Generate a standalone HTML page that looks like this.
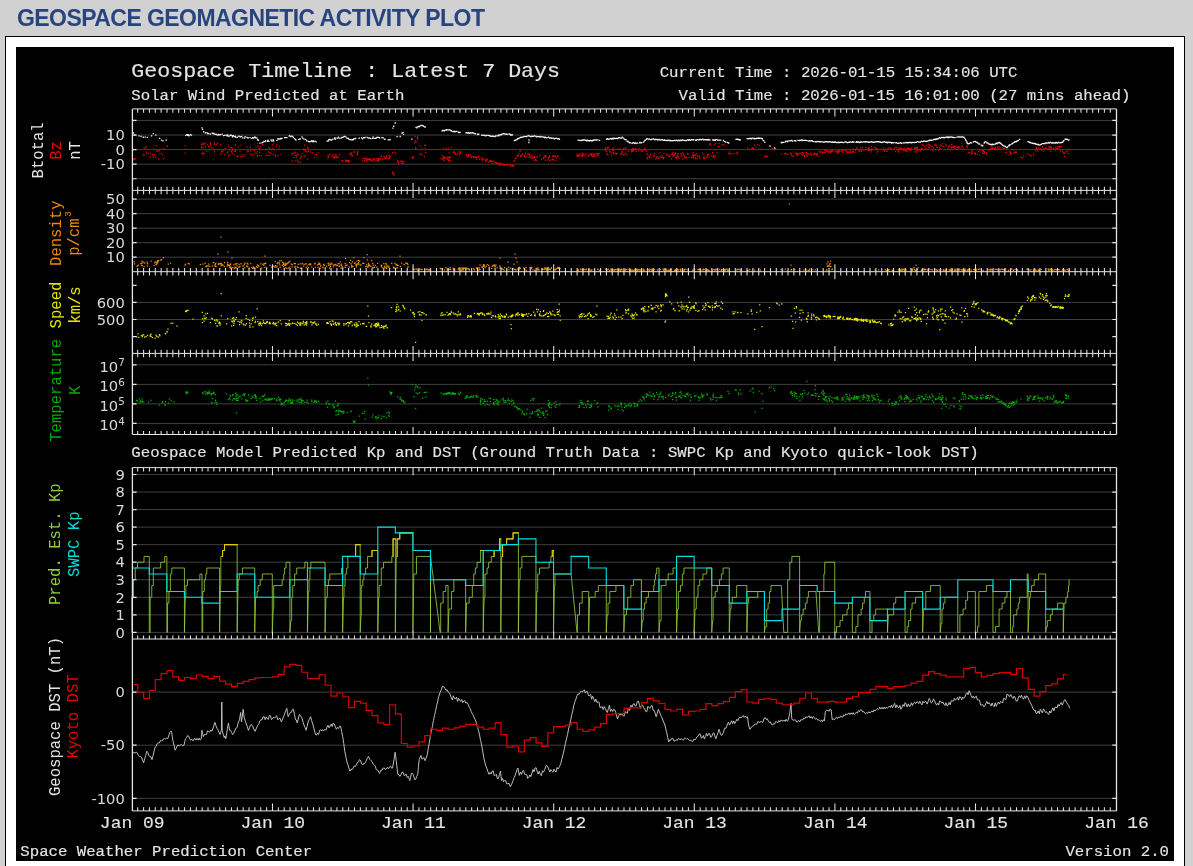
<!DOCTYPE html>
<html lang="en">
<head>
<meta charset="utf-8">
<title>Geospace Geomagnetic Activity Plot</title>
<style>
html,body{margin:0;padding:0;}
body{background:#d1d1d1;width:1193px;height:866px;overflow:hidden;position:relative;font-family:"Liberation Sans",sans-serif;}
h1{position:absolute;left:17px;top:5px;margin:0;font-family:"Liberation Sans",sans-serif;font-weight:bold;font-size:23px;line-height:26px;letter-spacing:-0.56px;color:#28447f;white-space:nowrap;text-transform:uppercase;will-change:transform;}
.box{position:absolute;left:5px;top:36px;width:1178px;height:840px;background:#fff;border:1px solid #000;}
svg{position:absolute;left:0;top:0;will-change:transform;}
</style>
</head>
<body>
<h1>GEOSPACE GEOMAGNETIC ACTIVITY PLOT</h1>
<div class="box"></div>
<svg width="1193" height="866" viewBox="0 0 1193 866">
<rect x="16" y="47" width="1158" height="814" fill="#000"/>
<path d="M132.4 120.45H1116.5M132.4 135.03H1116.5M132.4 149.6H1116.5M132.4 164.17H1116.5M132.4 178.75H1116.5M132.4 257.21H1116.5M132.4 242.69H1116.5M132.4 228.17H1116.5M132.4 213.65H1116.5M132.4 199.13H1116.5M132.4 302.4H1116.5M132.4 319.5H1116.5M132.4 364.8H1116.5M132.4 384.4H1116.5M132.4 403.9H1116.5M132.4 423.4H1116.5M132.4 632.4H1116.5M132.4 614.86H1116.5M132.4 597.31H1116.5M132.4 579.76H1116.5M132.4 562.22H1116.5M132.4 544.67H1116.5M132.4 527.13H1116.5M132.4 509.58H1116.5M132.4 492.04H1116.5M132.4 474.49H1116.5M132.4 692.1H1116.5M132.4 745.2H1116.5M132.4 798.3H1116.5" stroke="#4a4a4a" stroke-width="0.85" fill="none"/>
<path d="M133.49 158.88h1.15M134.57 158.63h1.15M134.19 159.57h1.15M132.62 160.02h1.15M132.55 159.79h1.15M132.66 158.69h1.15M152.68 156.95h1.15M145.13 148.08h1.15M157.77 158.73h1.15M156.51 150.63h1.15M166.53 145.48h1.15M163.57 149.06h1.15M145.65 146.53h1.15M149.77 156.8h1.15M146.56 153.35h1.15M158.06 150.27h1.15M155.77 145.72h1.15M143.52 147.83h1.15M159.1 151.09h1.15M149.91 153.41h1.15M153.4 149.21h1.15M161.96 155.08h1.15M148.15 153.24h1.15M155.21 157.66h1.15M160.33 149.03h1.15M166.63 146.54h1.15M152.52 155.93h1.15M145.84 151.99h1.15M143.01 154.62h1.15M161.22 153.22h1.15M164 149.41h1.15M159.48 153.54h1.15M156.58 151.51h1.15M163.11 158.69h1.15M153.92 154.56h1.15M143.55 155.11h1.15M158.27 159.4h1.15M162.66 148.98h1.15M151.71 154.63h1.15M184.46 149.43h1.15M184.68 145.23h1.15M184.51 153.17h1.15M200.9 144.24h1.15M201.45 153.41h1.15M200.79 147.2h1.15M201.78 153.59h1.15M202.35 153.3h1.15M201.21 146.7h1.15M201.38 153.6h1.15M202.64 142.82h1.15M201 144.01h1.15M201.12 147.73h1.15M201.86 144.46h1.15M202.81 147.52h1.15M210.48 149.21h1.15M222.74 150.64h1.15M213.55 149.8h1.15M216.93 143.32h1.15M221.62 151.67h1.15M221.09 151.88h1.15M210.96 147.29h1.15M204.9 149.99h1.15M204.03 143.47h1.15M207.11 144.57h1.15M209.87 143.3h1.15M202.73 144.44h1.15M204.86 146.88h1.15M203.26 152.75h1.15M215.62 144.41h1.15M208.02 146.69h1.15M210.37 144.11h1.15M220.55 154.12h1.15M212.51 148.26h1.15M204.53 143.88h1.15M209.92 145.74h1.15M220.13 144.56h1.15M203.21 153.64h1.15M213.82 144.39h1.15M214.13 143.01h1.15M213.82 153.95h1.15M220.85 150.71h1.15M208.21 146.92h1.15M206.23 151.58h1.15M213.91 151.66h1.15M209.65 145.26h1.15M219.77 154.03h1.15M250.5 154.96h1.15M249.42 154.12h1.15M230.84 151.32h1.15M234.89 145.17h1.15M224.6 148.32h1.15M231.86 153.53h1.15M253.76 150.44h1.15M253.15 157.25h1.15M253.71 149.39h1.15M230.65 147.66h1.15M229.9 147.38h1.15M243.32 156.14h1.15M250.11 150.84h1.15M244.23 154.88h1.15M226.39 153.12h1.15M252.29 154.66h1.15M247.28 150.82h1.15M229.33 154.74h1.15M234.17 154.89h1.15M254.24 149.79h1.15M236.33 156.73h1.15M246.48 146.94h1.15M227.71 146.7h1.15M252.14 154.96h1.15M228.31 155.21h1.15M254.51 153.08h1.15M234.73 151.71h1.15M227.84 144.98h1.15M254.21 152.99h1.15M240.26 156.56h1.15M237.35 155.78h1.15M249.67 147.46h1.15M231.63 148.49h1.15M231.28 152.19h1.15M231.87 150.08h1.15M227.84 156.27h1.15M234.83 150.57h1.15M242.04 156.19h1.15M236.93 156.36h1.15M239.48 151.5h1.15M240.16 145.04h1.15M237.54 147.11h1.15M223.85 154.87h1.15M229.14 150.77h1.15M246.5 151.81h1.15M233.96 151.33h1.15M241.17 154.68h1.15M227.06 151.86h1.15M231.53 148.29h1.15M247.97 151.2h1.15M269.28 153.04h1.15M278.12 148.73h1.15M270.56 149.58h1.15M268.03 152.12h1.15M266.52 149.95h1.15M267.17 155.5h1.15M272.75 154.62h1.15M278.87 146.23h1.15M269.22 155.53h1.15M276.29 144.57h1.15M258.19 148.71h1.15M256.95 145.97h1.15M256.97 151.8h1.15M274.88 154.9h1.15M259.02 152.44h1.15M271.76 144.64h1.15M277.37 155.86h1.15M260.66 155.65h1.15M265.16 149.33h1.15M280.07 154.02h1.15M259.19 148.57h1.15M268.12 147.31h1.15M260.06 147.03h1.15M273.32 142.96h1.15M269.09 148.69h1.15M255.58 147.21h1.15M270.85 149.67h1.15M256.75 156.1h1.15M274.99 155.92h1.15M257.77 146.31h1.15M256.12 153.29h1.15M261.94 144.46h1.15M265.77 155.1h1.15M275.76 146.22h1.15M258.89 155.2h1.15M269.5 152.23h1.15M257.38 143.48h1.15M272.47 148.48h1.15M256.95 155.46h1.15M271.11 153.6h1.15M291.87 161.09h1.15M291.66 161.16h1.15M296.5 155.66h1.15M297.74 161.83h1.15M294.17 153.46h1.15M297.41 154.6h1.15M292.19 153.8h1.15M291.45 154.22h1.15M294.72 155.3h1.15M300.32 155.14h1.15M297.08 153.97h1.15M295.16 152.29h1.15M293.96 152.26h1.15M299.99 157.89h1.15M293.19 157.08h1.15M302.51 153.22h1.15M301.06 156.64h1.15M297.01 160.86h1.15M295.74 157.42h1.15M299.42 162.42h1.15M295.11 160.84h1.15M299.66 158.78h1.15M295.88 155.75h1.15M291.5 153.46h1.15M304.36 155.69h1.15M307.08 147.2h1.15M304.57 157.17h1.15M316.12 154.66h1.15M307.47 148.36h1.15M307.63 151.55h1.15M305.64 151.35h1.15M307.19 158.94h1.15M317.62 152.84h1.15M306.92 159h1.15M307.88 150.04h1.15M303.34 150.41h1.15M310.3 152.19h1.15M306.28 152.22h1.15M303.4 148.68h1.15M304.64 150.67h1.15M303.94 145.13h1.15M307.8 148.22h1.15M311.93 152.58h1.15M314.36 154.47h1.15M313.85 157.72h1.15M331.33 155.57h1.15M338.83 154.83h1.15M335.55 156.9h1.15M326.98 157.71h1.15M337.66 156.83h1.15M335.67 157.61h1.15M328.18 156.4h1.15M332.78 157.71h1.15M336.56 157.67h1.15M333.78 157.95h1.15M335.03 157.11h1.15M329.32 154.33h1.15M328.1 155.71h1.15M327.75 157.71h1.15M333.46 156.84h1.15M334.32 157.06h1.15M332.59 154.21h1.15M336.48 157.34h1.15M332.76 156.45h1.15M334.73 154.48h1.15M335.71 155.26h1.15M327.36 155.32h1.15M347.18 160.53h1.15M347.27 161.76h1.15M345.22 160.81h1.15M345.1 161.29h1.15M347.49 161.19h1.15M346.46 160.32h1.15M342.35 160.61h1.15M347.29 160.69h1.15M345.84 160.22h1.15M341.63 160.63h1.15M346.7 161.31h1.15M346.73 160.67h1.15M345.41 160.94h1.15M345 160.39h1.15M348.54 160.52h1.15M349.24 161.7h1.15M341.27 160.93h1.15M347.93 161.75h1.15M344.86 160.63h1.15M351.19 156.02h1.15M351.19 154.12h1.15M350.62 153.83h1.15M357.43 151.79h1.15M356.31 153.75h1.15M356.87 154.76h1.15M351.37 155.77h1.15M353.51 151.23h1.15M349.46 153.66h1.15M353.21 152.67h1.15M350.61 152.89h1.15M352.08 155.47h1.15M349.44 155h1.15M356.47 151.72h1.15M357.21 154.81h1.15M357 152.61h1.15M366.96 159.38h1.15M378.8 159.97h1.15M366.74 159.48h1.15M365.13 158.34h1.15M361.85 160.7h1.15M365.32 161.01h1.15M364.64 159h1.15M369.58 158.77h1.15M366.98 161.07h1.15M376.64 160.64h1.15M371.85 160.94h1.15M377.7 159.85h1.15M373.52 158.35h1.15M373.77 159.55h1.15M374.15 160.13h1.15M365.33 158.35h1.15M377.44 158.58h1.15M368.85 159.23h1.15M365.55 160.42h1.15M378.38 158.98h1.15M372.32 159.1h1.15M370.46 159.38h1.15M363.09 158.68h1.15M363.85 160.92h1.15M369.32 158.86h1.15M377.05 161.19h1.15M368.43 158.62h1.15M363.56 158.47h1.15M366.39 158.47h1.15M364.44 158.98h1.15M370.69 160.86h1.15M374.09 159.44h1.15M367.75 159.77h1.15M367.05 159.21h1.15M361.1 159.03h1.15M378.21 158.58h1.15M369.44 160.09h1.15M376.23 158.85h1.15M365.05 158.95h1.15M367.48 159.54h1.15M377.95 160.75h1.15M388.59 155.39h1.15M379.76 158.28h1.15M388.83 157.29h1.15M385.59 155.3h1.15M383.54 159.19h1.15M388.09 158.89h1.15M389.63 156.34h1.15M380.57 155.95h1.15M384.91 158.16h1.15M389.31 158.33h1.15M386.22 158.51h1.15M384.23 157.62h1.15M379.84 158.59h1.15M381.87 159.16h1.15M386.2 156.58h1.15M380.77 156.36h1.15M386.11 158.23h1.15M380.6 155.6h1.15M384.93 157.75h1.15M383.5 156.24h1.15M393.45 152.02h1.15M392.19 152.92h1.15M394.95 153.29h1.15M394.64 152.95h1.15M391.91 152.49h1.15M394.96 153.41h1.15M392.22 172.07h1.15M393.02 174.16h1.15M392.69 172.82h1.15M393.73 174.96h1.15M391.88 172.11h1.15M392.34 173.35h1.15M401.14 161.13h1.15M401.96 162.87h1.15M399.86 161.16h1.15M403.21 161.5h1.15M402.13 161.24h1.15M397.82 162.93h1.15M398.35 163.55h1.15M399.79 161.1h1.15M397.83 161.83h1.15M401.02 163.54h1.15M397.28 161.76h1.15M397.76 163.62h1.15M397.25 160.67h1.15M396.66 161.76h1.15M402.69 163.33h1.15M412.36 158.4h1.15M412.78 157.06h1.15M411.21 158.27h1.15M412.39 156.46h1.15M412.22 157.16h1.15M415.18 140.91h1.15M414.55 136.44h1.15M414.89 141.18h1.15M416.99 138.08h1.15M417.01 139.22h1.15M415.13 147.57h1.15M416.57 142.28h1.15M414.18 142.84h1.15M415.18 148.91h1.15M414.62 141.35h1.15M416.81 136.81h1.15M421.77 155.03h1.15M423.98 145.31h1.15M419.44 145.59h1.15M424.93 148.04h1.15M423.86 156.12h1.15M421.33 148.23h1.15M425.16 152.57h1.15M420.85 153.83h1.15M421.19 148.27h1.15M419.25 154.32h1.15M424.91 152.79h1.15M425.07 145.11h1.15M442.66 158.64h1.15M450.18 160.79h1.15M444.24 157.63h1.15M444.7 158.72h1.15M449.88 157.32h1.15M448.57 159.82h1.15M448.78 159.98h1.15M446.54 157.98h1.15M443.55 158.13h1.15M448.36 156.86h1.15M442.28 159.89h1.15M442.8 156.79h1.15M440.58 158.99h1.15M443.61 160.91h1.15M449.41 160.95h1.15M442.98 156.88h1.15M441.23 158.74h1.15M447.61 158.51h1.15M442.66 158.38h1.15M446.68 159.53h1.15M448 160.31h1.15M447.14 157.05h1.15M448.97 157.82h1.15M446.12 158.18h1.15M447.9 148.19h1.15M442.8 148.7h1.15M441.82 155.73h1.15M446.24 149.59h1.15M444.34 156.92h1.15M445.5 148.55h1.15M448.63 153.19h1.15M450.53 147.13h1.15M456.24 154.52h1.15M458.95 154.93h1.15M453.02 152.26h1.15M453.61 151.82h1.15M459.92 153.51h1.15M459.61 152.6h1.15M459.13 152.93h1.15M454.65 154.34h1.15M459.72 151.45h1.15M457.14 153.67h1.15M454.34 152.59h1.15M453.77 151.88h1.15M454.61 153.58h1.15M457.55 151.87h1.15M452.81 152.41h1.15M469.63 154.79h1.15M467.36 154.85h1.15M470.36 155.95h1.15M465.82 154.52h1.15M467.88 155.96h1.15M469.39 154.49h1.15M466.44 156.43h1.15M467.97 155.11h1.15M467.33 157.25h1.15M467.36 156.01h1.15M467.64 155.53h1.15M470.78 157.39h1.15M467.68 154.83h1.15M527.47 154.06h1.15M519.89 156.99h1.15M524.27 156.65h1.15M524.09 156.91h1.15M524.66 153.88h1.15M519.98 155.52h1.15M526.55 157.02h1.15M520.76 155.81h1.15M523.72 155.32h1.15M521.36 154.39h1.15M525.3 157.09h1.15M520.97 155.26h1.15M528.28 157.26h1.15M521.9 153.73h1.15M529.73 157.3h1.15M524.89 153.42h1.15M529.55 154.83h1.15M529.32 155.81h1.15M528.48 153.87h1.15M528.08 154.13h1.15M524.07 156.75h1.15M554.62 156.25h1.15M536.72 157.38h1.15M545.5 157.29h1.15M533.93 156.58h1.15M551.56 159.97h1.15M531.53 158.22h1.15M552.52 155.5h1.15M554.88 155.91h1.15M547.89 158.16h1.15M548.7 156.89h1.15M542.63 158.33h1.15M542.8 158.73h1.15M543.42 157.58h1.15M531.01 158.52h1.15M544.67 156.52h1.15M552.7 159.36h1.15M543.75 156.23h1.15M544.19 155.86h1.15M534.09 157.54h1.15M533.01 157.6h1.15M545.27 155.51h1.15M548.97 155.73h1.15M551.82 159.34h1.15M545.31 155.58h1.15M545.09 157.26h1.15M558.19 156.01h1.15M555.44 160.48h1.15M551.78 159.54h1.15M536 160.4h1.15M544.74 160.27h1.15M557.17 156.16h1.15M553.42 160.14h1.15M532.24 157.12h1.15M552.48 156.13h1.15M556.59 156.73h1.15M554.22 156.05h1.15M545.04 160.08h1.15M536.43 156.67h1.15M545.15 156.96h1.15M531.4 156.25h1.15M535.05 160.17h1.15M550.24 159.96h1.15M535.27 159.38h1.15M533.7 158.06h1.15M548.97 157.17h1.15M555.9 158.19h1.15M547.32 159.89h1.15M533.39 160.46h1.15M548.78 157.35h1.15M553.7 156.68h1.15M559.35 158.3h1.15M540.88 159.28h1.15M543.28 156.22h1.15M552.11 155.55h1.15M554.35 156.62h1.15M549.05 160.42h1.15M547.49 158.75h1.15M539.49 155.31h1.15M531.32 156.08h1.15M590.59 154.67h1.15M588.22 156.24h1.15M579.46 153.97h1.15M591.45 153.28h1.15M576.49 154.41h1.15M578.87 154.41h1.15M581.58 155.18h1.15M589.97 153.89h1.15M590.78 154.81h1.15M579.52 156.38h1.15M582.03 153.71h1.15M578.63 155.37h1.15M596.46 155.86h1.15M585.67 154.1h1.15M576.69 155.39h1.15M589.36 154.39h1.15M591.27 154.71h1.15M597.98 155.69h1.15M582.14 156.27h1.15M577.44 155.01h1.15M585.76 154.01h1.15M577.77 155.85h1.15M576.71 155.07h1.15M598.07 153.68h1.15M581.01 155.27h1.15M588.08 155.38h1.15M595.13 153.79h1.15M583.54 154.22h1.15M577.54 156.22h1.15M594.43 155.63h1.15M576.57 156.07h1.15M593.56 154.78h1.15M593.49 154.74h1.15M581.62 153.56h1.15M581.77 153.33h1.15M584.14 155.75h1.15M592.41 156.07h1.15M592.79 154.1h1.15M589.16 154.68h1.15M594.56 154.98h1.15M582.53 155.38h1.15M598.62 153.94h1.15M596.67 153.25h1.15M582.41 154h1.15M593.53 156.41h1.15M593.59 154.31h1.15M596.67 154.32h1.15M581.93 156.29h1.15M590.93 155.56h1.15M591.73 156.53h1.15M616.04 153.95h1.15M621.54 154.1h1.15M615.26 152.99h1.15M618.47 149.49h1.15M609.83 152.13h1.15M606.6 154.55h1.15M608.21 147.13h1.15M607.3 154.7h1.15M613.04 148.09h1.15M605.42 147.25h1.15M621.42 152.22h1.15M621.52 153.09h1.15M606.31 151.86h1.15M613.48 153.77h1.15M624.48 154.39h1.15M606.31 154.19h1.15M626.76 154.83h1.15M607.31 148.63h1.15M607.42 147.19h1.15M625.15 153.72h1.15M620.01 153.83h1.15M619.95 149.31h1.15M607.13 147.72h1.15M622.98 148.62h1.15M612.42 150.46h1.15M605.23 149.06h1.15M611.54 152.91h1.15M613.59 149.59h1.15M627.96 151.13h1.15M625.24 152.09h1.15M605.47 150.37h1.15M615.24 153.39h1.15M613.08 152.82h1.15M617.69 148.72h1.15M625.5 147.66h1.15M624.48 148.33h1.15M604.76 148.6h1.15M623.09 155.11h1.15M604.83 151.02h1.15M616.57 153.59h1.15M609.17 151.05h1.15M613.09 153.89h1.15M611 154.83h1.15M611.56 148.7h1.15M621.58 151.09h1.15M631.27 150.61h1.15M630.78 151.23h1.15M641.14 151.23h1.15M639.97 149.46h1.15M636.17 149.62h1.15M644.38 148.35h1.15M644.35 148.1h1.15M632.89 149.08h1.15M644.57 150.05h1.15M635.8 151.62h1.15M633.35 149.89h1.15M638.35 151.09h1.15M642.08 150.65h1.15M635.28 149.34h1.15M632.03 151.46h1.15M640.55 151.04h1.15M632.27 149.8h1.15M642.42 150.37h1.15M631.54 149.89h1.15M644.3 148.98h1.15M632.64 149.24h1.15M641.24 151.46h1.15M632.02 148.64h1.15M633.58 149.34h1.15M638.2 148.66h1.15M634.94 148.78h1.15M645.81 150.99h1.15M631.14 151.95h1.15M631.13 149.58h1.15M645.95 151.26h1.15M641.74 149.78h1.15M632.72 150.62h1.15M654.06 153.8h1.15M674.69 152.63h1.15M675.47 157.78h1.15M697.05 155.8h1.15M692.58 155.55h1.15M656.62 156.51h1.15M675.89 157.44h1.15M712.78 155.32h1.15M688.3 157.49h1.15M677.1 153.95h1.15M699.16 158.38h1.15M702.96 157.16h1.15M708.71 157.02h1.15M693.25 155.49h1.15M669.17 156.67h1.15M653.4 155.25h1.15M703.57 157.25h1.15M692.38 154.1h1.15M677.27 155.5h1.15M691.79 155.18h1.15M695.72 158.73h1.15M659.64 156.85h1.15M703.27 155.04h1.15M682.13 159.03h1.15M649.02 156.09h1.15M658.01 157.72h1.15M715.17 155.93h1.15M653.63 156.31h1.15M685.88 157.28h1.15M683.77 156.75h1.15M706.99 155.95h1.15M676.3 158.85h1.15M661.62 157.05h1.15M674.99 157.59h1.15M655.2 159.09h1.15M672.28 152.79h1.15M666.34 155.12h1.15M647.2 155.25h1.15M677.05 157.15h1.15M672.04 154.2h1.15M662.68 157.44h1.15M715.12 155.98h1.15M662.27 157.85h1.15M674.96 153.84h1.15M655.7 157.68h1.15M705.57 156.71h1.15M680.61 156.22h1.15M662.79 158.95h1.15M672.11 156.74h1.15M706.24 157.95h1.15M680.54 154.4h1.15M686.41 153.25h1.15M707.34 154.81h1.15M708.58 154.22h1.15M673.8 154.12h1.15M677.46 153.66h1.15M646.42 157.31h1.15M666.84 154.07h1.15M668.35 155.66h1.15M677.63 156.73h1.15M694.55 154.86h1.15M714.3 158.21h1.15M650.41 158.03h1.15M712.62 157.73h1.15M656.52 158.05h1.15M692.64 152.5h1.15M647.07 158.87h1.15M694.31 154.1h1.15M653.67 153.37h1.15M663.35 157.68h1.15M671.62 153.44h1.15M712.49 157.78h1.15M658.53 158.46h1.15M690.82 157.71h1.15M695.22 158.48h1.15M703.99 158.1h1.15M660.69 157.11h1.15M685.13 157.45h1.15M678.37 158.4h1.15M686.91 154.2h1.15M663.39 153.35h1.15M682.37 152.8h1.15M680.46 153.38h1.15M682.24 155.79h1.15M685.77 158.27h1.15M646.71 158.12h1.15M680.53 156.23h1.15M694.99 158.12h1.15M673.71 155.25h1.15M716.64 152.91h1.15M692.92 156.73h1.15M648.32 156.55h1.15M696.26 158.73h1.15M670.45 159.08h1.15M683.65 155.7h1.15M712.02 152.63h1.15M698.87 156.65h1.15M671.04 158.26h1.15M673.06 155.63h1.15M684.75 157.64h1.15M661.67 155.36h1.15M677.19 156.17h1.15M706.82 154.39h1.15M706.9 155.15h1.15M683.15 154.25h1.15M683.35 159.03h1.15M694.2 157.79h1.15M670.48 154.56h1.15M668.16 156.39h1.15M692.76 157.73h1.15M649.16 157.31h1.15M711.14 156.11h1.15M649.87 154.44h1.15M646.68 153.69h1.15M713.77 156.54h1.15M694.46 157.77h1.15M712.91 156.56h1.15M691.43 156.66h1.15M697.27 156.45h1.15M696.14 153.85h1.15M695.12 155.51h1.15M702.13 153.09h1.15M659.51 152.65h1.15M703 158.62h1.15M694.29 154.91h1.15M706.52 157.75h1.15M687.43 154.15h1.15M668.36 155.27h1.15M713.71 144.51h1.15M718.46 146.62h1.15M709.83 145.08h1.15M709.6 143.2h1.15M720.94 145.12h1.15M722.53 144.58h1.15M709.23 144.33h1.15M717.73 146.64h1.15M723.44 144.7h1.15M715.09 143.13h1.15M718.5 143.59h1.15M729.82 152.03h1.15M727.98 153.37h1.15M729.45 153.93h1.15M729.03 153.74h1.15M729.54 152.04h1.15M736.92 152.48h1.15M737.09 152.37h1.15M728.55 153.55h1.15M736.84 153.71h1.15M737.05 152.17h1.15M735.78 153.42h1.15M733.68 153.86h1.15M731.1 153.93h1.15M757.3 144.86h1.15M747.04 148.18h1.15M758.76 145.21h1.15M751.37 148.59h1.15M749.25 149.28h1.15M753.93 145.11h1.15M752.19 147.79h1.15M753.23 148.32h1.15M748.94 148.95h1.15M752.13 148.15h1.15M756.02 146.97h1.15M752.46 148.89h1.15M760.62 148.88h1.15M765.69 155.94h1.15M763.67 156.96h1.15M766.24 156.74h1.15M764.75 156.41h1.15M767.33 156.75h1.15M774.45 148.62h1.15M773.72 149.78h1.15M773.51 149.37h1.15M774.45 149.79h1.15M775.32 148.57h1.15M771.93 148.53h1.15M783.81 153.82h1.15M786.95 154.24h1.15M780.76 154.17h1.15M786.92 154.21h1.15M785 153.38h1.15M787.23 154.13h1.15M785.9 154.28h1.15M481.79 158.55h1.15M494.99 162.91h1.15M498.92 163.83h1.15M491.48 161.39h1.15M479.09 159.44h1.15M485.09 159.97h1.15M494.25 162.44h1.15M497.91 164.58h1.15M485.59 159.9h1.15M477.26 157.7h1.15M482.26 159.29h1.15M486.78 159.16h1.15M500.84 163.72h1.15M490.16 161.51h1.15M489.12 161.07h1.15M472.23 156.52h1.15M497 163.67h1.15M479.29 158.87h1.15M499.36 165.33h1.15M499.85 163.09h1.15M477.51 156.63h1.15M473.12 157.52h1.15M485.05 161.73h1.15M473.51 156.83h1.15M475.14 157.71h1.15M488.16 162.14h1.15M491.25 161.63h1.15M476.31 159.4h1.15M478.12 156.86h1.15M481.94 160.74h1.15M496.16 163.03h1.15M492.42 163.42h1.15M473.26 156.58h1.15M499.15 164.15h1.15M488.95 161.02h1.15M481.12 157.88h1.15M485.73 159.25h1.15M475.82 156.93h1.15M492.64 160.91h1.15M498.81 164.38h1.15M497.02 163.63h1.15M484.73 160.1h1.15M496.3 163.52h1.15M481.58 159.71h1.15M490.03 160.41h1.15M473.29 157.27h1.15M475.87 157.77h1.15M483.69 158.7h1.15M496.22 162.44h1.15M486.01 160.83h1.15M474.97 157.32h1.15M497.85 163.6h1.15M506.89 164.6h1.15M503.45 165.41h1.15M513.4 165.83h1.15M504.54 164.95h1.15M510.01 165.87h1.15M501.13 164.92h1.15M502.68 164.63h1.15M507.51 164.76h1.15M512.32 165.41h1.15M502.65 164.78h1.15M509.82 164.48h1.15M502.02 164.94h1.15M504.35 164.75h1.15M509.77 166.02h1.15M503.45 164.64h1.15M506.03 164.84h1.15M511.06 165.84h1.15M511.73 164.97h1.15M512.3 166.18h1.15M504.25 165.02h1.15M505.51 164.46h1.15M508.36 164.7h1.15M516.28 156.29h1.15M518 155.27h1.15M515.48 158.39h1.15M518.23 153.6h1.15M519.53 151.6h1.15M516.82 155.27h1.15M519.62 150.42h1.15M514.08 160.64h1.15M513.62 160.93h1.15M514.67 158.89h1.15M517.11 155.94h1.15M791.74 155.95h1.15M790.05 153.05h1.15M803.4 152.41h1.15M800.61 153.39h1.15M813.95 153.36h1.15M810.6 154.17h1.15M816.2 153.63h1.15M813.33 153.96h1.15M816.3 154.55h1.15M795.77 153.51h1.15M817.47 156.34h1.15M812.61 153.9h1.15M803.88 156.87h1.15M796.03 154.36h1.15M799.4 153h1.15M801.41 152.78h1.15M792.81 156.43h1.15M816.18 155.52h1.15M814.64 153.96h1.15M807.52 154.03h1.15M796.74 155.6h1.15M806.93 153.51h1.15M801.43 154.91h1.15M797.67 153.51h1.15M806.14 155.6h1.15M796.59 154.2h1.15M793.07 151.97h1.15M797.33 153.29h1.15M795.86 153.11h1.15M813.33 154.74h1.15M807.78 153.94h1.15M802.23 154.68h1.15M802.47 152.86h1.15M795.22 153.89h1.15M805.89 152.3h1.15M813.98 153.59h1.15M803.12 155.01h1.15M797.38 153.99h1.15M790.68 155.13h1.15M790.54 153.69h1.15M810.27 152.21h1.15M816.83 153.88h1.15M798.6 154.28h1.15M806.78 156.21h1.15M803.9 155.64h1.15M810.98 154.98h1.15M809.49 154.33h1.15M814.24 153.51h1.15M805.89 155.58h1.15M805.48 154.8h1.15M814.3 154.16h1.15M801.98 154.74h1.15M827.84 151.58h1.15M830.91 151.95h1.15M846.49 151.57h1.15M824.2 150.43h1.15M837.3 150.94h1.15M848.85 152.08h1.15M846.1 152.08h1.15M832.31 151.52h1.15M819.61 151.84h1.15M848.86 152.42h1.15M851.47 151.78h1.15M840.98 151.12h1.15M837.95 152.39h1.15M840.69 150.84h1.15M830.57 151.61h1.15M837.26 153.64h1.15M834.33 151.85h1.15M851.4 151.41h1.15M845.36 150.52h1.15M850.8 152.48h1.15M821.73 153.04h1.15M845.51 153.72h1.15M832.12 150.43h1.15M835.16 150.99h1.15M824.14 152.24h1.15M829.86 153.15h1.15M819.44 152.16h1.15M828.3 151h1.15M828.22 152.69h1.15M840.41 151h1.15M836.56 151.5h1.15M835.83 153.01h1.15M831.8 150.04h1.15M843.47 149.88h1.15M823.74 152.49h1.15M838.56 151.4h1.15M818.44 151.91h1.15M841.99 150.6h1.15M826.96 151.71h1.15M837.53 151.24h1.15M830.94 151.57h1.15M837.54 152.62h1.15M838.8 150.07h1.15M849.21 152.09h1.15M848.14 151.98h1.15M838.21 152.75h1.15M849.84 150.86h1.15M842.09 150.62h1.15M847.35 152.34h1.15M826.18 150.62h1.15M824.27 152.3h1.15M836.84 150.89h1.15M830.94 150.48h1.15M822.16 152.11h1.15M826.23 150.49h1.15M825.97 151.01h1.15M829.46 151.38h1.15M821.13 151.94h1.15M822.31 152.34h1.15M844.99 150.58h1.15M842.23 152.47h1.15M824.99 152.75h1.15M825.64 150.74h1.15M870.81 150.59h1.15M867.57 148.58h1.15M868.13 150.31h1.15M854.88 150.2h1.15M858.91 150.58h1.15M869.48 149.55h1.15M862.17 147.29h1.15M874.76 149.94h1.15M854.5 149.72h1.15M865.18 147.66h1.15M860.02 147.62h1.15M871.09 148.84h1.15M876.34 152.42h1.15M875.04 147.82h1.15M852.33 151.26h1.15M861.12 150.26h1.15M870.61 150.35h1.15M861.14 149.3h1.15M854.67 152.38h1.15M870.98 146.62h1.15M855.95 148.16h1.15M861.92 147.61h1.15M868.95 150.07h1.15M867.09 149.89h1.15M863.4 150.12h1.15M851.55 152.25h1.15M859.34 149.62h1.15M868.11 147.39h1.15M854.56 150.01h1.15M876.49 149.4h1.15M870.49 150.52h1.15M874.15 147.69h1.15M877.36 151.3h1.15M870.41 152.09h1.15M868.67 148.19h1.15M870.59 149.78h1.15M876.86 149.59h1.15M852.72 151.87h1.15M858.66 151.9h1.15M868.93 149.24h1.15M853.15 149.15h1.15M857.02 147.97h1.15M870.83 149.66h1.15M858.12 149.85h1.15M877.07 148.72h1.15M875.68 148.91h1.15M860.63 151.34h1.15M872.29 149.4h1.15M904.51 150.28h1.15M914.25 147.82h1.15M894.53 147.41h1.15M891.19 149.3h1.15M898.2 147.92h1.15M899.06 148.2h1.15M882.43 149.61h1.15M910.87 149.01h1.15M920.5 148.62h1.15M899.91 148.48h1.15M902.18 149.38h1.15M906.43 151.28h1.15M906.77 148.1h1.15M885.23 149.01h1.15M914.6 148.05h1.15M906.16 151.91h1.15M886.48 151.44h1.15M910.53 148.14h1.15M914.01 148.67h1.15M902.52 150.2h1.15M889.46 148.43h1.15M905.75 151.17h1.15M917.35 150.91h1.15M900.36 147.98h1.15M903.77 148.91h1.15M886.28 150.83h1.15M883.18 148.04h1.15M887.42 148.78h1.15M914.66 151.52h1.15M897.25 149.44h1.15M900.99 148.88h1.15M897.81 151.07h1.15M917.3 147.99h1.15M897.99 149.34h1.15M887.61 147.83h1.15M898.72 152.23h1.15M915.69 152.4h1.15M905.4 149.21h1.15M907.77 149.32h1.15M903.36 150.9h1.15M906.55 148.53h1.15M916.51 147.26h1.15M907.86 148.2h1.15M907.1 149.46h1.15M896.87 149.88h1.15M896.03 147.49h1.15M916.72 148.58h1.15M915.55 147.65h1.15M901.66 148.83h1.15M902.64 149h1.15M884.16 149.9h1.15M882.79 148.05h1.15M897.84 150.84h1.15M909.37 149.22h1.15M920.93 149.07h1.15M914.21 148.29h1.15M919.65 150.61h1.15M885.16 149.1h1.15M889.35 147.77h1.15M904.33 148.14h1.15M909.07 150.54h1.15M905.45 150.9h1.15M917.87 149.72h1.15M910.66 149.91h1.15M907.94 149.45h1.15M895.05 151.65h1.15M909.67 148.55h1.15M883.6 150.65h1.15M884.16 151.4h1.15M890.09 148.52h1.15M914.54 148.69h1.15M880.3 149.33h1.15M887.19 149.13h1.15M908.22 148.18h1.15M916.1 150.28h1.15M913.29 149.49h1.15M893.77 148.56h1.15M916.01 149.11h1.15M925.15 148.96h1.15M929.57 145.38h1.15M939.07 148h1.15M934.15 144.44h1.15M925.87 148.9h1.15M922.24 144.96h1.15M931.15 146.75h1.15M928.75 145.18h1.15M928.33 144.75h1.15M942.04 143.55h1.15M935.42 145.02h1.15M931.83 146.2h1.15M932.42 150.83h1.15M922.04 148.27h1.15M939.65 148.59h1.15M934.65 145.43h1.15M938.03 150.26h1.15M935.63 147.18h1.15M936.86 147.5h1.15M928.68 146.72h1.15M922.59 145.49h1.15M942.08 146.27h1.15M926.44 145.18h1.15M924.17 146.4h1.15M930.84 146.96h1.15M927.68 143.73h1.15M927.66 147.05h1.15M932.9 148.05h1.15M940.67 145.51h1.15M925.08 149.25h1.15M928.82 147.74h1.15M939.56 145.05h1.15M940.21 144.97h1.15M921.81 144.55h1.15M936.12 145.32h1.15M947.35 148.83h1.15M958.59 146.61h1.15M966.5 145.58h1.15M962.64 147.8h1.15M945.76 145.76h1.15M964.3 149.23h1.15M947.65 147.21h1.15M958.61 147.25h1.15M950.8 144.71h1.15M943.47 146.74h1.15M954.73 146.3h1.15M953.96 146.65h1.15M956.48 147.08h1.15M957.74 147.12h1.15M944.67 144h1.15M961.58 146.5h1.15M952.95 147.43h1.15M956.26 147.97h1.15M950.63 146.9h1.15M960.18 149.13h1.15M950.09 150h1.15M953.7 146.08h1.15M965.94 143.34h1.15M954.27 148.68h1.15M951.42 147.8h1.15M961.32 143.25h1.15M945.69 145.09h1.15M956.26 147.4h1.15M951.5 144.11h1.15M960.84 147.25h1.15M943.05 146.99h1.15M966.98 147.46h1.15M950.97 147.98h1.15M950.45 146.95h1.15M960.73 145.7h1.15M952.41 146.59h1.15M956.49 148.26h1.15M966.04 146.28h1.15M948.65 145.64h1.15M948.13 146.74h1.15M958.46 148.11h1.15M971.97 151.76h1.15M985.55 153.17h1.15M983.21 153.06h1.15M974.39 154h1.15M970.82 153.67h1.15M976.94 154.29h1.15M971.83 153.54h1.15M983.8 152.86h1.15M985.57 153.71h1.15M967.94 153h1.15M967.62 152.92h1.15M982.88 150.17h1.15M981.76 150.73h1.15M986.71 154.76h1.15M988 150.17h1.15M984.06 151.76h1.15M978.03 151.53h1.15M969.63 152.74h1.15M974.07 152.7h1.15M977.66 151.2h1.15M971.18 152.12h1.15M982.93 151.37h1.15M974.85 154.13h1.15M974.76 153.33h1.15M985.97 152.72h1.15M971.15 150.4h1.15M968.33 152.41h1.15M979.11 150.54h1.15M981.88 153.38h1.15M978.95 155.02h1.15M1003.02 148.35h1.15M993.74 149.17h1.15M994.89 147.39h1.15M990.81 148.01h1.15M998.58 148.54h1.15M998.63 146.86h1.15M991.74 147.88h1.15M1001.52 147.87h1.15M1000.02 147.91h1.15M997.59 148.86h1.15M988.44 149.79h1.15M996.94 149.76h1.15M992.34 149.11h1.15M994.75 148.32h1.15M997.21 148.87h1.15M993.8 148.51h1.15M992.15 147.63h1.15M1003.6 148.58h1.15M997.14 147.1h1.15M990.8 149.36h1.15M997.17 149.02h1.15M992.41 147.98h1.15M996.11 149.4h1.15M1003.36 147.73h1.15M994.79 149.94h1.15M990.48 146.22h1.15M990.14 148.48h1.15M997.13 146.63h1.15M1010.11 154.29h1.15M1010.79 153.34h1.15M1014.69 152.31h1.15M1009.75 152.14h1.15M1009.8 152.06h1.15M1005.35 152.17h1.15M1005.85 152.46h1.15M1008.58 151.7h1.15M1015.64 152.07h1.15M1015.95 151.84h1.15M1015.11 152.68h1.15M1005.68 152.26h1.15M1014.1 152.02h1.15M1013.29 153.08h1.15M1009.98 153.86h1.15M1007.54 154.27h1.15M1009.82 152.69h1.15M1020.12 157.21h1.15M1022.03 157.82h1.15M1023 156.02h1.15M1021.77 157.59h1.15M1021.57 157.74h1.15M1029.78 155.31h1.15M1032.97 156.01h1.15M1029.46 154.82h1.15M1030.72 156.23h1.15M1027.11 154.09h1.15M1032.91 153.9h1.15M1054.99 147.1h1.15M1053.02 149.21h1.15M1035.92 148.9h1.15M1050.37 151.5h1.15M1058.23 146.59h1.15M1048.57 148.48h1.15M1041.92 146.94h1.15M1041.39 150.03h1.15M1048.37 146.55h1.15M1042.74 150.96h1.15M1057.81 146.51h1.15M1035.85 148.17h1.15M1047.1 148.77h1.15M1044.41 148.51h1.15M1059.52 147.05h1.15M1043 148.29h1.15M1049.85 147.02h1.15M1056.16 148.51h1.15M1056.33 148.67h1.15M1059.95 149.69h1.15M1036 148.77h1.15M1035.76 148.26h1.15M1050.7 148.88h1.15M1049.74 149.6h1.15M1052.82 148.39h1.15M1040.19 148.44h1.15M1059.48 145.95h1.15M1037.02 151.21h1.15M1045.75 148.19h1.15M1059.16 147.91h1.15M1035.97 147.53h1.15M1057.25 146.76h1.15M1050.32 148.06h1.15M1038.63 149.37h1.15M1057.39 148.32h1.15M1061.18 146.38h1.15M1044.8 148h1.15M1049.32 146.87h1.15M1054.31 148.9h1.15M1037.55 148.32h1.15M1059.63 151.94h1.15M1048.79 147.17h1.15M1054.91 150.07h1.15M1036.96 149.78h1.15M1050.74 147.14h1.15M1038.24 149.1h1.15M1057.5 149.06h1.15M1035.31 150.58h1.15M1064.24 155.96h1.15M1062.09 152.2h1.15M1063.53 152.84h1.15M1067.48 150.29h1.15M1065.81 151.58h1.15M1067.48 153.46h1.15M1061.97 151.41h1.15M1066.45 151.87h1.15M1064.3 153.37h1.15M1062.92 153.71h1.15M1064.15 156.49h1.15" stroke="#e60000" stroke-width="1.15" fill="none"/>
<path d="M132.87 133h1.3M134.25 135.04h1.3M138.43 135.87h1.3M140.44 136.3h1.3M142.62 137.26h1.3M144.51 137.05h1.3M146.66 137.37h1.3M150.89 135.87h1.3M152.64 133.56h1.3M155.2 135.21h1.3M159.05 138.44h1.3M160.88 140.14h1.3M162.34 140.79h1.3M165.45 140.06h1.3M185.26 135.35h1.3M186.14 134.6h1.3M186.99 135.31h1.3M187.55 134.77h1.3M188.31 135.89h1.3M189.36 134.93h1.3M190.02 134.93h1.3M190.78 135.08h1.3M201.32 127.85h1.3M201.83 129.3h1.3M202.99 131.75h1.3M204.8 132.76h1.3M206.41 132.88h1.3M207.07 133.49h1.3M208.09 133.72h1.3M209.64 134.08h1.3M211.45 133.17h1.3M212.31 133.27h1.3M212.83 133.73h1.3M213.69 133.92h1.3M214.87 134.42h1.3M215.61 134.04h1.3M216.49 134.85h1.3M217.27 135.22h1.3M218.19 134.45h1.3M218.65 134.94h1.3M219.86 134.57h1.3M221.47 134.18h1.3M222.77 135.69h1.3M223.74 135.44h1.3M225.27 135.18h1.3M226.4 135.76h1.3M226.94 134.92h1.3M227.75 136.05h1.3M228.65 136.08h1.3M229.65 135.26h1.3M230.4 135.21h1.3M231.29 135.55h1.3M231.83 136.93h1.3M232.69 135.77h1.3M233.77 136.55h1.3M234.6 136.27h1.3M235.24 137.29h1.3M236.75 137.23h1.3M238.33 136.27h1.3M239.63 136.88h1.3M240.4 136.61h1.3M241.01 136.42h1.3M241.94 137.81h1.3M243.8 138.05h1.3M244.5 136.73h1.3M246.32 137.4h1.3M247.01 137.93h1.3M247.7 137.82h1.3M249.43 137.72h1.3M251.27 138.29h1.3M251.97 137.69h1.3M252.91 138.18h1.3M253.74 137.7h1.3M254.23 136.84h1.3M255.12 137.77h1.3M256.34 138.08h1.3M257.03 139.76h1.3M257.59 140.23h1.3M259.4 143.11h1.3M261.28 142.97h1.3M262.3 142.4h1.3M263.22 141.43h1.3M264.27 141.7h1.3M265.02 140.76h1.3M266.76 141.34h1.3M267.33 140.15h1.3M268.22 141.29h1.3M270.42 140.01h1.3M271.39 141.02h1.3M272.48 139.54h1.3M272.97 140.77h1.3M276.24 140.34h1.3M277.02 138.85h1.3M278.19 138.98h1.3M278.99 139.1h1.3M279.8 138.35h1.3M280.33 138.97h1.3M281.33 138.38h1.3M284.07 137.64h1.3M284.61 137.68h1.3M285.49 137.71h1.3M286.27 137.62h1.3M288.56 136.12h1.3M289.08 135.67h1.3M290.15 136.58h1.3M291.11 136.12h1.3M292.06 136.31h1.3M292.68 137.68h1.3M293.92 138.58h1.3M294.66 139.37h1.3M295.39 140.19h1.3M297.97 139.32h1.3M299.07 139.09h1.3M299.73 138.83h1.3M301.33 136.86h1.3M302.27 138.13h1.3M303.41 139.04h1.3M305.06 139.29h1.3M306.11 140.74h1.3M307.78 141.45h1.3M308.5 141.75h1.3M309.5 141.55h1.3M310.27 141.44h1.3M311.11 140.62h1.3M311.83 141.64h1.3M312.59 140.96h1.3M313.14 141.55h1.3M314.31 141.07h1.3M315.57 141.84h1.3M326.57 141.08h1.3M327.47 141.02h1.3M328.18 139.73h1.3M329.12 139.42h1.3M329.81 139.81h1.3M330.71 140.07h1.3M331.31 139.79h1.3M332.34 139.18h1.3M333.91 138.02h1.3M334.54 139.41h1.3M335.35 138.16h1.3M337.19 138.26h1.3M337.76 137.06h1.3M339.14 138.05h1.3M340.52 138.04h1.3M341.4 137.46h1.3M342.66 137.2h1.3M343.51 136.65h1.3M343.97 136.38h1.3M345.11 136.89h1.3M346.06 138.22h1.3M347.33 138.3h1.3M348.14 139.02h1.3M349.38 139.64h1.3M349.77 139.66h1.3M350.89 139.97h1.3M351.7 139.77h1.3M352.59 139.97h1.3M353.17 138.64h1.3M354.24 138.91h1.3M355.01 138.34h1.3M358.5 138.26h1.3M360.87 137.79h1.3M361.9 138.95h1.3M362.8 137.57h1.3M363.4 137.84h1.3M364.42 137.49h1.3M366.5 137.35h1.3M367.61 138.13h1.3M368.33 137.86h1.3M369.08 138.09h1.3M370 138.57h1.3M371.74 138.37h1.3M372.45 136.97h1.3M373.24 138.33h1.3M374.61 138.44h1.3M375.54 138h1.3M376.25 137.28h1.3M377.1 137.29h1.3M377.79 137.46h1.3M379.02 137.77h1.3M381.33 137.63h1.3M382.59 137.88h1.3M383.82 139.36h1.3M384.36 139.25h1.3M387.58 139.83h1.3M388.41 139.89h1.3M389.51 139.54h1.3M392.3 128.06h1.3M393.02 126.27h1.3M394.55 122.99h1.3M396.42 136.71h1.3M399.58 136.49h1.3M401.32 133.23h1.3M402.42 132.41h1.3M402.94 134.39h1.3M411.21 139.18h1.3M415.42 127.41h1.3M416.21 127.8h1.3M416.88 126.81h1.3M417.89 126.49h1.3M418.8 126.66h1.3M419.5 125.85h1.3M420.61 125.46h1.3M421.36 125.5h1.3M422.13 125.56h1.3M423.07 126.4h1.3M424.17 127.05h1.3M424.57 126.95h1.3M441.46 130.93h1.3M442.2 130.45h1.3M442.9 130.55h1.3M443.61 130.73h1.3M444.53 130.08h1.3M445.69 130.19h1.3M446.12 129.69h1.3M447.2 129.95h1.3M447.72 129.82h1.3M448.91 129.9h1.3M449.49 130.13h1.3M450.49 130.73h1.3M451.08 131.15h1.3M452.3 131.65h1.3M453.07 131.52h1.3M453.92 131.42h1.3M454.41 131.83h1.3M455.56 131.46h1.3M456.05 131.46h1.3M457.68 132.23h1.3M458.69 132.49h1.3M459.43 132.31h1.3M465.35 132.8h1.3M466.31 132.73h1.3M467.29 133.03h1.3M467.91 132.65h1.3M468.73 133.36h1.3M469.57 132.68h1.3M470.59 133.15h1.3M471.6 132.75h1.3M472.11 132.89h1.3M473.11 133.22h1.3M473.87 133.71h1.3M474.91 133.96h1.3M476.86 134.08h1.3M477.28 134.65h1.3M478.21 134.1h1.3M480.97 135.12h1.3M482 135.47h1.3M483.27 135.09h1.3M484.36 135.5h1.3M485.24 135.86h1.3M486.14 135.31h1.3M487.58 135.44h1.3M488.46 135.59h1.3M489.05 135.75h1.3M490.01 136.12h1.3M490.6 136.23h1.3M491.69 136.09h1.3M492.53 136.47h1.3M493.02 136.22h1.3M494.17 136.54h1.3M494.97 136.02h1.3M496.43 135.8h1.3M497.62 135.24h1.3M498.17 135.75h1.3M499.25 134.77h1.3M500 134.66h1.3M500.79 134.79h1.3M501.35 134.13h1.3M502.23 133.91h1.3M502.97 133.57h1.3M504.01 133.93h1.3M504.7 134.14h1.3M506 134.26h1.3M506.55 134.43h1.3M508.32 133.98h1.3M509.28 134.2h1.3M509.98 134.99h1.3M511.03 134.98h1.3M511.82 134.87h1.3M513.76 140.69h1.3M514.25 140.29h1.3M515.15 140h1.3M516.31 139.57h1.3M516.87 138.7h1.3M517.94 138.66h1.3M518.52 138.07h1.3M519.6 137.53h1.3M520.47 137.27h1.3M521.13 137.14h1.3M522.14 137.06h1.3M522.77 136.97h1.3M523.77 136.44h1.3M524.9 136.64h1.3M525.78 136.7h1.3M526.46 136.07h1.3M527.61 135.86h1.3M528.23 135.76h1.3M529.45 136.38h1.3M530.3 136.55h1.3M531.23 136.03h1.3M531.86 136.44h1.3M532.61 136.39h1.3M533.51 135.94h1.3M534.61 136.11h1.3M535.66 136.85h1.3M536.26 136.29h1.3M536.93 136.63h1.3M537.97 136.59h1.3M538.91 136.82h1.3M539.78 136.52h1.3M540.27 136.81h1.3M541.31 136.79h1.3M542.25 136.84h1.3M542.91 137.13h1.3M543.95 137.48h1.3M544.62 137.25h1.3M545.74 137.78h1.3M547.18 137.65h1.3M547.93 137.22h1.3M549.12 138.16h1.3M549.53 137.82h1.3M550.62 137.82h1.3M551.18 138.3h1.3M552.38 138.18h1.3M552.87 138.2h1.3M553.72 138.83h1.3M554.54 138.33h1.3M555.74 138.36h1.3M556.24 138.37h1.3M557.11 138.9h1.3M558.29 138.73h1.3M558.8 139.34h1.3M577.55 140.13h1.3M578.62 140.3h1.3M579.13 140.47h1.3M580.24 140.59h1.3M581.03 140.42h1.3M581.9 140.01h1.3M582.65 140.17h1.3M583.57 139.99h1.3M584.25 140.21h1.3M585.22 140.27h1.3M586.06 140.76h1.3M586.9 140.17h1.3M587.76 140.76h1.3M588.46 140.71h1.3M588.97 140.93h1.3M590.1 140.49h1.3M590.86 140.74h1.3M591.96 140.76h1.3M592.53 140.25h1.3M593.41 139.98h1.3M594.32 139.86h1.3M595.43 139.98h1.3M595.92 139.81h1.3M597.14 139.86h1.3M598.9 140.43h1.3M605.87 139.37h1.3M606.7 138.73h1.3M607.58 139.29h1.3M608.55 138.78h1.3M609.1 139.07h1.3M610.23 138.48h1.3M611.1 139.09h1.3M611.71 138.48h1.3M612.69 138.87h1.3M613.27 138.25h1.3M614.16 138.54h1.3M614.93 138.3h1.3M615.92 138.31h1.3M616.58 138.5h1.3M617.84 138.01h1.3M618.57 137.6h1.3M619.47 137.84h1.3M620.23 138.05h1.3M620.86 138.03h1.3M621.62 137.15h1.3M622.63 138.08h1.3M623.76 139.05h1.3M624.46 139.6h1.3M625.4 139.66h1.3M626.35 141.03h1.3M627.15 141.5h1.3M627.98 141.87h1.3M628.9 142.81h1.3M629.59 142.73h1.3M631.39 143.26h1.3M631.99 142.8h1.3M632.97 142.69h1.3M633.85 143.32h1.3M634.49 143.01h1.3M635.59 143.13h1.3M636.43 143.06h1.3M637.05 143.16h1.3M639.07 142.74h1.3M639.47 142.39h1.3M640.67 142.9h1.3M641.18 142.69h1.3M642.96 142.05h1.3M643.75 140.84h1.3M644.55 140.33h1.3M645.62 139.29h1.3M646.23 138.75h1.3M647.04 138.78h1.3M648.01 139.11h1.3M648.79 139.14h1.3M649.77 139.64h1.3M650.65 139.66h1.3M651.49 139.04h1.3M652.4 139.05h1.3M653.04 139.02h1.3M654.16 139.89h1.3M654.86 139.38h1.3M655.72 139.43h1.3M656.7 139.53h1.3M657.26 139.99h1.3M658.3 139.29h1.3M659.27 140h1.3M659.86 139.95h1.3M660.98 139.82h1.3M661.57 139.77h1.3M662.46 140.15h1.3M663.38 140.47h1.3M663.92 139.98h1.3M665.11 140.45h1.3M665.81 140.39h1.3M666.52 140.68h1.3M667.46 140.25h1.3M668.11 140.04h1.3M669.3 140.73h1.3M669.7 140.33h1.3M670.76 140.56h1.3M671.53 140.95h1.3M672.32 140.6h1.3M673.4 140.66h1.3M673.99 140.37h1.3M674.75 140.59h1.3M675.74 140.24h1.3M676.34 140.34h1.3M677.14 140.79h1.3M678.03 140.18h1.3M678.73 140.65h1.3M679.45 140.51h1.3M680.19 140.04h1.3M681.01 140.57h1.3M681.85 140.02h1.3M682.61 140.03h1.3M683.74 140.4h1.3M684.63 140.58h1.3M685.26 140.54h1.3M685.84 140.52h1.3M686.81 139.83h1.3M687.76 140.4h1.3M688.39 139.69h1.3M689.43 140.25h1.3M690.1 140.43h1.3M690.63 139.58h1.3M691.47 139.53h1.3M692.56 140.04h1.3M693.07 139.6h1.3M694.95 140.27h1.3M695.6 140.26h1.3M696.44 139.7h1.3M697.15 139.53h1.3M698.3 140.18h1.3M698.98 139.42h1.3M699.53 139.39h1.3M700.41 139.88h1.3M701.07 139.68h1.3M702.18 139.2h1.3M702.87 139.87h1.3M703.76 139.58h1.3M704.73 139.73h1.3M705.28 139.56h1.3M706.4 140h1.3M707.21 139.75h1.3M707.65 139.41h1.3M708.59 139.9h1.3M709.23 140.01h1.3M711.89 139.95h1.3M712.79 140.02h1.3M713.53 140.24h1.3M714.63 140.24h1.3M715.28 139.7h1.3M715.98 139.67h1.3M717.07 140.17h1.3M717.83 140.21h1.3M718.75 140.11h1.3M719.24 140.18h1.3M720.04 140.07h1.3M722.81 140.28h1.3M723.62 141.31h1.3M724.06 141.54h1.3M725.07 142.2h1.3M726.87 142.4h1.3M727.61 142.8h1.3M728.17 143.1h1.3M735.31 139.31h1.3M736.49 139.24h1.3M737.4 139.39h1.3M738.23 139.61h1.3M738.8 140.02h1.3M739.7 139.78h1.3M746.53 138.65h1.3M747.66 138.94h1.3M748.51 138.61h1.3M749.18 138.2h1.3M750.05 138.55h1.3M750.7 138.86h1.3M751.48 138.18h1.3M752.26 138.18h1.3M753.31 138.77h1.3M753.93 138.5h1.3M754.97 138.55h1.3M755.72 138.54h1.3M756.36 138.1h1.3M757.39 138.26h1.3M758.4 138.27h1.3M759.26 138.27h1.3M760.71 138.35h1.3M761.72 138.74h1.3M762.47 140.29h1.3M763.17 140.91h1.3M764.19 142.36h1.3M780.59 142.5h1.3M781.2 142.74h1.3M782.29 142.3h1.3M782.83 142.33h1.3M784.39 142.2h1.3M785.15 141.43h1.3M786.14 141.2h1.3M786.79 141.5h1.3M788.03 140.92h1.3M789.32 140.85h1.3M790.41 140.81h1.3M790.99 140.45h1.3M792.04 141.21h1.3M793.73 140.65h1.3M794.42 140.77h1.3M795.43 140.84h1.3M797.3 140.42h1.3M797.81 140.39h1.3M798.66 140.52h1.3M799.8 140.35h1.3M800.8 139.81h1.3M801.49 140.5h1.3M802 140.12h1.3M802.78 140.42h1.3M803.9 140.31h1.3M804.68 140.4h1.3M805.49 140.39h1.3M806.42 140.61h1.3M807.9 141.13h1.3M808.66 140.56h1.3M809.57 141.15h1.3M810.01 140.88h1.3M811.07 140.64h1.3M811.57 141h1.3M812.77 141.68h1.3M814.33 141.71h1.3M815.03 141.86h1.3M815.86 141.92h1.3M816.62 141.31h1.3M817.4 141.64h1.3M818.11 141.59h1.3M819.01 141.81h1.3M819.67 141.55h1.3M820.62 141.78h1.3M821.38 141.95h1.3M822.08 141.85h1.3M822.93 142.09h1.3M823.94 142.12h1.3M824.66 141.67h1.3M825.67 141.93h1.3M826.21 141.75h1.3M827.03 142.15h1.3M828.04 141.97h1.3M828.8 141.75h1.3M829.48 141.9h1.3M830.21 141.92h1.3M831.24 142.29h1.3M831.78 141.86h1.3M832.87 142.27h1.3M833.62 142.27h1.3M834.44 141.97h1.3M834.94 142.06h1.3M835.73 142.62h1.3M836.78 142.39h1.3M837.8 142.54h1.3M838.25 142.13h1.3M839 142.57h1.3M840.12 142.28h1.3M840.75 142.08h1.3M841.61 142.47h1.3M842.62 142.59h1.3M844 142.1h1.3M845.08 141.97h1.3M845.49 142.05h1.3M846.67 142.56h1.3M847.19 142.56h1.3M848.27 142.17h1.3M848.74 142.47h1.3M849.64 141.88h1.3M850.7 142.16h1.3M851.26 142.29h1.3M852 141.77h1.3M852.88 142.09h1.3M853.5 142.08h1.3M855.44 142.29h1.3M856.01 141.74h1.3M857.05 142.27h1.3M857.68 141.89h1.3M858.76 142.52h1.3M859.26 142.23h1.3M860.24 141.98h1.3M860.78 141.98h1.3M861.89 142.22h1.3M862.63 141.78h1.3M863.29 141.95h1.3M864.2 141.99h1.3M865.24 141.76h1.3M866.09 141.86h1.3M866.84 141.86h1.3M867.51 141.98h1.3M868.06 142.35h1.3M869.24 141.87h1.3M870.03 142.05h1.3M870.94 141.66h1.3M871.45 141.81h1.3M872.38 142.3h1.3M873.29 142.09h1.3M873.88 142.31h1.3M874.55 141.82h1.3M875.67 141.97h1.3M876.6 141.65h1.3M877.15 141.76h1.3M877.74 141.65h1.3M878.59 141.89h1.3M879.56 142.02h1.3M880.3 142.23h1.3M881.22 142.53h1.3M881.86 142.14h1.3M882.82 142.07h1.3M883.81 141.97h1.3M884.62 142.15h1.3M885.17 142.41h1.3M886.08 142.16h1.3M886.66 142.79h1.3M887.61 142.09h1.3M888.55 142.51h1.3M889.2 142.36h1.3M890.26 142.43h1.3M890.86 143.01h1.3M891.64 142.56h1.3M892.35 142.83h1.3M893.4 142.69h1.3M895.08 142.79h1.3M895.91 142.75h1.3M897.23 143.35h1.3M898.26 143.15h1.3M899.64 142.77h1.3M900.66 143.25h1.3M901.28 143.17h1.3M902.84 142.94h1.3M903.72 142.92h1.3M904.43 142.81h1.3M905.47 142.43h1.3M906.13 142.87h1.3M907.04 142.76h1.3M907.96 142.65h1.3M908.5 142.5h1.3M909.59 142.54h1.3M910.36 142.31h1.3M911.02 142.81h1.3M912 142.46h1.3M913.23 142.63h1.3M914.48 142.36h1.3M914.95 142.43h1.3M915.71 142.37h1.3M916.68 141.57h1.3M917.66 141.89h1.3M918.44 142.06h1.3M919.1 142.17h1.3M919.74 142.16h1.3M920.61 141.32h1.3M921.42 141.28h1.3M922.13 141.67h1.3M922.99 141.1h1.3M923.92 141.06h1.3M925.07 141.43h1.3M925.89 141.37h1.3M926.51 141.09h1.3M927.27 141.08h1.3M928.38 140.72h1.3M928.92 140.05h1.3M930.12 140.27h1.3M930.8 140.43h1.3M931.4 140.19h1.3M932.4 140.1h1.3M933.24 139.43h1.3M934.32 139.27h1.3M935.02 139.56h1.3M935.59 139.27h1.3M936.48 138.6h1.3M937.2 139.04h1.3M938.08 138.39h1.3M938.96 137.7h1.3M939.89 138.08h1.3M940.77 137.48h1.3M941.25 137.36h1.3M942.32 137.62h1.3M942.98 137.49h1.3M943.67 137.83h1.3M944.64 137.44h1.3M945.61 137.15h1.3M946.39 137.27h1.3M947.25 137.02h1.3M947.8 137.5h1.3M948.72 137.25h1.3M949.58 137.09h1.3M950.33 136.88h1.3M951.32 137.09h1.3M952.15 137.35h1.3M952.85 137.4h1.3M953.43 137.53h1.3M954.33 137.59h1.3M956.22 137.17h1.3M957.54 136.84h1.3M958.46 137.19h1.3M959.15 136.92h1.3M960.31 137.05h1.3M960.78 136.86h1.3M961.8 136.85h1.3M962.57 137.14h1.3M963.33 137.4h1.3M964.2 138.34h1.3M964.94 139.69h1.3M965.27 140.72h1.3M966.19 141.98h1.3M966.74 143.08h1.3M967.5 143.96h1.3M968.27 143.6h1.3M969.29 143.13h1.3M970.02 142.64h1.3M970.91 142.95h1.3M972.57 141.94h1.3M973.86 141.7h1.3M974.69 141.5h1.3M975.51 142.18h1.3M976.42 142.52h1.3M977.34 143.11h1.3M978.33 143.99h1.3M978.82 143.82h1.3M980.46 145.17h1.3M981.61 146.1h1.3M982.12 145.35h1.3M983.52 143.12h1.3M983.88 142.17h1.3M984.84 141.96h1.3M985.43 142.2h1.3M986.46 143.09h1.3M987.17 142.87h1.3M987.99 143.93h1.3M988.85 144.17h1.3M989.78 144.47h1.3M990.64 144.5h1.3M991.47 144.85h1.3M992.07 144.25h1.3M993.31 144.49h1.3M994.87 143.98h1.3M995.63 143.15h1.3M996.38 143.48h1.3M997.44 142.76h1.3M998.23 142.97h1.3M999.07 142.5h1.3M999.79 143.29h1.3M1000.69 143.94h1.3M1001.28 144.67h1.3M1002.18 145.42h1.3M1003.01 145.79h1.3M1004.08 146.17h1.3M1004.87 146.69h1.3M1005.79 147.31h1.3M1006.5 147.49h1.3M1007.04 146.91h1.3M1007.99 145.85h1.3M1008.61 145.25h1.3M1009.5 144.75h1.3M1011.12 144.01h1.3M1012 143.32h1.3M1013.08 142.59h1.3M1013.88 142.13h1.3M1014.38 141.68h1.3M1015.38 141.97h1.3M1016.09 141.26h1.3M1017.2 140.6h1.3M1017.75 140.5h1.3M1018.97 139.43h1.3M1027.33 141.62h1.3M1028.13 141.79h1.3M1028.9 142.67h1.3M1029.53 142.45h1.3M1030.36 142.95h1.3M1031.36 143.1h1.3M1032.09 143.27h1.3M1033.25 143.72h1.3M1034.09 143.45h1.3M1034.71 143.73h1.3M1035.46 144.29h1.3M1036.22 144.25h1.3M1037.36 144.87h1.3M1037.82 144.39h1.3M1038.9 145.13h1.3M1039.56 144.88h1.3M1040.51 144.37h1.3M1041.6 143.66h1.3M1042.13 143.61h1.3M1042.87 143.56h1.3M1043.98 143.52h1.3M1044.52 143.59h1.3M1045.54 142.73h1.3M1046.53 143.1h1.3M1047.06 143.1h1.3M1048.16 142.46h1.3M1048.58 143.03h1.3M1049.8 142.34h1.3M1050.59 142.95h1.3M1051.34 143h1.3M1052.33 142.55h1.3M1053.08 143.08h1.3M1053.64 142.87h1.3M1054.64 143.01h1.3M1055.39 142.5h1.3M1056.06 142.74h1.3M1056.82 143.02h1.3M1058 142.47h1.3M1058.72 142.86h1.3M1059.26 142.95h1.3M1060.39 142.53h1.3M1060.88 142.5h1.3M1062.02 142.24h1.3M1062.84 141.02h1.3M1063.3 140.65h1.3M1064.47 139.13h1.3M1064.89 139.24h1.3M1065.71 139.4h1.3M1066.53 139.26h1.3M1067.64 140.15h1.3M1068.33 139.97h1.3M769.35 146h1.3M773.95 148h1.3M528.25 142.5h1.3M528.35 140h1.3" stroke="#f4f4f4" stroke-width="1.3" fill="none"/>
<path d="M156.48 261.38h1.25M155.39 264.53h1.25M154.16 263.1h1.25M157.15 260.66h1.25M153.54 265.66h1.25M141.61 265.72h1.25M137.56 265.24h1.25M143.98 263.09h1.25M137.13 265.54h1.25M150.59 261.06h1.25M156.82 261.89h1.25M141.63 263.11h1.25M146.7 266.11h1.25M155.99 264.49h1.25M141.39 261.18h1.25M133.91 263.77h1.25M146.87 263.32h1.25M156.93 263.11h1.25M141.02 263.13h1.25M136.5 266.42h1.25M147.07 263.92h1.25M142.91 262.08h1.25M140.12 263.61h1.25M143.42 266.67h1.25M146.36 261.8h1.25M133.53 261.5h1.25M140.89 265.43h1.25M154.58 261.99h1.25M156 262.5h1.25M157.14 261.83h1.25M158.08 260.62h1.25M159.91 260.11h1.25M161.01 259.63h1.25M162.7 257.73h1.25M167.64 264.16h1.25M169.99 263.17h1.25M184.68 264.46h1.25M184.61 265.21h1.25M188.75 263.84h1.25M187.49 263.7h1.25M204.58 263.41h1.25M222.21 264.77h1.25M219.41 264.24h1.25M221.97 265.48h1.25M217.69 264.46h1.25M215.11 263.45h1.25M226.64 265.86h1.25M214.28 265.69h1.25M202.18 264.17h1.25M205.83 266.72h1.25M199.74 264.72h1.25M223.7 266.41h1.25M219.5 264.01h1.25M205.88 266.02h1.25M207.74 266.12h1.25M209.17 266.3h1.25M215.42 266.58h1.25M226.97 264.39h1.25M227 262.55h1.25M223.94 262.65h1.25M214.64 264.44h1.25M220.93 264.08h1.25M205.21 266.42h1.25M214.78 266.28h1.25M213.08 262.68h1.25M220.97 263.59h1.25M212.59 262.5h1.25M206.63 265.83h1.25M220.77 265.68h1.25M211.79 266.16h1.25M218.1 263.53h1.25M214.36 265.49h1.25M219.78 263.49h1.25M208.08 264.21h1.25M220.38 237h1.25M217.38 254h1.25M227.38 252h1.25M231.38 258h1.25M264.38 256h1.25M399.38 256h1.25M233.32 264.92h1.25M272.61 266.18h1.25M238.1 267.02h1.25M234.61 267.13h1.25M236.53 263.53h1.25M242.98 265.83h1.25M244.12 267.86h1.25M285.55 264.56h1.25M273.87 266.83h1.25M262.17 264.4h1.25M286.25 268.26h1.25M228.19 264.82h1.25M247.28 264.09h1.25M254.05 267.94h1.25M228.86 267.6h1.25M246.53 263.07h1.25M283.16 264.5h1.25M240.53 263.64h1.25M250.14 263.66h1.25M238.52 264.38h1.25M263.23 265.45h1.25M246.29 265.89h1.25M275.37 266.98h1.25M248.67 268.05h1.25M276.43 266.09h1.25M256.86 264.81h1.25M235.69 267.87h1.25M265.09 263.54h1.25M284.76 267.88h1.25M229.46 266.85h1.25M242.14 265.95h1.25M279.1 264.93h1.25M258.27 266.66h1.25M239.3 266.45h1.25M253.74 268.4h1.25M239.01 266.91h1.25M229.93 264.51h1.25M234.67 263.82h1.25M260.13 263.96h1.25M276.65 263.53h1.25M266 267.74h1.25M235.22 264.2h1.25M274.8 265.59h1.25M285.17 264.86h1.25M252.05 268.27h1.25M248.69 268.31h1.25M282.62 264.1h1.25M261.21 268.18h1.25M234.65 267.67h1.25M275.38 267.12h1.25M264.62 263.55h1.25M286.8 263.56h1.25M275.96 266.98h1.25M247.05 266.77h1.25M252.83 267.13h1.25M230.06 268.13h1.25M251.21 267.42h1.25M256.61 267.47h1.25M246.05 266h1.25M228.94 265.69h1.25M232.28 267.73h1.25M269.37 265.34h1.25M287.78 268.21h1.25M286.69 263.45h1.25M271.03 267h1.25M264.94 263.09h1.25M284.66 265.41h1.25M264.27 267.48h1.25M244.44 263.16h1.25M284.62 264.49h1.25M229.92 263.75h1.25M289.05 267.07h1.25M240.39 263.81h1.25M283.03 266.66h1.25M263.52 263.72h1.25M253 268.21h1.25M227.58 265.31h1.25M230.91 268.49h1.25M233.85 268.25h1.25M279.53 267.02h1.25M230 266.82h1.25M257.94 265.7h1.25M236.38 265.82h1.25M277.1 263.72h1.25M281.69 265.31h1.25M243.88 264.32h1.25M255.88 266.56h1.25M282.92 263.62h1.25M282.05 262.29h1.25M289.21 261.25h1.25M274.62 261.65h1.25M279.07 260.93h1.25M280.65 260.62h1.25M288.19 262.2h1.25M287.56 262.94h1.25M285.32 263.15h1.25M278.9 263.05h1.25M277.47 262.44h1.25M283.31 263.21h1.25M309.51 264.76h1.25M388.29 267.39h1.25M406.73 263.47h1.25M314.59 263.41h1.25M376.22 267.05h1.25M367.15 267.24h1.25M351.29 266.01h1.25M399.9 266.5h1.25M368.09 266.16h1.25M348.64 267.11h1.25M358.08 263.54h1.25M340.48 265.2h1.25M341.25 266h1.25M332.78 265.03h1.25M340.6 264.92h1.25M406 263.31h1.25M291.41 266.91h1.25M336.8 265.36h1.25M360.39 264.89h1.25M318.08 262.89h1.25M394.23 268.15h1.25M323.69 265.45h1.25M328.24 263.13h1.25M396.49 267.57h1.25M318.3 264.25h1.25M373.16 267.34h1.25M345.73 265.01h1.25M317.4 267.35h1.25M393 267.69h1.25M303.1 266.18h1.25M407.6 266.88h1.25M344.48 263.63h1.25M296.64 266.97h1.25M297.61 267.41h1.25M369.25 265.5h1.25M396.36 268.12h1.25M363.37 263.37h1.25M360 265.2h1.25M319.32 268.09h1.25M377.01 263.49h1.25M316.85 264.75h1.25M358.13 264.65h1.25M342.13 267.44h1.25M311.19 266.9h1.25M329.05 268.18h1.25M403.59 264.67h1.25M362.1 263.43h1.25M338.63 266.35h1.25M365.95 264.75h1.25M293.44 263.51h1.25M356.63 263.78h1.25M326.11 266.32h1.25M397.46 265.74h1.25M319.93 266.14h1.25M322.45 267.26h1.25M308.1 264.29h1.25M342.01 267.98h1.25M309.22 263.9h1.25M305.18 264.02h1.25M329.24 265.05h1.25M380.53 265.1h1.25M346.39 265.06h1.25M382.28 267.95h1.25M340.43 268.05h1.25M319.45 268.37h1.25M352.42 266.69h1.25M335.13 264.35h1.25M305.59 267.85h1.25M332.52 266.78h1.25M344.66 265.8h1.25M314.2 263.81h1.25M329.73 266.68h1.25M354.58 262.81h1.25M374.67 265.27h1.25M297.65 264.28h1.25M314.77 267.49h1.25M355.38 264.66h1.25M319.2 264.46h1.25M322.99 264.77h1.25M384.26 267.29h1.25M373.15 267.84h1.25M367.85 263.45h1.25M294.72 263.74h1.25M320.34 265.81h1.25M388.02 266.14h1.25M340.94 264.18h1.25M407.18 267.09h1.25M330.32 263.06h1.25M407.2 264.26h1.25M391.1 263.47h1.25M367.74 264.83h1.25M396.05 264.49h1.25M301.47 263.93h1.25M386.06 268.38h1.25M366.53 266.69h1.25M323.23 264.35h1.25M299.78 268.41h1.25M294.58 266.29h1.25M331.37 263.86h1.25M341.7 268.11h1.25M319.1 263.74h1.25M364.91 266.55h1.25M350.65 263.82h1.25M394.28 263.43h1.25M310.27 264.18h1.25M351.03 265.52h1.25M355.81 266.94h1.25M396.66 265.47h1.25M294.41 267.54h1.25M291.59 264.61h1.25M306.55 266.23h1.25M383.2 263.53h1.25M324.7 267.65h1.25M372.07 263.42h1.25M371.75 267.33h1.25M338.4 263.69h1.25M368.46 264.62h1.25M305.43 263.74h1.25M337.67 263.52h1.25M335.59 265.94h1.25M355.63 265.1h1.25M385.39 263.3h1.25M328.95 268.12h1.25M393.09 268.05h1.25M381.21 265.85h1.25M383.88 266.06h1.25M303.48 264.26h1.25M301.07 267.79h1.25M328.02 265.12h1.25M353.96 263.38h1.25M374.07 267.33h1.25M384.91 267.82h1.25M327.45 263.63h1.25M380.76 266.75h1.25M333.96 264.76h1.25M307.81 267.54h1.25M344.65 267.43h1.25M330.14 264.63h1.25M350.96 267.05h1.25M395.3 264.81h1.25M372.59 265.1h1.25M392.75 267.13h1.25M356.01 264.87h1.25M322.23 267.84h1.25M385.48 264.54h1.25M299.54 263.91h1.25M405.08 263.02h1.25M386.57 265.81h1.25M355.85 265.88h1.25M338.61 265.98h1.25M300.17 268.04h1.25M301.72 263.59h1.25M370.08 266.45h1.25M386.18 266.75h1.25M401.06 263.09h1.25M290.65 264.15h1.25M366.64 254.53h1.25M357.97 260.7h1.25M344.84 258.27h1.25M370.9 260.47h1.25M353.3 257.79h1.25M349.1 262.61h1.25M366.77 259.8h1.25M350.02 260.32h1.25M356.41 260.98h1.25M352.11 261.82h1.25M363.34 257.51h1.25M359.07 261.05h1.25M357.89 262.6h1.25M339.63 261.97h1.25M424.23 269.69h1.25M426.67 269.21h1.25M417.45 270h1.25M426.2 269.52h1.25M429.27 269.91h1.25M412.19 269.17h1.25M412.75 269.8h1.25M417.17 269.37h1.25M419.43 269.11h1.25M427.74 270.17h1.25M421.43 269.62h1.25M416.93 269.84h1.25M417.62 270.37h1.25M428.59 270.02h1.25M426.24 269.11h1.25M413.6 269.48h1.25M413.65 269.59h1.25M429.12 270.17h1.25M428.63 269.31h1.25M415.37 269.03h1.25M416.3 269.08h1.25M420.88 269.42h1.25M466.33 269.01h1.25M463.27 268.31h1.25M468.77 269.36h1.25M467.95 268.77h1.25M457.93 268.27h1.25M440.98 268.76h1.25M464.02 268h1.25M473.78 269.87h1.25M473.52 269.7h1.25M458.91 267.97h1.25M450.22 269.49h1.25M478.76 267.8h1.25M439.63 268.45h1.25M453.35 269.11h1.25M443.87 269.78h1.25M452.9 269.95h1.25M452.55 268.32h1.25M446.41 270.11h1.25M462.95 269.73h1.25M441.9 268.97h1.25M468.7 270.16h1.25M476.84 267.78h1.25M454.3 270.2h1.25M460.77 270.08h1.25M449.51 267.57h1.25M477.22 268.21h1.25M461.8 268.47h1.25M462.48 270.02h1.25M477.25 269.87h1.25M449.64 269.72h1.25M440.11 268.62h1.25M477.14 268.19h1.25M454.06 269.07h1.25M448.84 269.41h1.25M465.48 267.76h1.25M476.18 267.69h1.25M467.24 268.44h1.25M445.12 267.71h1.25M479.28 269.66h1.25M457.73 269.65h1.25M478.17 270h1.25M460.68 268.24h1.25M460.12 270.15h1.25M468.58 269.31h1.25M473.09 268.6h1.25M461.73 269.79h1.25M447.34 269.82h1.25M440.36 268.95h1.25M462.37 267.9h1.25M476.25 268.69h1.25M446.78 268.61h1.25M463.03 268.66h1.25M479.43 264.86h1.25M493.64 265.01h1.25M484.48 267.65h1.25M496.61 267.94h1.25M482.86 264.52h1.25M494.46 266.84h1.25M486.67 264.57h1.25M488 265.42h1.25M491.13 268.32h1.25M483.56 264.79h1.25M493.27 264.92h1.25M483.83 266.21h1.25M499.1 265.76h1.25M485.69 266.35h1.25M482.62 266.07h1.25M493.38 265.76h1.25M495.3 265.22h1.25M481.41 266.95h1.25M488.43 268.08h1.25M481.48 267.41h1.25M492.77 265.94h1.25M481.94 266.89h1.25M494.54 266.34h1.25M488.83 267.17h1.25M491.56 266.15h1.25M483.1 266.31h1.25M499.38 258h1.25M514.38 254h1.25M515.38 258h1.25M516.38 262h1.25M513.38 264h1.25M507.38 262h1.25M532.36 269.98h1.25M559.06 268.93h1.25M519.09 267.89h1.25M537.2 269.49h1.25M514.24 269.34h1.25M559.33 268.41h1.25M555.7 268.55h1.25M538.51 269.89h1.25M511.58 268.27h1.25M558.42 267.4h1.25M517.75 268.68h1.25M544.07 269.15h1.25M555.16 269.28h1.25M499.47 267.42h1.25M501.57 268.54h1.25M501 268.83h1.25M537.33 267.83h1.25M550.74 268.48h1.25M556.97 268.31h1.25M536.57 268.88h1.25M515.16 269.62h1.25M499.62 267.97h1.25M518.62 269.93h1.25M529.41 267.31h1.25M517.32 269.09h1.25M547.9 267.54h1.25M546.13 268.41h1.25M530.82 268.51h1.25M525.68 270.27h1.25M554.52 270.05h1.25M543.52 269.37h1.25M507.87 267.31h1.25M549.23 269.29h1.25M537.21 268.17h1.25M515.4 270.05h1.25M531.3 267.26h1.25M519.8 268.28h1.25M503.43 270.23h1.25M553.55 269.73h1.25M499.63 268.49h1.25M506.07 269.45h1.25M547.94 269.65h1.25M546.88 267.57h1.25M500.18 267.49h1.25M549.92 269.77h1.25M530.34 267.93h1.25M550.79 267.57h1.25M518.87 267.21h1.25M558.35 268.49h1.25M545.64 269.68h1.25M534.24 270.26h1.25M545.85 270.07h1.25M557.18 267.45h1.25M544.41 267.9h1.25M518.85 268.26h1.25M558.69 267.39h1.25M525.47 267.6h1.25M559.22 268.74h1.25M541.49 268.81h1.25M545.41 268.24h1.25M524.18 269.51h1.25M541.53 269.95h1.25M517.93 269.83h1.25M543.61 268.98h1.25M523.86 268.96h1.25M503.98 267.5h1.25M518.05 267.58h1.25M502.3 269.42h1.25M543.26 269.11h1.25M511.73 269.44h1.25M548.93 269.12h1.25M513.02 268.95h1.25M523.06 268.03h1.25M508.29 269.88h1.25M537.31 270.09h1.25M509.7 268.02h1.25M529.93 267.38h1.25M517.51 268.87h1.25M587.97 270.46h1.25M590.08 270.02h1.25M590.25 270.26h1.25M585.44 269h1.25M598.95 270.27h1.25M580.16 269.18h1.25M582.27 270.05h1.25M580.26 269.03h1.25M588.25 269.01h1.25M583.07 269.61h1.25M581.89 269h1.25M583.09 269.39h1.25M584.51 269.66h1.25M585.29 269.52h1.25M577.8 270.34h1.25M593.62 269.79h1.25M577.44 269.37h1.25M597.19 269.73h1.25M581.89 270.31h1.25M596.99 269.2h1.25M588.4 269.9h1.25M579.96 269.51h1.25M590.98 270.08h1.25M591.2 269.99h1.25M585.69 269.11h1.25M577.73 270.34h1.25M711.61 270.45h1.25M613.8 270.23h1.25M625.68 269.55h1.25M629.21 270.38h1.25M705.94 270.33h1.25M651.68 270.5h1.25M636.62 269.92h1.25M687.87 269.37h1.25M651.71 269.16h1.25M703.16 269.29h1.25M621.24 269.44h1.25M683.77 270.02h1.25M669.44 270.37h1.25M697.68 269.34h1.25M670.68 269.27h1.25M634.36 269.24h1.25M613.92 269.56h1.25M714.3 270.05h1.25M615.25 269.35h1.25M677.73 269.85h1.25M607.68 269.15h1.25M674.56 269.96h1.25M614.34 270.24h1.25M634.18 269.94h1.25M670.05 269.54h1.25M721.72 269.63h1.25M656.85 269.86h1.25M708.49 270.58h1.25M699.8 269.86h1.25M693.26 270.02h1.25M723.33 270.55h1.25M698.61 269.35h1.25M674.87 269.7h1.25M633.05 270.25h1.25M631.8 270.14h1.25M665.05 269.68h1.25M692 270.16h1.25M727.09 270.6h1.25M703.57 269.42h1.25M687.35 269.79h1.25M720.99 269.72h1.25M648.7 269.04h1.25M662.67 269.85h1.25M642.6 269.17h1.25M664.39 269.11h1.25M625.66 269.71h1.25M647.54 269.8h1.25M670.11 269.62h1.25M620.93 269.03h1.25M673.74 270.55h1.25M639.26 269.56h1.25M643.98 270.19h1.25M665.53 270.27h1.25M605.02 269.21h1.25M629.94 269.59h1.25M653.9 269.62h1.25M724.12 269.7h1.25M675.75 270.54h1.25M683.97 269.95h1.25M707.08 269.54h1.25M608.84 270.53h1.25M670.64 269.93h1.25M612.64 270.19h1.25M650.72 270.03h1.25M639.55 270.47h1.25M650.11 269.44h1.25M715.22 269.36h1.25M637.97 269.78h1.25M726 269.18h1.25M630.46 270.27h1.25M613.69 269.66h1.25M701.47 270.14h1.25M702.72 269.19h1.25M714.72 269.57h1.25M705.33 269.75h1.25M714.9 269.76h1.25M636.34 269.24h1.25M665.94 269.08h1.25M624.71 270.4h1.25M675.53 270.38h1.25M623.08 269.77h1.25M662.48 269.17h1.25M637.04 270.47h1.25M694.1 269.81h1.25M679.95 270.38h1.25M722.65 269.95h1.25M610.62 270.39h1.25M624.8 269.38h1.25M621.37 269.82h1.25M676.61 269.74h1.25M662.66 269.23h1.25M693.41 269.86h1.25M642.69 270.33h1.25M720.81 270.48h1.25M726.5 269.11h1.25M652.56 269.72h1.25M636.2 270.19h1.25M716.59 269.22h1.25M667.14 270.55h1.25M714.58 269.72h1.25M617.36 269.73h1.25M668.56 270.26h1.25M627.44 269.45h1.25M726.48 269.02h1.25M680.14 269.15h1.25M697.44 269.68h1.25M719.13 269.36h1.25M713.18 269.36h1.25M610.29 269.14h1.25M613.81 269.62h1.25M724.9 269.57h1.25M693.25 269.05h1.25M668.34 269.86h1.25M616.53 269.93h1.25M659.69 269.52h1.25M707.35 270.11h1.25M619.3 269.17h1.25M610.87 269.42h1.25M683.31 270.55h1.25M724.5 270.38h1.25M619.8 270.27h1.25M698.88 269.76h1.25M727.84 269.96h1.25M619.05 269.35h1.25M620.45 269.98h1.25M681.77 270.37h1.25M605.65 269.02h1.25M724.99 269.42h1.25M637.14 270.39h1.25M618.18 270.27h1.25M715.57 269.9h1.25M679.83 269.01h1.25M679.6 269.98h1.25M699.98 269.83h1.25M618.5 269.36h1.25M685.36 269.13h1.25M617.62 269.4h1.25M703.12 269.87h1.25M648.63 270.54h1.25M676.42 269.38h1.25M674.49 270.37h1.25M650.07 269.7h1.25M675.97 270.58h1.25M683.56 269.29h1.25M676.55 269.51h1.25M663.07 270.14h1.25M606.88 269.81h1.25M643.32 269.96h1.25M706.14 269.75h1.25M738.78 269.46h1.25M736.17 269.82h1.25M738.1 269.36h1.25M739.73 269.8h1.25M736.86 269.41h1.25M740.23 270.44h1.25M740.94 269.4h1.25M747.59 270.01h1.25M746.8 270.37h1.25M757.92 269.54h1.25M753.88 270.09h1.25M749.1 269.58h1.25M759.75 270.09h1.25M809.06 269.17h1.25M791.01 269.41h1.25M781.92 270.02h1.25M808.44 270.48h1.25M807.54 270.47h1.25M803.35 269.83h1.25M794.16 269.74h1.25M826.28 269.78h1.25M780.48 269.57h1.25M790.07 270h1.25M805.33 269.76h1.25M825.8 270.22h1.25M784.65 269.05h1.25M814.71 269.95h1.25M812.34 269.8h1.25M831.31 269.72h1.25M874.49 269.96h1.25M831.76 269.2h1.25M878.23 269.87h1.25M892.92 270.13h1.25M937.01 270.38h1.25M920.8 270.29h1.25M888.45 269.74h1.25M930.37 269.55h1.25M891.72 270.39h1.25M924.24 269.01h1.25M887.06 269.89h1.25M938.7 269.99h1.25M934.19 269.17h1.25M916.78 269.29h1.25M902.63 269.24h1.25M910.28 269.07h1.25M921.46 270.03h1.25M935.85 270.23h1.25M887.76 270.39h1.25M914.86 270.5h1.25M911.91 269.13h1.25M924.21 269.28h1.25M940.45 269.86h1.25M935.71 269.79h1.25M902.31 270.06h1.25M924.54 269.74h1.25M899.36 269.67h1.25M924.83 269.37h1.25M892.53 269.77h1.25M921.54 269.11h1.25M899.12 270.55h1.25M898.87 270.24h1.25M901.1 269.14h1.25M911.58 270.39h1.25M928.45 269.08h1.25M924.17 269.99h1.25M911.35 270.06h1.25M913.64 269.29h1.25M923.71 269.21h1.25M901.35 270.36h1.25M916.33 269.82h1.25M924.55 269.79h1.25M905.65 269.88h1.25M884.67 269.56h1.25M885.66 270.59h1.25M936.03 270.05h1.25M892.55 270.37h1.25M899.79 270.29h1.25M921.14 269.97h1.25M926.38 269.43h1.25M931.76 269.87h1.25M927.28 270.34h1.25M898.14 269.66h1.25M904.35 269.12h1.25M934.16 270.1h1.25M911.79 269.87h1.25M934.4 269.11h1.25M904.13 270.1h1.25M914.39 269.8h1.25M898.38 269.36h1.25M922.25 269.55h1.25M966.69 270.44h1.25M967.57 269.44h1.25M955.27 269.17h1.25M951.08 269.12h1.25M954.92 270.53h1.25M961.96 269.58h1.25M948.83 270.49h1.25M942.8 270.35h1.25M964.49 269.11h1.25M967.05 270.03h1.25M951.88 269.68h1.25M957.8 269.84h1.25M964.81 270.43h1.25M950.19 269.01h1.25M962.4 270.04h1.25M959.06 269.12h1.25M943.42 270.44h1.25M951.2 269.76h1.25M967.65 269.31h1.25M958.52 269.1h1.25M956.53 270.18h1.25M945.63 270.22h1.25M967.53 270.32h1.25M962.72 270.52h1.25M960.73 269.88h1.25M963.63 270.29h1.25M958.36 270.07h1.25M946.19 269.54h1.25M950.16 270.37h1.25M962.47 269.47h1.25M968.21 269.09h1.25M943.04 269.52h1.25M943.46 270.52h1.25M951.06 269.62h1.25M964.46 269.85h1.25M958.4 269.7h1.25M953.8 270.53h1.25M948.86 269.84h1.25M954.3 269.23h1.25M945.33 269.81h1.25M962.94 269.69h1.25M942.97 270.5h1.25M945.09 270.41h1.25M970.68 270.04h1.25M975.82 269.42h1.25M989.87 270.21h1.25M990.57 269.67h1.25M988.9 269.83h1.25M982.69 270.52h1.25M978.08 269.21h1.25M996.35 269.56h1.25M1005.16 269.06h1.25M1002.88 269.58h1.25M1015.66 269.48h1.25M990.46 269.51h1.25M995.58 269.45h1.25M1002.53 269.66h1.25M1004.49 269.47h1.25M991.66 269.89h1.25M1005.02 270.04h1.25M990.26 269.14h1.25M974.1 269.23h1.25M977.75 269.29h1.25M1002.14 269.55h1.25M1014.69 269.37h1.25M980.91 269.29h1.25M975.74 270.09h1.25M997.87 269.4h1.25M1009.7 270.08h1.25M990.24 269.97h1.25M1001.86 269.71h1.25M973.05 269.58h1.25M1016.63 269.6h1.25M1000.96 269.14h1.25M1007.85 270.38h1.25M987.4 269.6h1.25M994.53 269.4h1.25M979.08 269.21h1.25M1003.41 269.81h1.25M1017.14 270.54h1.25M1012.96 270.51h1.25M1011.12 269.04h1.25M974.99 270.56h1.25M1012.94 269.99h1.25M999.98 269.7h1.25M990.04 269.23h1.25M996.33 269.44h1.25M974.59 270.39h1.25M997.68 270.4h1.25M1038.19 269.92h1.25M1037.44 270.33h1.25M1034.49 270.04h1.25M1049.57 269.52h1.25M1028.86 269.78h1.25M1048.18 270.31h1.25M1034.23 269.3h1.25M1038.69 270.28h1.25M1035.5 270.01h1.25M1026.77 269.13h1.25M1056.26 269.8h1.25M1030.29 269.76h1.25M1066.38 269.63h1.25M1049.66 269.67h1.25M1047.41 269.07h1.25M1063.87 269.93h1.25M1040.51 269.46h1.25M1033.53 270.49h1.25M1062.04 269.61h1.25M1051.67 269.88h1.25M1034.1 269.05h1.25M1057.44 269.26h1.25M1050.01 269.03h1.25M1026.33 269.26h1.25M1053.87 269.98h1.25M1068.59 270.06h1.25M1048.14 269.02h1.25M1067.15 269.78h1.25M1062.78 269.07h1.25M1061.79 269.76h1.25M1034.83 269.65h1.25M1028.65 269.93h1.25M1034.93 270.12h1.25M1032.95 270.1h1.25M1052.3 270.14h1.25M1066.82 269.47h1.25M1055.15 269.64h1.25M1064.35 270.32h1.25M1058.67 269.96h1.25M788.67 204h1.25M790.38 265h1.25M827.42 266.45h1.25M830.25 266.7h1.25M827.73 265.93h1.25M829.09 266.04h1.25M829.58 263.73h1.25M827.96 265.77h1.25M828.99 264.24h1.25M829.87 261.19h1.25M826.43 263.79h1.25M826.76 266.05h1.25M826.73 266.29h1.25M827.28 261.8h1.25M915.38 265h1.25M913.38 267.5h1.25M917.38 267.8h1.25" stroke="#ee8a00" stroke-width="1.25" fill="none"/>
<path d="M170.38 323.4h1.25M172.18 323h1.25M176.38 326h1.25M192.38 319.2h1.25M220.57 293.5h1.25M238.38 311.9h1.25M256.57 308.8h1.25M367.18 306h1.25M367.88 316h1.25M414.98 342.3h1.25M421.27 320.3h1.25M510.38 324.5h1.25M510.77 328.7h1.25M558.58 304h1.25M559.58 320.3h1.25M596.27 306h1.25M616.17 309.8h1.25M664.38 322h1.25M664.98 321h1.25M688.08 297.2h1.25M754.08 329.3h1.25M761.38 326.6h1.25M792.38 328.3h1.25M939.08 329.7h1.25M156.18 336.28h1.25M151.89 337.61h1.25M149.48 336.01h1.25M146.88 335.36h1.25M154.51 338.21h1.25M150.44 334.24h1.25M138.19 337.34h1.25M159.23 335.78h1.25M157.63 337.08h1.25M140.75 335.52h1.25M155.44 335.2h1.25M159.26 335.4h1.25M141.76 336.61h1.25M145.51 336.5h1.25M136 336.8h1.25M150.52 336.53h1.25M137.41 333.95h1.25M158.83 334.59h1.25M143.06 334.99h1.25M144.01 337.12h1.25M142.02 335.07h1.25M149.82 335.16h1.25M166.28 331.63h1.25M166.56 331.9h1.25M164.74 333.68h1.25M167.38 329.11h1.25M165.16 333.73h1.25M187.4 310.39h1.25M185.62 310.89h1.25M186.86 310.39h1.25M184.94 311.29h1.25M185.85 311.61h1.25M186.19 310.57h1.25M220.68 315.86h1.25M216.84 321.1h1.25M201.81 312.32h1.25M203.36 315.99h1.25M216.37 326.13h1.25M218.46 323.27h1.25M219.48 323.62h1.25M205.06 313.89h1.25M205.58 317.83h1.25M216.95 325.76h1.25M203.42 321.11h1.25M214.25 320.5h1.25M209.76 322.62h1.25M204.46 318.57h1.25M201.99 318.98h1.25M215.9 319.79h1.25M211.16 318.47h1.25M211.83 318.93h1.25M206.84 313.47h1.25M219.48 325.06h1.25M216.31 320.08h1.25M201.85 322.61h1.25M203.92 318.03h1.25M215.02 323.25h1.25M214.06 320.03h1.25M219.28 322.83h1.25M218.79 322.08h1.25M218.33 322.87h1.25M245.89 323.69h1.25M249.31 327.49h1.25M242.57 323.94h1.25M237.5 321.34h1.25M232.1 321.99h1.25M250.57 323.81h1.25M240.72 322.86h1.25M225.99 323.99h1.25M231.8 318.34h1.25M233.25 320.37h1.25M249.18 325.63h1.25M233.31 323.27h1.25M238.97 324.52h1.25M245.72 315.55h1.25M233.53 320.84h1.25M233.09 325.43h1.25M231.39 321.49h1.25M241.21 320.71h1.25M248.84 323.06h1.25M235.73 317.74h1.25M247.45 319.34h1.25M232.83 317.98h1.25M227.09 318.59h1.25M251.82 320.51h1.25M249.06 320.37h1.25M254.84 321.33h1.25M254.37 322.7h1.25M234.86 319.59h1.25M244.88 325.01h1.25M231.11 325.93h1.25M240.61 321.02h1.25M243.3 324.96h1.25M245.49 318.32h1.25M233.65 321.33h1.25M239.13 322.12h1.25M251.86 318.42h1.25M231.18 321.05h1.25M252.72 317.96h1.25M252.27 326.78h1.25M254.86 317.21h1.25M233.09 318.17h1.25M272.6 323.93h1.25M266.57 321.54h1.25M262.7 320.77h1.25M305.8 323.13h1.25M306.08 325.08h1.25M275.41 323.06h1.25M260.01 324h1.25M312.82 322.72h1.25M262.92 322.69h1.25M297.67 323.07h1.25M286.15 323.68h1.25M295.52 324.46h1.25M260.88 325.66h1.25M288.49 323.68h1.25M303.11 322.76h1.25M288.56 320.74h1.25M288.84 325.41h1.25M269.89 323.71h1.25M292.4 323.3h1.25M299.02 324.75h1.25M304.85 322.72h1.25M272.93 322.27h1.25M287.04 324.39h1.25M301.81 323.64h1.25M313.39 322.68h1.25M315.47 324.26h1.25M306.04 321.58h1.25M306.2 322.6h1.25M285.37 325.52h1.25M312.9 323.2h1.25M279.63 320.71h1.25M277.86 322.22h1.25M265.19 323.62h1.25M272.19 323.45h1.25M258.63 325.41h1.25M310.57 321.9h1.25M299.52 323.78h1.25M296.89 322.04h1.25M274.4 324.77h1.25M265.98 322.28h1.25M316.23 325.3h1.25M302.73 321.43h1.25M259.56 322.15h1.25M268.63 323.72h1.25M305.18 324.27h1.25M266.87 321.77h1.25M306.15 323.02h1.25M290.25 323.86h1.25M259.74 322.8h1.25M288 323.27h1.25M274.16 323.61h1.25M299.93 322.99h1.25M259.53 322.46h1.25M303.66 324.77h1.25M269.17 322.32h1.25M299.41 322.88h1.25M311.73 322.99h1.25M296.76 325.36h1.25M288.53 324.28h1.25M259.17 323.27h1.25M277.55 322.09h1.25M276.14 325.55h1.25M284.93 323.3h1.25M288.53 325.19h1.25M280.72 323.84h1.25M294.22 323.4h1.25M264.05 323.32h1.25M311.29 324.82h1.25M291.81 323.02h1.25M317.75 324.01h1.25M268.71 322.71h1.25M301.33 323.13h1.25M286.78 324.79h1.25M312.48 322.94h1.25M257.98 323.94h1.25M261.68 323.7h1.25M309.91 322h1.25M305.53 323.43h1.25M314.26 321.87h1.25M266.02 322.17h1.25M300.17 325.08h1.25M315.13 323.69h1.25M257.18 321.5h1.25M265.21 323.14h1.25M275.4 323.57h1.25M327 322.72h1.25M346.99 322.55h1.25M345.26 324.12h1.25M335 322.4h1.25M376.67 324.47h1.25M354.19 325.35h1.25M363.13 323.99h1.25M348.69 323.73h1.25M355.5 322.58h1.25M378.07 324.56h1.25M365.62 326.4h1.25M345.73 323.67h1.25M358.33 321.63h1.25M334.72 323.97h1.25M326.49 323.32h1.25M376.13 326.74h1.25M370.26 325.98h1.25M371.08 324.06h1.25M359.99 324.12h1.25M329.82 323.97h1.25M362.08 323.57h1.25M377.11 325.1h1.25M376.68 325.23h1.25M347.71 322.64h1.25M329.36 321.65h1.25M373.41 325.56h1.25M355.44 326.95h1.25M363.36 323.42h1.25M355.5 324.72h1.25M327.66 323.38h1.25M347.81 325.81h1.25M378.43 325.96h1.25M376.41 325.14h1.25M335.92 324.63h1.25M366.07 326.4h1.25M362.49 323.35h1.25M349.89 321.52h1.25M377.74 323.22h1.25M348.61 322.92h1.25M337.57 323.25h1.25M374.79 323.87h1.25M356.46 323.96h1.25M325.97 322.99h1.25M343.29 325.04h1.25M370.53 326.73h1.25M351.64 325.3h1.25M331.65 320.98h1.25M351.61 325.53h1.25M375.08 324.46h1.25M330.98 324.48h1.25M334.34 323.38h1.25M335.66 325.3h1.25M332.78 323.8h1.25M343.33 323.73h1.25M338.08 324.29h1.25M330.83 325.46h1.25M377.4 324.37h1.25M351.17 321.88h1.25M338.36 324.82h1.25M332.34 321.39h1.25M374.83 325.56h1.25M376.71 325.47h1.25M338.96 323.17h1.25M357.15 325.29h1.25M353.66 324.14h1.25M376.06 323.25h1.25M332.83 324.22h1.25M370.17 326.8h1.25M356.33 326.21h1.25M368.26 322.71h1.25M374.58 324.74h1.25M375.22 326.88h1.25M357.8 325.47h1.25M337.25 323.13h1.25M349.48 323h1.25M382.42 326.9h1.25M386.49 327.84h1.25M384.4 326.34h1.25M383.49 328.06h1.25M382.8 326.44h1.25M379.47 327.62h1.25M383.17 328.17h1.25M383.07 327.93h1.25M380.99 327.36h1.25M382.53 326.39h1.25M385.44 325.18h1.25M386.63 327.51h1.25M383.93 326.33h1.25M380.86 325.66h1.25M385.39 326.06h1.25M390.92 307.69h1.25M402.83 306.19h1.25M397.74 309.78h1.25M399.53 311.12h1.25M403.23 307.36h1.25M395.19 311.62h1.25M403.92 308.5h1.25M397.95 306.82h1.25M398.15 309.27h1.25M395.49 309.58h1.25M396.03 310.92h1.25M395.86 307.76h1.25M402.2 305.26h1.25M396.17 306.64h1.25M404.08 308.98h1.25M396.44 304.47h1.25M418.91 314.32h1.25M419.18 311.7h1.25M413.09 313.94h1.25M411.79 312.9h1.25M418.78 314.93h1.25M422.1 312.68h1.25M420.43 315.09h1.25M425.45 314.91h1.25M412.79 312.45h1.25M423.44 313.55h1.25M417.58 312.21h1.25M421.07 312.57h1.25M413.52 314.97h1.25M413.93 313.78h1.25M425.64 314.5h1.25M412.7 312.27h1.25M413.76 316.52h1.25M409.95 310.12h1.25M446.34 312.47h1.25M447.41 315.41h1.25M459.63 313.77h1.25M442.81 314.88h1.25M457.79 311.8h1.25M458.12 314.8h1.25M441.51 312.67h1.25M454.84 313.9h1.25M440.23 315.5h1.25M452.52 312.81h1.25M456.33 314.47h1.25M444.57 314.7h1.25M448.98 313.69h1.25M459.73 314.44h1.25M448.14 314.18h1.25M459.5 314.8h1.25M456.64 315.87h1.25M450.75 312.03h1.25M450.66 311.92h1.25M459.94 314.22h1.25M440.49 313.97h1.25M453.57 314.02h1.25M441.99 315.14h1.25M449.68 314.55h1.25M450.01 313.5h1.25M454.82 313.78h1.25M469.94 316.17h1.25M467.03 317.36h1.25M469.95 315.7h1.25M467.44 315.56h1.25M468.26 316.09h1.25M470.78 316.95h1.25M469.55 316.81h1.25M467.35 316.06h1.25M470.68 316.01h1.25M482.01 313.33h1.25M481.85 314.56h1.25M484.14 315.55h1.25M476.64 313.94h1.25M483.65 314.27h1.25M478.7 313.7h1.25M486.74 313.9h1.25M490.32 312.03h1.25M488.63 313.98h1.25M487.54 314.21h1.25M490.16 313.86h1.25M487.57 313.12h1.25M479.8 313.06h1.25M487.83 313.71h1.25M486.88 314.04h1.25M478.68 315.01h1.25M480.05 312.98h1.25M477.86 314.69h1.25M481.14 313.22h1.25M473.74 313.45h1.25M476.76 313.31h1.25M478.06 313.82h1.25M486.07 313.88h1.25M491.1 317.6h1.25M503.72 317.16h1.25M511.24 316.44h1.25M504.55 317.38h1.25M510.97 315.4h1.25M504.71 316.46h1.25M509.47 316.43h1.25M497.52 314.51h1.25M492.83 315.93h1.25M511.99 314.99h1.25M498.95 316.48h1.25M505.78 314.24h1.25M503.71 316.1h1.25M491.48 315.76h1.25M511.67 316.08h1.25M499.79 314.1h1.25M498.47 318.7h1.25M507.7 317.12h1.25M502.13 316.93h1.25M499.52 316.89h1.25M499.71 318.3h1.25M498.3 316.04h1.25M495.21 316.9h1.25M494.7 315.83h1.25M503.67 316.19h1.25M501.56 316.04h1.25M505.96 314.97h1.25M497.35 317.12h1.25M510.48 317.02h1.25M500.89 315.55h1.25M512.25 315.06h1.25M494.87 316.91h1.25M521.61 314.38h1.25M522.06 316.25h1.25M525.95 313.83h1.25M523.48 314.97h1.25M525.55 314.65h1.25M514.68 315.79h1.25M515.36 314.48h1.25M521.32 315.49h1.25M529.98 315.47h1.25M522.44 315.09h1.25M527.2 316.26h1.25M517.65 315.12h1.25M523.24 314.59h1.25M520.95 315.03h1.25M522.78 316.15h1.25M523.9 314.93h1.25M519.01 314.52h1.25M517.08 313h1.25M516.32 314.99h1.25M521.23 313.9h1.25M517.66 312.96h1.25M515.93 313.96h1.25M521.21 314.76h1.25M528.18 313.55h1.25M558.55 311.83h1.25M552.44 314.65h1.25M534.59 315.76h1.25M556.56 314.26h1.25M545.27 314.01h1.25M537.75 309.64h1.25M534.39 314.05h1.25M540.6 315.93h1.25M542.99 310.67h1.25M538.8 314.62h1.25M558.78 310h1.25M556.62 312.4h1.25M547.72 313.52h1.25M542.85 315.38h1.25M557.93 314.35h1.25M550.53 314.69h1.25M530.96 314.98h1.25M535.95 309.32h1.25M546.22 312.8h1.25M542.44 316.21h1.25M542.82 311.28h1.25M548.06 316.31h1.25M539.79 311.63h1.25M550.42 314.98h1.25M554.07 314.97h1.25M533.94 315.69h1.25M533.04 312.16h1.25M539.24 313.95h1.25M544.51 314.95h1.25M539.18 315.71h1.25M546.95 316.65h1.25M552.23 311.19h1.25M536.74 311.98h1.25M549.12 311.83h1.25M554.38 315.59h1.25M543.36 315.3h1.25M557.4 311.62h1.25M556.69 309.32h1.25M549.58 312.78h1.25M550.39 313.32h1.25M559.52 315.81h1.25M593.4 316.71h1.25M596.14 314.95h1.25M584.82 315.94h1.25M580.71 314.33h1.25M586.86 315.11h1.25M581.64 315.85h1.25M590 315.16h1.25M589.92 316.26h1.25M581.08 316.76h1.25M589.74 314.26h1.25M594.96 314.11h1.25M587.64 313.77h1.25M579.5 316.71h1.25M583.21 314.01h1.25M579 317.7h1.25M581.32 313.64h1.25M583.73 316.63h1.25M587.49 318.58h1.25M588.72 312.9h1.25M590.83 315.8h1.25M578.46 315.87h1.25M585.51 316.21h1.25M579.74 314.69h1.25M592.13 317.32h1.25M607.87 318.01h1.25M607.76 316.36h1.25M622.29 315.37h1.25M612.84 317.98h1.25M606.37 316.16h1.25M618.05 317.02h1.25M607.37 318.36h1.25M614.65 319.28h1.25M609 318.49h1.25M609.38 317.37h1.25M621.6 318.72h1.25M620.33 317.11h1.25M612.79 318.07h1.25M612.04 316.96h1.25M613.89 313.76h1.25M609.82 314.97h1.25M615.65 317.27h1.25M614.34 315.57h1.25M610.51 313.22h1.25M627.96 309.13h1.25M625.41 312.38h1.25M627.85 313.92h1.25M625.53 313.2h1.25M624.88 309.61h1.25M627.94 310.16h1.25M627 310.2h1.25M625.44 310.69h1.25M633.54 318.11h1.25M630.19 315.96h1.25M631.19 316.84h1.25M631.49 314.2h1.25M635.01 312.92h1.25M632.08 318.25h1.25M631.79 315.49h1.25M636.04 314.88h1.25M634.11 314.97h1.25M636.4 314.61h1.25M632.66 315.43h1.25M633.02 315.84h1.25M643.18 308.41h1.25M660.62 306.52h1.25M651.91 309.03h1.25M660.06 304.76h1.25M643.59 311.9h1.25M656.95 306.94h1.25M655.41 311.93h1.25M642.65 309.02h1.25M660.63 310.45h1.25M641.41 308.6h1.25M655.49 305.45h1.25M645.26 311.63h1.25M660.77 305.41h1.25M658.26 308.63h1.25M650.56 305.39h1.25M644.24 310.15h1.25M660.02 311.01h1.25M662.47 304.92h1.25M651.63 308.31h1.25M642.38 307.83h1.25M647.98 307.21h1.25M642.9 310.71h1.25M640.72 309.32h1.25M644.15 306.5h1.25M650.59 308.83h1.25M652.61 308.03h1.25M647.34 310.96h1.25M657.5 305.87h1.25M647.4 310.43h1.25M648.19 306.72h1.25M654.39 307.49h1.25M665.09 294.97h1.25M665.68 294.09h1.25M664.95 295.58h1.25M666.55 295.83h1.25M665.35 295.43h1.25M664.82 293.93h1.25M665.75 295.23h1.25M664.82 296.58h1.25M678.54 310.83h1.25M689.26 310.24h1.25M686.97 307.52h1.25M687.64 307.39h1.25M691.37 306.71h1.25M698.33 310.63h1.25M693.71 308.23h1.25M697.22 311.45h1.25M681.39 304.75h1.25M695.2 310.47h1.25M682.34 306.56h1.25M680.34 306.78h1.25M678.94 310.98h1.25M680.66 302.03h1.25M693.57 307.11h1.25M669.09 301.87h1.25M695.41 303.6h1.25M682.56 306.37h1.25M687.81 311.76h1.25M671.02 303.79h1.25M676.98 302.78h1.25M692.71 307.83h1.25M692.92 306.54h1.25M686.01 310.84h1.25M686.54 309.31h1.25M684.4 306.71h1.25M682.51 306.79h1.25M693.54 305.52h1.25M680.49 307.03h1.25M683.54 309.11h1.25M678.22 305.89h1.25M673.23 308.52h1.25M690.15 308.26h1.25M690.91 308.07h1.25M690.07 308.21h1.25M689.4 310.02h1.25M681.5 308.88h1.25M672.78 309.18h1.25M695.15 302.95h1.25M686.13 305.62h1.25M674.26 310.7h1.25M689.03 302.38h1.25M685.89 306.38h1.25M711.76 309.75h1.25M714.37 307.67h1.25M705.58 304.82h1.25M714.62 306.72h1.25M709.54 307.48h1.25M701.95 309.56h1.25M720.17 308.11h1.25M702.32 305.91h1.25M707.91 306.18h1.25M721.96 303.48h1.25M718.57 305.79h1.25M705.17 305.39h1.25M704.52 309.82h1.25M720.86 301.92h1.25M709.18 307.44h1.25M721.73 309.35h1.25M704.87 303.33h1.25M708.07 306.34h1.25M703.04 308.17h1.25M714.14 303.71h1.25M704.1 307.15h1.25M709.26 306.87h1.25M709.39 307.43h1.25M711.58 305.92h1.25M713.73 307.26h1.25M711.99 307.5h1.25M715.38 303.69h1.25M707.34 302.7h1.25M717.11 306.02h1.25M715.55 301.96h1.25M715.86 305.55h1.25M733.68 313.62h1.25M732.32 311.94h1.25M737.24 312.59h1.25M740.25 312.72h1.25M736.87 312.42h1.25M732.49 313.78h1.25M734.5 311.76h1.25M756.16 312.37h1.25M759.63 310.75h1.25M751.46 313.97h1.25M747.31 313.91h1.25M750.83 309.89h1.25M759.08 304.99h1.25M750.61 311.3h1.25M778.65 305.07h1.25M775.93 303.03h1.25M776.84 303.92h1.25M768.85 307.62h1.25M781.15 303.8h1.25M799.44 313.44h1.25M798.86 317.46h1.25M791.88 321.38h1.25M795.06 321.78h1.25M793.74 308.42h1.25M795.87 307.94h1.25M799.44 310.18h1.25M794.67 313.22h1.25M795.71 306.56h1.25M801.38 310.46h1.25M802.41 312.7h1.25M790.74 316.08h1.25M800.79 320.09h1.25M807.46 312.89h1.25M814.89 317.65h1.25M815.98 317.08h1.25M810.76 317.65h1.25M806.64 321.85h1.25M811.11 315.98h1.25M805.84 318.64h1.25M813.34 315.82h1.25M806.26 319.47h1.25M806.08 318.38h1.25M807.43 316.36h1.25M817.14 317.91h1.25M815.81 319.84h1.25M811.11 314.02h1.25M818.79 319.41h1.25M818.13 318.6h1.25M810.86 319.14h1.25M807.71 315.3h1.25M813.11 314.76h1.25M858.37 319.76h1.25M871.67 320.48h1.25M854.91 318.45h1.25M862.61 320h1.25M836.92 318.65h1.25M842.73 317.85h1.25M849.04 318.65h1.25M856.81 318.96h1.25M829.77 316.06h1.25M853.55 319.69h1.25M872.4 321.97h1.25M829.59 318.15h1.25M856.05 320.23h1.25M847.33 318.05h1.25M862.84 321.48h1.25M851.98 319.7h1.25M824.21 316.15h1.25M866.14 319.4h1.25M863.35 320.44h1.25M854.65 318.86h1.25M866.11 320.96h1.25M826.32 316h1.25M860.79 320.98h1.25M834.37 316.58h1.25M842.72 317.82h1.25M872.23 321.27h1.25M854.73 319.78h1.25M837.38 316.75h1.25M862.14 320.33h1.25M829.72 316.68h1.25M853.79 318.77h1.25M825.71 317.54h1.25M828.03 316.02h1.25M869.48 321.46h1.25M828.23 316.57h1.25M856.64 320.83h1.25M873.98 322.01h1.25M873.42 321.51h1.25M874.2 320.84h1.25M866.01 321.48h1.25M847.28 318h1.25M838.43 317.95h1.25M873.01 322.02h1.25M839.96 316.38h1.25M869.22 322.55h1.25M838.75 318.39h1.25M843.63 319.51h1.25M860.9 319.07h1.25M833.34 316.25h1.25M854.92 318.67h1.25M871.94 320.21h1.25M823.7 315.44h1.25M854.16 318.53h1.25M857.58 319.34h1.25M869.8 322.38h1.25M874.99 322.18h1.25M853.39 319.65h1.25M832.52 316.54h1.25M853.44 319.87h1.25M823.39 316.57h1.25M828.5 316.87h1.25M869.83 320.94h1.25M876.13 322.63h1.25M841.99 318.74h1.25M861 320.22h1.25M862.99 319.62h1.25M828.73 316.22h1.25M838.86 317.2h1.25M846.33 319.41h1.25M853.71 319.25h1.25M868.44 320.96h1.25M842.7 317.15h1.25M828.14 315.48h1.25M846.28 318.02h1.25M865.2 320.69h1.25M847.09 319.44h1.25M829.9 316.5h1.25M864.69 319.82h1.25M825.05 316.48h1.25M837.15 317.55h1.25M846 318.71h1.25M866.68 321.21h1.25M827.87 315.27h1.25M838.14 318.56h1.25M828.7 316.95h1.25M855.82 318.67h1.25M826.3 316.15h1.25M826.4 316.99h1.25M823.31 315.61h1.25M857.08 320.4h1.25M847.31 318.6h1.25M848.73 319.59h1.25M855.73 319.81h1.25M850.54 319.45h1.25M878.69 321.65h1.25M877.36 322.48h1.25M840.09 317.21h1.25M846.88 318.09h1.25M849.89 318.38h1.25M859.81 319.83h1.25M879.87 323.11h1.25M880.73 323.6h1.25M890.92 323.46h1.25M890.41 325.91h1.25M890.09 323.93h1.25M891.14 325.15h1.25M888.22 324.87h1.25M891.78 325.36h1.25M889.8 323.67h1.25M892.4 324.57h1.25M894.81 315.48h1.25M893.14 319.12h1.25M894.66 314.99h1.25M898.95 311.81h1.25M898.57 310.17h1.25M894.97 315.58h1.25M894.36 316.21h1.25M897.24 312.02h1.25M918.48 317.87h1.25M904.48 320.86h1.25M920.14 318.25h1.25M906.42 319.58h1.25M920.61 321.49h1.25M910.09 320.42h1.25M908.81 320.89h1.25M905.59 318.76h1.25M902.97 316.84h1.25M901.71 321.5h1.25M917.34 319.4h1.25M914.42 318.48h1.25M902.17 317.27h1.25M907.19 318.28h1.25M904.58 320.7h1.25M919.79 318.52h1.25M910.06 320.65h1.25M904.37 318.83h1.25M899.62 318.55h1.25M913.97 318.66h1.25M910.93 316.78h1.25M915.62 319.26h1.25M916.23 320.26h1.25M917.07 318.62h1.25M920 319.34h1.25M915.52 317.59h1.25M901.33 318.83h1.25M907.62 318.86h1.25M913.41 318.73h1.25M903.43 319.9h1.25M916.15 320.53h1.25M914.6 318.77h1.25M911.79 317.29h1.25M916.87 315.7h1.25M914.4 310.4h1.25M914.82 314.55h1.25M915.75 308.97h1.25M900.36 312.25h1.25M908.01 308.29h1.25M919.05 311.12h1.25M916 312.54h1.25M904.84 312.55h1.25M920.55 310.22h1.25M919.22 310.8h1.25M913.61 307.05h1.25M918.74 312.59h1.25M927.57 312.08h1.25M944.78 314.91h1.25M932.54 309.22h1.25M941.5 309.17h1.25M932.58 319.41h1.25M932.57 318.75h1.25M942.4 313.57h1.25M927.88 311.25h1.25M940.04 310.82h1.25M926.35 314.46h1.25M940.78 316.87h1.25M932.49 307.91h1.25M939.49 314.46h1.25M949.88 317.8h1.25M937.07 315.02h1.25M932.01 317.06h1.25M934.08 311.79h1.25M935.06 309.62h1.25M936.64 317.28h1.25M935.89 315.91h1.25M950.04 307.22h1.25M937.93 315.78h1.25M932.97 310.86h1.25M944.47 316.42h1.25M937.82 310.91h1.25M942.77 320.22h1.25M947.93 316.65h1.25M924.49 314.18h1.25M941.41 313.81h1.25M922.85 314.55h1.25M936.38 319.23h1.25M944.25 314.32h1.25M932.57 312.77h1.25M927.93 310.75h1.25M926.81 317.53h1.25M937.7 319.9h1.25M925.86 323.85h1.25M945.87 316.6h1.25M940.08 309.09h1.25M941.73 319.92h1.25M944.44 323.17h1.25M931.33 314.1h1.25M944.68 310.87h1.25M934.2 312.08h1.25M963.81 310.69h1.25M963.52 311.47h1.25M955.73 318.2h1.25M955.43 319.37h1.25M964.17 316.51h1.25M951.04 310.37h1.25M961.23 307.83h1.25M964.91 308.41h1.25M952.01 309.65h1.25M960.3 315.42h1.25M959.23 315.12h1.25M952.41 312.24h1.25M966.08 313.64h1.25M953.74 313.09h1.25M961.34 322.24h1.25M966.94 316.05h1.25M956.48 313.96h1.25M966.92 314.03h1.25M972.12 304.45h1.25M975.49 304.23h1.25M973.18 301.41h1.25M977.09 302.92h1.25M975.07 304.87h1.25M971.13 306.58h1.25M974.36 303.77h1.25M973.68 307.16h1.25M975.62 304.23h1.25M972.85 303.2h1.25M975.89 303.67h1.25M986.82 312.88h1.25M998.65 318.4h1.25M996.78 316.94h1.25M990.55 314.03h1.25M991.09 314.8h1.25M986.89 313.75h1.25M992.25 315.24h1.25M982.85 310.89h1.25M1004.88 320.55h1.25M1006.75 320.08h1.25M1008.51 322.33h1.25M1004.71 320.22h1.25M1000.92 318.13h1.25M1006.39 321.17h1.25M992.18 315.12h1.25M986.5 313.32h1.25M981.06 309.76h1.25M1010.86 323.18h1.25M999.38 317.12h1.25M982.42 311.57h1.25M1010.23 323.32h1.25M1000.96 318.82h1.25M987.04 312.97h1.25M1008.02 321.98h1.25M984 311.87h1.25M996.51 317.74h1.25M1008.17 321.79h1.25M997.97 317.91h1.25M993.38 315.67h1.25M990.32 315.02h1.25M994.27 315.59h1.25M991.78 314.26h1.25M982.48 311.83h1.25M1010.23 322.64h1.25M992.03 314.97h1.25M989.34 312.71h1.25M987.09 312.31h1.25M1006.92 320.83h1.25M981.27 310.08h1.25M994.66 315.26h1.25M994.81 315.52h1.25M1006.04 320.62h1.25M999.02 316.78h1.25M978.19 308.47h1.25M987.21 312.89h1.25M982.74 311.69h1.25M992.93 315.23h1.25M1005.3 320.37h1.25M1001.45 318.47h1.25M984.02 311.7h1.25M1002.44 318.52h1.25M992.96 316.12h1.25M998.63 318.49h1.25M1009.66 323.76h1.25M1004.91 319.63h1.25M1001.69 319.89h1.25M1003.81 319.31h1.25M1018.28 311.06h1.25M1014.27 318.58h1.25M1018.03 311.61h1.25M1020.76 308.47h1.25M1017.81 313.35h1.25M1019.21 309.6h1.25M1011.63 323.88h1.25M1015.43 315.96h1.25M1020.21 308.24h1.25M1013.49 319.74h1.25M1014.01 319.42h1.25M1013.4 319.25h1.25M1020.61 306.85h1.25M1015.35 315.48h1.25M1021.76 306.24h1.25M1020.54 309.08h1.25M1019 310.6h1.25M1018.9 311.57h1.25M1029.84 300.79h1.25M1035.32 297.94h1.25M1034.25 300.21h1.25M1031.14 299.98h1.25M1045.3 297h1.25M1044.64 300.4h1.25M1043.63 298.23h1.25M1030.09 299.92h1.25M1045.85 293.6h1.25M1031.08 297.33h1.25M1042.08 294.65h1.25M1046.4 295.59h1.25M1031.82 296.23h1.25M1040.23 298.38h1.25M1032.95 295.54h1.25M1045.71 300.21h1.25M1041.62 296.12h1.25M1034.03 297.7h1.25M1039.95 294.02h1.25M1039.64 293.34h1.25M1027.09 296.76h1.25M1031.67 298.66h1.25M1042.78 299.29h1.25M1038.72 297.03h1.25M1045.36 295.65h1.25M1027.87 298.45h1.25M1032.7 296.13h1.25M1026.8 300.33h1.25M1032.5 296.81h1.25M1043 297.06h1.25M1046.02 295.4h1.25M1053.26 307.37h1.25M1052.67 307.43h1.25M1047.15 301.59h1.25M1047.06 300.16h1.25M1050.7 304.93h1.25M1049.87 305.5h1.25M1053.19 306.72h1.25M1052.06 306.89h1.25M1049.13 303.31h1.25M1060.89 307.26h1.25M1060.89 307.65h1.25M1055.18 307.67h1.25M1060.38 308.49h1.25M1055.81 306.95h1.25M1057.04 307.49h1.25M1061.64 307.18h1.25M1060.49 307.53h1.25M1057.54 306.43h1.25M1060.16 308.45h1.25M1062.35 308.37h1.25M1062.09 307.89h1.25M1055.05 306.68h1.25M1054.53 307.23h1.25M1059.23 307.85h1.25M1062.68 307.74h1.25M1059.51 306.59h1.25M1064.92 294.75h1.25M1063.91 298.55h1.25M1068.27 294.45h1.25M1068.23 296.07h1.25M1067.42 296.44h1.25M1064.56 296.35h1.25M1068.48 294.88h1.25M1066.5 296.16h1.25" stroke="#e6e600" stroke-width="1.25" fill="none"/>
<path d="M235.88 412.9h1.25M367.18 378.3h1.25M367.88 385.2h1.25M414.98 408.3h1.25M754.38 411.8h1.25M761.38 408.3h1.25M762.38 401.3h1.25M806.38 381.4h1.25M814.88 385.6h1.25M141.41 399.17h1.25M139.92 400.76h1.25M142.06 401.97h1.25M138.62 402.89h1.25M150.32 400.29h1.25M140.48 402.19h1.25M142.28 402.04h1.25M138.73 398.96h1.25M136.76 401.1h1.25M142.37 401.61h1.25M141.76 401.23h1.25M139.94 401.31h1.25M148.01 402.24h1.25M140.01 401.6h1.25M136.02 400.29h1.25M137.01 401.24h1.25M161.94 402.27h1.25M164.08 405.24h1.25M161.73 402.99h1.25M164.79 404.95h1.25M162.02 401.73h1.25M164.97 401.86h1.25M158.85 405.01h1.25M173.4 401.81h1.25M168.89 398.81h1.25M167.83 403.14h1.25M170.66 400.88h1.25M185.93 392.91h1.25M186.15 391.89h1.25M186.26 393.97h1.25M185.77 391.8h1.25M187.23 392.37h1.25M185.26 392.49h1.25M210.36 393.72h1.25M208.71 393.24h1.25M208.97 392.38h1.25M206.84 393.85h1.25M212.69 392.39h1.25M205.4 391.98h1.25M207.11 393.11h1.25M213.47 393.02h1.25M207.66 393.41h1.25M205.2 394.17h1.25M211.57 393.51h1.25M214.78 394.56h1.25M206.46 393.4h1.25M213.1 393.71h1.25M207.34 393.33h1.25M203.95 391.84h1.25M207.4 392.66h1.25M202.16 392.67h1.25M202.42 393.85h1.25M210.62 394.77h1.25M208.44 390.98h1.25M216.13 402.7h1.25M211.46 403.19h1.25M214.99 400.73h1.25M216.1 404.45h1.25M210.87 402.61h1.25M214.44 402.61h1.25M214.71 400.18h1.25M211.63 398.27h1.25M241.72 395.06h1.25M231.51 400.03h1.25M266.84 400.28h1.25M254.74 394.99h1.25M231.96 400.07h1.25M238.23 396.82h1.25M264.73 399.03h1.25M248.15 394.75h1.25M255.59 398.46h1.25M235.75 394.56h1.25M235.23 396.08h1.25M253.55 395.33h1.25M243.32 393.9h1.25M229.57 396.19h1.25M227.83 399.64h1.25M251.52 396.34h1.25M243.68 394.67h1.25M232.33 394.56h1.25M239.64 396.39h1.25M234.14 398.82h1.25M246.61 400.41h1.25M244.53 394.07h1.25M254.81 396.09h1.25M229.28 398.16h1.25M245.55 401.26h1.25M236.17 398.36h1.25M235.7 400.47h1.25M245.29 399.71h1.25M261.94 400.97h1.25M235.16 393.15h1.25M264.45 399.93h1.25M265.9 398.84h1.25M237.25 395.06h1.25M267.49 399.26h1.25M245.97 400.94h1.25M263.38 395.77h1.25M247.26 400.54h1.25M262.31 396.32h1.25M264.2 399.62h1.25M259.61 398.46h1.25M254.76 397.6h1.25M259.72 402.14h1.25M241.17 398.93h1.25M261.47 396.34h1.25M236.51 400.37h1.25M226.04 394.05h1.25M250.55 398.4h1.25M229.1 398.8h1.25M243.81 395.89h1.25M235.51 398.77h1.25M255.67 396.69h1.25M237.49 400.47h1.25M264.22 394.87h1.25M229.93 395.68h1.25M255.86 400.33h1.25M231.87 395.4h1.25M237.49 398.18h1.25M232.98 398.66h1.25M252.19 397.42h1.25M271.44 398.71h1.25M275.91 400.5h1.25M268.28 398.8h1.25M270.01 399.36h1.25M276.18 399.13h1.25M279.19 398.9h1.25M276.31 400.43h1.25M279.36 400.82h1.25M270.83 398.94h1.25M269.15 399.83h1.25M271.39 399.72h1.25M280.05 399.44h1.25M278.05 397.17h1.25M268.47 398.27h1.25M278.5 399.86h1.25M273.82 398.57h1.25M268.27 400.09h1.25M279.92 399.26h1.25M282.09 403.88h1.25M280.54 402.76h1.25M283.31 405.02h1.25M280.48 404.69h1.25M281.01 403.99h1.25M283.52 402.71h1.25M306.5 400.04h1.25M289.41 399.94h1.25M302.6 400.82h1.25M296.3 400.1h1.25M289.93 402.26h1.25M306.2 402.18h1.25M291.15 403.4h1.25M287.38 401.89h1.25M291.14 402.92h1.25M289.99 400.33h1.25M291.25 402.89h1.25M285.24 400.12h1.25M289.97 403.02h1.25M300.16 402.12h1.25M313.24 402.26h1.25M290.33 402.97h1.25M314.04 401.09h1.25M288.35 398.91h1.25M296.54 401.53h1.25M315.88 401.33h1.25M298.18 400.17h1.25M284.55 401.23h1.25M311.22 401.71h1.25M298.18 399.48h1.25M317.9 401.27h1.25M302.35 400.62h1.25M298.42 402.35h1.25M314.31 400.48h1.25M291.84 401.58h1.25M300.55 399.61h1.25M299.83 398.63h1.25M301.17 400.59h1.25M286.19 400.25h1.25M287.86 400.72h1.25M302.24 400.42h1.25M301.1 403h1.25M307.57 402.9h1.25M291.91 403.12h1.25M300.73 401.22h1.25M314.88 400.98h1.25M311.15 400.22h1.25M284.89 401.28h1.25M291.75 399.85h1.25M315.69 402.46h1.25M293.52 400.37h1.25M304.19 402.2h1.25M304.01 402.14h1.25M325.62 403.9h1.25M337.54 405.46h1.25M337.17 405.07h1.25M333.47 407.88h1.25M336.61 406.15h1.25M329.32 403.95h1.25M333.35 406.67h1.25M333.69 407h1.25M326.82 407.27h1.25M325.59 402.36h1.25M337.87 403.31h1.25M332.16 405.26h1.25M332.55 404.19h1.25M327.3 401.06h1.25M327.89 404.22h1.25M334.88 400.99h1.25M343.51 411.81h1.25M338.23 410.06h1.25M341.11 411.93h1.25M340.46 411.64h1.25M335.42 414.81h1.25M340.05 410.93h1.25M338.29 414.08h1.25M346.67 412.61h1.25M350.41 411.3h1.25M337.66 414.46h1.25M341.62 411.92h1.25M335.84 410.4h1.25M342.4 413.26h1.25M339.22 411.02h1.25M343.28 412.06h1.25M342.56 411.2h1.25M337.88 411.55h1.25M338.02 411.28h1.25M350.47 411.22h1.25M335.35 411.33h1.25M352.93 421.84h1.25M353.66 422.29h1.25M352.77 421.02h1.25M354.45 421.36h1.25M353.64 421.88h1.25M354.21 421.47h1.25M361.8 413.29h1.25M364.52 419.15h1.25M363.67 413.16h1.25M363.69 413.21h1.25M358.76 416.08h1.25M364.24 411.29h1.25M375.37 416.58h1.25M378.09 415.96h1.25M374.66 417.06h1.25M375.48 419.05h1.25M376.67 417.57h1.25M377.74 417.96h1.25M372.29 414.83h1.25M371.47 417.45h1.25M388.88 413.39h1.25M385.86 417.74h1.25M386.24 412.76h1.25M381.44 416.12h1.25M383.38 416.65h1.25M388.16 415.66h1.25M388.26 411.96h1.25M380.64 418.68h1.25M388.37 416.45h1.25M402.82 400.74h1.25M401.15 400.83h1.25M400.74 399.46h1.25M391.26 392.73h1.25M396.96 396.79h1.25M390.01 392.67h1.25M391.14 392.73h1.25M402.53 401.48h1.25M403.1 402.09h1.25M399.41 399.15h1.25M399.57 397.35h1.25M390.42 393.64h1.25M401.08 400.48h1.25M388.94 391.87h1.25M389.95 393.96h1.25M404.31 402.93h1.25M390.76 394.06h1.25M418.68 392.88h1.25M415.09 385.07h1.25M412.01 384.31h1.25M422.2 398.24h1.25M423.54 392.53h1.25M415.49 392.83h1.25M414.03 389.75h1.25M413.3 396.64h1.25M426.27 392.05h1.25M417.07 393.6h1.25M425.1 396.76h1.25M417.23 387.28h1.25M414.48 387.45h1.25M416.54 386.45h1.25M424.5 392.27h1.25M419.2 387.86h1.25M446.09 393.33h1.25M451.51 392.85h1.25M452.34 392.99h1.25M458.76 394.26h1.25M450.54 393.75h1.25M454.24 393.28h1.25M454.78 393.72h1.25M447.82 393.41h1.25M449.05 393.09h1.25M445.96 394.26h1.25M444.05 393.71h1.25M452.85 393.51h1.25M440.38 393.2h1.25M452.7 394.39h1.25M453.17 393.65h1.25M442.75 394.04h1.25M449.2 393.8h1.25M459.99 392.01h1.25M452.01 392.47h1.25M460.04 393.1h1.25M447.43 392.51h1.25M442.86 394.61h1.25M447.33 393.54h1.25M457.88 393.34h1.25M451.15 394.12h1.25M448.84 392.69h1.25M444.93 393.58h1.25M457.75 393.64h1.25M454.38 394.26h1.25M447.34 392.55h1.25M465.68 396.36h1.25M475.47 396.12h1.25M471.18 396.87h1.25M467.09 397.01h1.25M476.22 395.89h1.25M466.32 395.74h1.25M468.55 397.96h1.25M469.63 396.82h1.25M465.47 397.63h1.25M466.65 397.04h1.25M477.57 397.44h1.25M470.55 396.14h1.25M468.89 397.3h1.25M465.51 397.47h1.25M464.73 398.47h1.25M473.15 395.87h1.25M475.74 397.18h1.25M475.39 395.61h1.25M472.39 397.06h1.25M507.84 398.8h1.25M496.09 400.36h1.25M502.89 399.11h1.25M483.73 399.61h1.25M488.51 404.89h1.25M503.66 402h1.25M489.68 401.37h1.25M492.82 402.6h1.25M512.99 403.92h1.25M488.71 398.21h1.25M495.62 403.49h1.25M510.36 401.64h1.25M479.84 400.47h1.25M508.75 403.25h1.25M505.35 402.39h1.25M493.57 404.6h1.25M498.15 401.9h1.25M505.19 400.74h1.25M482.38 403.28h1.25M484.11 405.2h1.25M484.76 401.47h1.25M489.79 398.6h1.25M511.3 404.78h1.25M495.57 399.37h1.25M493.03 403.83h1.25M480.16 400h1.25M512.38 400.84h1.25M500.39 399.84h1.25M492.89 399.43h1.25M480.12 404.29h1.25M497.11 400.92h1.25M482.99 403.19h1.25M481.56 399.1h1.25M502.76 400.8h1.25M480.18 401.42h1.25M496.65 404.16h1.25M508.93 400.72h1.25M493.14 399.67h1.25M511.17 400.06h1.25M497.13 402.87h1.25M486.72 401.12h1.25M502.32 398.43h1.25M483.83 401.33h1.25M510.48 401.63h1.25M479.74 402.15h1.25M499.05 401.97h1.25M513.14 402.97h1.25M486.77 404.46h1.25M494.6 401.72h1.25M497.76 405.14h1.25M504.46 400.82h1.25M507.34 400.47h1.25M480.33 398.31h1.25M523.08 413.87h1.25M518.06 409.22h1.25M516.27 406.95h1.25M522.72 413.88h1.25M517.48 408.32h1.25M520.35 409.96h1.25M524.11 414.94h1.25M514.54 406.33h1.25M523.63 414.49h1.25M518.79 408.83h1.25M517.2 408.76h1.25M517.48 409.31h1.25M513.65 406.61h1.25M521.6 412.83h1.25M526.01 413.66h1.25M515.88 407.5h1.25M521.82 411.03h1.25M538.91 410.6h1.25M539.57 412.05h1.25M540.94 408.12h1.25M544.62 417.71h1.25M546.87 414.6h1.25M537.14 415.53h1.25M546.28 410.91h1.25M537.31 414.18h1.25M545.35 411.26h1.25M537.24 411.06h1.25M543.19 413.67h1.25M529.38 417.31h1.25M536.28 411.41h1.25M534.46 411.67h1.25M531.82 411.75h1.25M536.91 413.9h1.25M536.58 409.76h1.25M537.75 414.55h1.25M541.67 413.58h1.25M538.26 409.49h1.25M539.16 417.29h1.25M543.14 415.17h1.25M531.21 413.77h1.25M531.79 413.08h1.25M526.45 409.11h1.25M542.71 412.2h1.25M529.47 413.74h1.25M542.79 415.42h1.25M541.48 412.17h1.25M532.61 400.23h1.25M529.99 400.25h1.25M531.62 398.66h1.25M533.47 398.6h1.25M553.31 403.23h1.25M556.04 404.53h1.25M550.6 407.53h1.25M549.31 404.27h1.25M547.91 403.89h1.25M548.74 407.74h1.25M547.84 404.42h1.25M547.71 400.66h1.25M556.18 404.55h1.25M548.87 402.5h1.25M551.03 404.93h1.25M548.29 403.91h1.25M555.21 401.94h1.25M559.44 403.66h1.25M555.3 407.31h1.25M548.44 406.45h1.25M554.34 405.8h1.25M547.77 405.3h1.25M558.54 404.98h1.25M585.42 404.77h1.25M578.69 407.36h1.25M580.32 400.32h1.25M596.5 403.27h1.25M597.22 406.88h1.25M583.35 407.54h1.25M581.72 402.92h1.25M589.94 407.54h1.25M582.98 404.22h1.25M579.63 402.62h1.25M589.52 405h1.25M581.32 403.77h1.25M585.85 407.18h1.25M587.19 403.83h1.25M587.68 400.79h1.25M581.33 402.39h1.25M596.99 402.73h1.25M578.87 405.74h1.25M588.85 407.71h1.25M590.9 406.34h1.25M586.82 401.4h1.25M594.12 400.71h1.25M590.54 405.71h1.25M591.08 404.95h1.25M578.19 407.02h1.25M618.54 406h1.25M628.2 405.55h1.25M624.47 406.62h1.25M620.78 404.29h1.25M624.03 407.72h1.25M616.39 406.18h1.25M614.42 405.61h1.25M626.11 405.93h1.25M628.06 404.51h1.25M607.99 410.17h1.25M617.38 409.31h1.25M620.79 404.86h1.25M625.68 405.66h1.25M620.2 402.99h1.25M621.07 406.79h1.25M620.7 403.68h1.25M608.56 406.19h1.25M607.87 406.17h1.25M622.86 410.79h1.25M609.28 407.11h1.25M617.99 406.09h1.25M610.41 409.17h1.25M621.12 409.59h1.25M610.79 408.41h1.25M620.4 403.52h1.25M624.36 403.98h1.25M628.35 406.19h1.25M634.39 406.54h1.25M636.92 405.86h1.25M634.54 403.3h1.25M633.45 403.27h1.25M636.46 406.07h1.25M630.77 404.83h1.25M630.57 405.38h1.25M633.91 405.22h1.25M630.35 406.66h1.25M629.52 403h1.25M636.4 405.2h1.25M636.94 404.35h1.25M646.97 394.31h1.25M638.37 401.27h1.25M649.1 392.01h1.25M645.77 396.28h1.25M649.35 395.24h1.25M647.58 395.43h1.25M646.87 394.49h1.25M643.38 399.76h1.25M643.48 398.36h1.25M645.55 394.03h1.25M641.02 400.9h1.25M645.69 397.19h1.25M639.61 399.63h1.25M647.27 395.36h1.25M641.99 397.08h1.25M642.99 397h1.25M689.35 394.67h1.25M664.91 397.33h1.25M651.45 396.48h1.25M684.65 396.69h1.25M678.06 396.15h1.25M658.54 397.32h1.25M652.37 393.86h1.25M654.14 395.66h1.25M662.76 398.79h1.25M653.18 399.34h1.25M675.78 397.3h1.25M659.63 393.69h1.25M657.06 394.76h1.25M684.38 395.07h1.25M682.5 395.57h1.25M650.66 396.07h1.25M661.01 396.65h1.25M689.98 400.31h1.25M685.8 393.51h1.25M660.22 392.01h1.25M656.02 392.63h1.25M662.75 396.63h1.25M671.69 395.37h1.25M680.84 393.75h1.25M687.69 395.53h1.25M690.65 397.27h1.25M659.27 394.65h1.25M680.26 391.78h1.25M674.45 394.19h1.25M686.75 394.36h1.25M679.66 397.69h1.25M690.33 396.79h1.25M652.71 393.91h1.25M668.38 394.04h1.25M679.33 392.29h1.25M674.89 392.54h1.25M684.29 396.69h1.25M657.37 399.51h1.25M653.78 395.91h1.25M679.42 396.24h1.25M675.89 400.21h1.25M679.01 395.92h1.25M661.82 397.11h1.25M675.35 397.1h1.25M672.03 399.58h1.25M681.17 397.95h1.25M670.47 396.52h1.25M672.29 393.6h1.25M667.69 395.56h1.25M658.66 396.74h1.25M687.33 393.14h1.25M685.21 396.69h1.25M672 392.81h1.25M653.78 396.65h1.25M697.9 396.51h1.25M712.7 397.01h1.25M702.27 396.35h1.25M703.33 395h1.25M706.73 394.89h1.25M695.36 395.96h1.25M701.88 397.11h1.25M694.02 395.91h1.25M693.97 396.04h1.25M712.47 395.61h1.25M718.66 397.55h1.25M698.49 400.35h1.25M699.3 398.19h1.25M706.3 393.98h1.25M699.33 397.33h1.25M720.14 397.73h1.25M701.1 396.21h1.25M718.91 397.67h1.25M715.54 397.26h1.25M713.13 397.42h1.25M701.03 394.45h1.25M720.73 395.48h1.25M697.77 397.62h1.25M721.25 397.09h1.25M715.89 400.41h1.25M720.21 397.24h1.25M712.34 399.46h1.25M716.31 397.78h1.25M709.76 398.45h1.25M710.43 399.93h1.25M712.71 394.13h1.25M701.59 395.81h1.25M734.69 389.75h1.25M728.31 393.57h1.25M739.49 389.76h1.25M738 394.54h1.25M735.62 390.47h1.25M727.34 391.44h1.25M738.06 392.84h1.25M740.37 393.89h1.25M761.29 393.7h1.25M752.8 392.28h1.25M752.41 388.12h1.25M749.37 390.82h1.25M758.43 391h1.25M751.51 389.07h1.25M770.45 386.87h1.25M773.97 390.55h1.25M773.08 388.36h1.25M768.58 387.81h1.25M822.12 393.77h1.25M823.12 395.12h1.25M801.79 393.67h1.25M796.44 398.54h1.25M816.31 393.75h1.25M789.96 392.45h1.25M807.16 394.44h1.25M804.23 393h1.25M795.85 393.6h1.25M794.1 396.03h1.25M820.62 392.95h1.25M803.31 390.33h1.25M811.83 394.86h1.25M798.84 396.93h1.25M793.64 392.42h1.25M799.83 394.36h1.25M822.5 391.48h1.25M801.95 396.85h1.25M790.84 391.6h1.25M801.16 394.93h1.25M814.28 389.74h1.25M817.94 399.32h1.25M794.99 393.49h1.25M812.72 395.4h1.25M818.7 396.25h1.25M822.3 398.51h1.25M810.6 395.26h1.25M793.68 392.03h1.25M791.95 395.61h1.25M796.06 396.56h1.25M807.88 392.89h1.25M824.05 399.23h1.25M799.34 400.34h1.25M822.2 390.67h1.25M791.64 393.64h1.25M790.48 393.83h1.25M814.61 393.49h1.25M822.78 393.05h1.25M815.05 395.99h1.25M824.15 393h1.25M793.88 394.68h1.25M823.29 399.68h1.25M817.52 396.35h1.25M860.51 396.23h1.25M874.48 399.27h1.25M851.24 398.71h1.25M856.63 399.22h1.25M848.8 400.79h1.25M877.7 399.06h1.25M866.35 395.41h1.25M868.59 400.55h1.25M867.89 398.95h1.25M859.17 400.8h1.25M871.44 395.18h1.25M854.42 398.84h1.25M828.2 398.41h1.25M872.72 398.33h1.25M856.6 396.68h1.25M837.42 397.77h1.25M853.91 395.97h1.25M862.25 399.53h1.25M846.36 398.51h1.25M873.4 399.06h1.25M842.35 399.89h1.25M826.27 396.6h1.25M858.32 397.28h1.25M846.55 396.63h1.25M853.95 397.25h1.25M872.3 397.43h1.25M836.14 398.95h1.25M855.95 398.23h1.25M828.99 400.39h1.25M842.32 399.22h1.25M867.39 396.58h1.25M855.57 396.32h1.25M878.22 400.4h1.25M868.29 398.48h1.25M831.33 397.6h1.25M865.42 397.79h1.25M866.61 400.57h1.25M877.14 396.26h1.25M849.47 399.79h1.25M852.75 399.14h1.25M845.16 394.49h1.25M863.03 395.32h1.25M847.95 399.29h1.25M824.52 400.35h1.25M831.83 402.09h1.25M875.3 400.23h1.25M862.49 397.58h1.25M843.6 397.05h1.25M828.69 401.13h1.25M824.78 396.56h1.25M853.98 399.16h1.25M841.65 397.66h1.25M873.54 395.57h1.25M836.58 399.12h1.25M871.24 396.2h1.25M849.08 395.25h1.25M852.77 397.67h1.25M834.07 398.45h1.25M850.52 397.77h1.25M824.92 397.98h1.25M862.57 396.33h1.25M841.06 400.08h1.25M863.2 394.76h1.25M836.54 398.99h1.25M871.81 400.74h1.25M878.62 402.31h1.25M829.14 396.6h1.25M857.63 396.83h1.25M828.6 398.99h1.25M846.4 399.07h1.25M862.32 399.14h1.25M833.64 398.21h1.25M835.49 397.65h1.25M858.16 396.9h1.25M855.6 397.55h1.25M863.9 397.08h1.25M831.06 400.62h1.25M868.56 396.95h1.25M846.14 394.98h1.25M868.22 395.91h1.25M826.55 401.92h1.25M826.06 400.09h1.25M837.95 399.91h1.25M874.49 398.85h1.25M867.55 395.77h1.25M844.66 401.49h1.25M848.35 397.68h1.25M857.36 398.31h1.25M876.27 394.36h1.25M841.39 398.23h1.25M871.68 400.76h1.25M836.71 396.75h1.25M848.87 399.12h1.25M880.88 400.21h1.25M879.94 400.75h1.25M895.68 402.57h1.25M888.94 404.23h1.25M891.98 405.42h1.25M892.02 403.24h1.25M894.1 403.85h1.25M897.73 404.35h1.25M894.11 404.7h1.25M887.61 401.13h1.25M896.18 402.21h1.25M887.7 401.38h1.25M894.97 404.45h1.25M894.71 401.88h1.25M891.19 403.37h1.25M888.77 399.62h1.25M896.07 402.03h1.25M908.82 401.85h1.25M903.86 398.61h1.25M923.34 399.65h1.25M899.06 400.93h1.25M918.86 397.57h1.25M904.22 401.68h1.25M903.83 398.44h1.25M905.89 398.91h1.25M901.07 398.75h1.25M910.08 400.95h1.25M917.71 397.94h1.25M918.17 395.66h1.25M916.61 400.15h1.25M920.59 396.12h1.25M918.86 398.66h1.25M912.56 399.27h1.25M908.27 398.91h1.25M915.74 398.89h1.25M904.86 397.42h1.25M906.9 396.73h1.25M906.1 397.38h1.25M910.99 401.45h1.25M905.7 395.65h1.25M920.5 400.49h1.25M921.06 396.98h1.25M900.56 399.24h1.25M900.41 396.77h1.25M903.65 399.37h1.25M921.93 396.9h1.25M899.82 395.65h1.25M898.31 397.28h1.25M909.74 400.09h1.25M900.46 398.02h1.25M922.88 398.54h1.25M906.95 398.11h1.25M905.37 395.49h1.25M920.37 402.22h1.25M907.81 398.2h1.25M925.5 394.55h1.25M938.45 396.89h1.25M932.47 396.75h1.25M931.84 400.27h1.25M942.09 397.38h1.25M940.74 398.94h1.25M926.94 397.37h1.25M932.09 395.81h1.25M941.66 398.81h1.25M935.06 399.61h1.25M928.76 397.2h1.25M940.94 400.18h1.25M928.95 396.19h1.25M932.76 402.33h1.25M925.1 396.44h1.25M934.88 398.59h1.25M925.81 399.73h1.25M923.92 398.7h1.25M931.32 394.08h1.25M937.76 398.47h1.25M936.29 399.1h1.25M930.28 398.17h1.25M938.05 398.17h1.25M928.11 399.56h1.25M929.43 397.93h1.25M939.06 393.79h1.25M945.31 398.19h1.25M959.37 405.85h1.25M962.65 399.25h1.25M944.75 404.16h1.25M941.2 408.45h1.25M960.09 408.75h1.25M950.28 405.52h1.25M943.14 404.45h1.25M945.55 399.83h1.25M954.21 398.57h1.25M939.47 399.41h1.25M958.76 401.47h1.25M945.58 406.51h1.25M941.7 402.44h1.25M958.48 400.6h1.25M952.91 397.77h1.25M940.13 397.42h1.25M942.07 401.92h1.25M953 405.97h1.25M953.48 406.98h1.25M941.63 395.56h1.25M960.91 406.56h1.25M959.23 408.82h1.25M960.7 399.11h1.25M948.51 408.07h1.25M961.99 392.64h1.25M964.98 396.67h1.25M964.83 398.95h1.25M962.71 396.8h1.25M964.34 394.6h1.25M963.51 394.72h1.25M961.81 394.14h1.25M970.08 395.95h1.25M967.71 397.87h1.25M974.4 395.82h1.25M982.46 397.66h1.25M985.39 398.43h1.25M985.74 396.53h1.25M976.23 397.03h1.25M971.51 398.05h1.25M971.21 396.82h1.25M976.54 397.43h1.25M980.42 398.66h1.25M991.75 397.35h1.25M979.88 397.78h1.25M981.15 398.85h1.25M984.92 398.29h1.25M984.94 398.39h1.25M988.06 395.4h1.25M988.86 398.84h1.25M982.46 395.21h1.25M990.02 395.34h1.25M980.68 398.13h1.25M968.58 398.66h1.25M975.56 398.53h1.25M986.72 395.27h1.25M986.43 398.43h1.25M984.84 396.83h1.25M968.42 395.74h1.25M979.97 395.68h1.25M970.9 396.18h1.25M970.23 396.67h1.25M972.44 398.15h1.25M991.21 396.64h1.25M980.66 398.46h1.25M977.51 398.17h1.25M976.18 399.66h1.25M967.76 398.33h1.25M980.16 397.59h1.25M971.33 396.16h1.25M989.16 397.78h1.25M987.18 397.83h1.25M973.4 398.55h1.25M992.5 396.13h1.25M987.01 397.28h1.25M1004.98 404.95h1.25M996.82 399.11h1.25M1003.95 404.57h1.25M1002.54 403.63h1.25M1005.2 405.67h1.25M1005.14 404.59h1.25M1002.93 402.56h1.25M1000.48 402.19h1.25M1004.79 404.7h1.25M996.7 398.85h1.25M994.46 397.59h1.25M999.06 401.67h1.25M995.63 399.27h1.25M1002.41 403.48h1.25M998 399.62h1.25M1001.66 403.25h1.25M997.12 401.77h1.25M1004.5 403.74h1.25M1000.35 401.25h1.25M1001.17 401.16h1.25M998.68 401.97h1.25M1006.68 406.98h1.25M1020.61 398.88h1.25M1014.12 403.97h1.25M1007.19 406.5h1.25M1016.58 400.12h1.25M1013.54 402.48h1.25M1010.81 405.04h1.25M1015.39 401.91h1.25M1012.39 402.58h1.25M1012.13 401.73h1.25M1011.26 403.54h1.25M1009.44 406.81h1.25M1008.44 407.48h1.25M1016.14 402.21h1.25M1009.22 402.87h1.25M1013.99 403.29h1.25M1008.21 403.69h1.25M1012.52 405.12h1.25M1007.82 405.57h1.25M1010.48 403.32h1.25M1011.52 402.65h1.25M1015.86 401.83h1.25M1011.29 402.89h1.25M1034.62 396.35h1.25M1051.91 399h1.25M1027.27 398.73h1.25M1049.68 397.08h1.25M1053.04 396.99h1.25M1038.93 401.13h1.25M1046.47 396.77h1.25M1029.29 396.11h1.25M1034.3 396.25h1.25M1028.58 397.88h1.25M1034.08 399.49h1.25M1043.44 400.65h1.25M1032.77 398.49h1.25M1051.13 398.74h1.25M1028.43 398.14h1.25M1028.92 398.12h1.25M1047.09 396.39h1.25M1041.76 399.4h1.25M1027.03 399.93h1.25M1040.32 397.93h1.25M1037.81 397.93h1.25M1046.93 399.01h1.25M1026.49 396.19h1.25M1027.07 396.87h1.25M1047.26 396.7h1.25M1032.16 399.6h1.25M1040.19 398.3h1.25M1052.6 395.26h1.25M1033.71 397.66h1.25M1027.89 400.39h1.25M1046.43 397.95h1.25M1044.81 397.93h1.25M1037.32 398.28h1.25M1038.94 398.11h1.25M1042.5 398.13h1.25M1033.39 396.71h1.25M1037.27 395.98h1.25M1034.79 396.73h1.25M1030.3 396.19h1.25M1053.06 397.5h1.25M1049.13 398.82h1.25M1061.67 402.31h1.25M1062.78 402.54h1.25M1063.12 401.25h1.25M1053.45 402.33h1.25M1062.49 402.39h1.25M1055.45 401.31h1.25M1054.42 400.93h1.25M1057.97 401.8h1.25M1061.27 402.64h1.25M1061.22 402.89h1.25M1056.68 402.68h1.25M1055.94 400.93h1.25M1059.63 401.25h1.25M1055.32 402.01h1.25M1056.8 403.18h1.25M1059.49 402.23h1.25M1067.99 396.08h1.25M1065.18 394.98h1.25M1067.88 398.24h1.25M1064.68 395.24h1.25M1065.71 398.39h1.25M1066.33 396.33h1.25M1065.7 395.32h1.25M1065.37 397.59h1.25" stroke="#00ad00" stroke-width="1.25" fill="none"/>
<path d="M131.85 632.4L131.7 597.31L133.46 597.31L133.46 579.76L135.22 579.76L135.22 568.01L137.5 568.01L137.5 562.22L144 562.22L144 556.43L149.28 556.43L149.28 632.4L150.16 632.4L150.16 597.31L151.74 597.31L151.74 585.55L153.32 585.55L153.32 568.01L160.7 568.01L160.7 562.22L164.74 562.22L164.74 556.43L166.85 556.43L166.85 632.4L167.56 632.4L167.56 603.1L168.96 603.1L168.96 591.52L170.37 591.52L170.37 573.98L171.77 573.98L171.77 568.01L184.43 568.01L184.43 632.4L185.33 597.31L185.83 597.31L185.83 585.55L187.42 585.55L187.42 579.76L199.9 579.76L199.9 573.98L202 573.98L202 632.4L202.71 632.4L202.71 591.52L204.29 591.52L204.29 579.76L205.7 579.76L205.7 573.98L206.75 573.98L206.75 568.01L219.58 568.01L219.58 632.4L220.48 585.55L220.81 585.55L220.81 556.43L222.57 556.43L222.57 550.46L224.5 550.46L224.5 544.67L237.16 544.67L237.16 632.4L238.06 585.55L238.21 585.55L238.21 579.76L239.27 579.76L239.27 573.98L242.43 573.98L242.43 568.01L254.73 568.01L254.73 632.4L255.63 597.31L257.02 597.31L257.02 591.52L258.07 591.52L258.07 585.55L260.18 585.55L260.18 579.76L262.29 579.76L262.29 573.98L272.31 573.98L272.31 632.4L273.21 609.07L273.72 609.07L273.72 585.55L282.15 585.55L282.15 579.76L283.73 579.76L283.73 573.98L284.61 573.98L284.61 568.01L286.02 568.01L286.02 562.22L289.89 562.22L289.89 632.4L290.79 620.64L291.64 620.64L291.64 597.31L292.7 597.31L292.7 585.55L294.63 585.55L294.63 573.98L296.74 573.98L296.74 568.01L304.83 568.01L304.83 562.22L307.46 562.22L307.46 632.4L308.36 591.52L309.04 591.52L309.04 579.76L309.92 579.76L309.92 568.01L310.8 568.01L310.8 562.22L325.04 562.22L325.04 632.4L325.94 597.31L327.32 597.31L327.32 585.55L328.38 585.55L328.38 579.76L329.78 579.76L329.78 573.98L341.56 573.98L341.56 568.01L342.62 568.01L342.62 632.4L343.51 597.31L344.02 597.31L344.02 585.55L345.08 585.55L345.08 573.98L346.66 573.98L346.66 568.01L347.89 568.01L347.89 556.43L355.62 556.43L355.62 544.67L360.19 544.67L360.19 632.4L361.09 614.86L361.25 614.86L361.25 585.55L362.83 585.55L362.83 579.76L363.88 579.76L363.88 573.98L365.64 573.98L365.64 568.01L367.57 568.01L367.57 556.43L371.97 556.43L371.97 550.46L377.77 550.46L377.77 632.4L378.67 597.31L379.17 597.31L379.17 585.55L381.28 585.55L381.28 568.01L383.57 568.01L383.57 562.22L391.83 562.22L391.83 556.43L393.06 556.43L393.06 538.89L395.34 538.89L395.34 632.4L396.24 556.43L397.1 556.43L397.1 538.89L399.74 538.89L399.74 532.92L412.92 532.92L412.92 632.4L413.82 573.98L416.44 573.98L416.44 556.43L430.5 556.43L430.5 632.4L430.5 556.43L440.1 632.4L440.69 632.4L440.69 603.1L443.15 603.1L443.15 591.52L445.79 591.52L445.79 585.55L448.07 585.55L448.07 632.4L448.97 609.07L451.59 609.07L451.59 591.52L453.87 591.52L453.87 579.76L465.65 579.76L465.65 632.4L466.55 603.1L469.16 603.1L469.16 597.31L472.33 597.31L472.33 585.55L473.73 585.55L473.73 573.98L475.32 573.98L475.32 568.01L477.07 568.01L477.07 562.22L480.59 562.22L480.59 550.46L483.23 550.46L483.23 632.4L484.12 597.31L484.98 597.31L484.98 573.98L487.09 573.98L487.09 568.01L488.67 568.01L488.67 562.22L491.31 562.22L491.31 556.43L494.12 556.43L494.12 550.46L499.57 550.46L499.57 538.89L500.8 538.89L500.8 632.4L501.7 556.43L502.56 556.43L502.56 544.67L506.6 544.67L506.6 538.89L513.1 538.89L513.1 532.92L518.38 532.92L518.38 632.4L519.28 579.76L520.14 579.76L520.14 568.01L521.89 568.01L521.89 556.43L535.95 556.43L535.95 632.4L536.85 591.52L537.71 591.52L537.71 573.98L539.47 573.98L539.47 568.01L549.14 568.01L549.14 562.22L550.89 562.22L550.89 556.43L552.3 556.43L552.3 550.46L553.53 550.46L553.53 632.4L554.43 585.55L554.94 585.55L554.94 573.98L571.11 573.98L571.11 573.98L577.01 632.4L577.43 632.4L577.43 614.86L579.54 614.86L579.54 603.1L582.18 603.1L582.18 591.52L588.68 591.52L588.68 632.4L589.58 597.31L595.19 597.31L595.19 591.52L598.35 591.52L598.35 585.55L606.26 585.55L606.26 632.4L607.16 614.86L608.02 614.86L608.02 603.1L609.77 603.1L609.77 591.52L615.93 591.52L615.93 585.55L623.84 585.55L623.84 632.4L624.74 614.86L626.47 614.86L626.47 609.07L627.7 609.07L627.7 597.31L630.87 597.31L630.87 585.55L633.5 585.55L633.5 579.76L641.41 579.76L641.41 632.4L642.31 620.64L643.17 620.64L643.17 609.07L644.57 609.07L644.57 603.1L646.16 603.1L646.16 597.31L648.44 597.31L648.44 591.52L653.71 591.52L653.71 585.55L654.59 585.55L654.59 579.76L655.47 579.76L655.47 573.98L656.7 573.98L656.7 568.01L658.99 568.01L658.99 632.4L659.89 620.64L661.1 620.64L661.1 585.55L666.02 585.55L666.02 579.76L668.13 579.76L668.13 573.98L673.05 573.98L673.05 568.01L676.56 568.01L676.56 632.4L677.46 609.07L678.32 609.07L678.32 591.52L680.43 591.52L680.43 585.55L682.36 585.55L682.36 573.98L683.95 573.98L683.95 568.01L694.14 568.01L694.14 632.4L695.04 609.07L696.25 609.07L696.25 597.31L698.01 597.31L698.01 585.55L699.76 585.55L699.76 579.76L702.93 579.76L702.93 573.98L706.79 573.98L706.79 568.01L711.72 568.01L711.72 632.4L712.62 620.64L713.12 620.64L713.12 597.31L715.23 597.31L715.23 591.52L717.34 591.52L717.34 585.55L719.45 585.55L719.45 579.76L721.38 579.76L721.38 573.98L723.14 573.98L723.14 568.01L729.29 568.01L729.29 632.4L730.19 609.07L731.05 609.07L731.05 603.1L732.28 603.1L732.28 597.31L736.67 597.31L736.67 585.55L746.87 585.55L746.87 632.4L747.77 603.1L748.63 603.1L748.63 597.31L757.77 597.31L757.77 591.52L764.45 591.52L764.45 632.4L765.35 626.61L766.73 626.61L766.73 609.07L768.14 609.07L768.14 603.1L769.54 603.1L769.54 591.52L770.95 591.52L770.95 585.55L781.32 585.55L783.78 632.4L787.65 632.4L787.65 579.76L789.75 579.76L789.75 562.22L791.86 562.22L791.86 556.43L799.6 556.43L799.6 632.4L800.5 620.64L801.36 620.64L801.36 614.86L803.11 614.86L803.11 609.07L805.4 609.07L805.4 603.1L807.16 603.1L807.16 597.31L808.39 597.31L808.39 591.52L815.94 591.52L818.76 632.4L819.63 632.4L819.63 591.52L823.85 591.52L823.85 573.98L824.73 573.98L824.73 562.22L834.75 562.22L834.75 632.4L835.65 632.4L836.51 632.4L836.51 626.61L840.02 626.61L840.02 620.64L842.66 620.64L842.66 614.86L847.05 614.86L847.05 609.07L848.46 609.07L848.46 603.1L852.33 603.1L852.33 632.4L853.23 632.4L855.84 632.4L855.84 626.61L857.95 626.61L857.95 614.86L861.11 614.86L861.11 609.07L862.52 609.07L862.52 603.1L864.28 603.1L864.28 597.31L865.51 597.31L865.51 591.52L869.9 591.52L869.9 632.4L870.8 632.4L872.01 632.4L872.01 620.64L873.77 620.64L873.77 614.86L875.7 614.86L875.7 609.07L887.48 609.07L887.48 632.4L888.38 614.86L893.63 614.86L893.63 603.1L895.74 603.1L895.74 597.31L905.06 597.31L905.06 632.4L905.96 632.4L907.16 632.4L907.16 626.61L908.57 626.61L908.57 620.64L910.68 620.64L910.68 609.07L912.09 609.07L912.09 603.1L915.6 603.1L915.6 597.31L922.63 597.31L922.63 632.4L923.53 609.07L925.79 609.07L925.79 591.52L930.54 591.52L930.54 585.55L940.21 585.55L940.21 632.4L941.11 623.63L941.97 623.63L941.97 609.07L943.37 609.07L943.37 603.1L944.95 603.1L944.95 597.31L957.78 597.31L957.78 632.4L958.68 632.4L959.89 632.4L959.89 614.86L963.06 614.86L963.06 609.07L965.69 609.07L965.69 600.29L967.63 600.29L967.63 591.52L975.36 591.52L975.36 632.4L976.26 632.4L977.47 632.4L977.47 626.61L978.88 626.61L978.88 591.52L986.43 591.52L986.43 585.55L992.94 585.55L992.94 632.4L993.84 632.4L995.57 632.4L995.57 626.61L999.09 626.61L999.09 609.07L1002.08 609.07L1002.08 603.1L1004.89 603.1L1004.89 597.31L1007 597.31L1007 591.52L1010.51 591.52L1010.51 632.4L1011.41 632.4L1012.62 632.4L1012.62 626.61L1013.68 626.61L1013.68 614.86L1016.84 614.86L1016.84 609.07L1018.25 609.07L1018.25 603.1L1019.65 603.1L1019.65 597.31L1027.21 597.31L1027.21 573.98L1028.09 573.98L1028.09 632.4L1028.99 609.07L1029.49 609.07L1029.49 597.31L1030.37 597.31L1030.37 591.52L1031.6 591.52L1031.6 585.55L1034.24 585.55L1034.24 579.76L1038.63 579.76L1038.63 573.98L1045.67 573.98L1045.67 632.4L1046.57 626.61L1047.42 626.61L1047.42 620.64L1050.41 620.64L1050.41 614.86L1052.34 614.86L1052.34 609.07L1057.62 609.07L1057.62 603.1L1063.24 603.1L1063.24 632.4L1064.14 603.1L1065.88 603.1L1065.88 597.31L1067.64 597.31L1067.64 591.52L1068.51 591.52L1068.51 585.55L1069.04 585.55L1069.04 579.76L1069.39 579.76" stroke="#93cf3c" stroke-width="0.9" stroke-opacity="0.92" fill="none" stroke-linejoin="round"/><path d="M222.57 556.43L222.57 550.46M222.57 550.46L224.5 550.46M224.5 550.46L224.5 544.67M224.5 544.67L237.16 544.67M355.62 556.43L355.62 544.67M355.62 544.67L360.19 544.67M371.97 556.43L371.97 550.46M371.97 550.46L377.77 550.46M393.06 556.43L393.06 538.89M393.06 538.89L395.34 538.89M397.1 556.43L397.1 538.89M397.1 538.89L399.74 538.89M399.74 538.89L399.74 532.92M399.74 532.92L412.92 532.92M480.59 550.46L483.23 550.46M494.12 556.43L494.12 550.46M494.12 550.46L499.57 550.46M499.57 550.46L499.57 538.89M499.57 538.89L500.8 538.89M502.56 556.43L502.56 544.67M502.56 544.67L506.6 544.67M506.6 544.67L506.6 538.89M506.6 538.89L513.1 538.89M513.1 538.89L513.1 532.92M513.1 532.92L518.38 532.92M552.3 556.43L552.3 550.46M552.3 550.46L553.53 550.46" stroke="#e6c800" stroke-width="1.1" fill="none" stroke-linecap="square"/>
<path d="M131.85 568.01H149.28V573.98H166.85V591.52H184.43V597.31H202V603.1H219.58V591.52H237.16V573.98H254.73V597.31H272.31V597.31H289.89V579.76H307.46V568.01H325.04V585.55H342.62V556.43H360.19V573.98H377.77V527.13H395.34V532.92H412.92V550.46H430.5V579.76H448.07V579.76H465.65V585.55H483.23V550.46H500.8V544.67H518.38V538.89H535.95V562.22H553.53V573.98H571.11V556.43H588.68V568.01H606.26V585.55H623.84V609.07H641.41V591.52H658.99V579.76H676.56V556.43H694.14V568.01H711.72V585.55H729.29V603.1H746.87V591.52H764.45V620.64H782.02V609.07H799.6V585.55H817.17V591.52H834.75V603.1H852.33V597.31H869.9V620.64H887.48V609.07H905.06V591.52H922.63V609.07H940.21V597.31H957.78V579.76H975.36V579.76H992.94V591.52H1010.51V579.76H1028.09V591.52H1045.67V609.07H1063.24" stroke="#00dede" stroke-width="1.12" fill="none" stroke-linejoin="miter"/>
<path d="M132.51 753.35L133.77 752.42L135.03 753.07L136.29 752.3L137.33 752.86L138.38 755.59L139.43 756.49L140.48 756.45L141.53 757.12L142.57 760.39L143.62 762.78L144.67 758.57L145.72 755.53L146.76 751.26L147.81 752.37L148.86 755.76L149.91 756.49L150.96 756.99L152 759.64L153.05 755.78L154.1 751.11L155.15 747.06L156.19 746.26L157.24 743.6L158.29 742.87L159.34 742.9L160.39 740.64L161.43 740.78L162.48 740.6L163.53 738.83L164.58 738.68L165.62 739.06L166.67 737.98L167.72 738.68L168.77 735.71L169.82 732.4L170.65 731.32L171.49 731.35L172.23 736.2L172.96 740.78L174.01 745.09L175.05 750.21L176.1 748.66L177.15 746.02L178.2 744.88L179.25 746.16L180.29 744.97L181.55 744.57L182.81 745.79L184.07 744.97L184.8 741.44L185.53 738.68L186.58 737.67L187.63 735.54L188.68 736.22L189.72 738.68L190.77 740.35L191.82 739.25L192.87 740.78L193.39 740.6L193.91 739.1L194.96 738.31L196.01 740.02L197.06 738.37L198.11 740.08L199.15 738.11L200.2 740.09L201.25 739.1L201.56 734.43L201.88 730.3L202.61 733.62L203.34 736.59L204.39 734.57L205.44 734.49L206.49 734.61L207.54 730.8L208.58 731.35L209.63 732.13L210.68 730.16L211.73 731.35L212.77 728.91L213.82 726.11L214.35 723.92L214.87 722.34L215.92 725.47L216.97 728.2L218.01 729.91L219.06 732.55L220.11 734.49L220.74 732.15L221.37 730.3L221.58 716.53L221.79 702.01L221.99 715.97L222.2 730.72L223.25 734.44L224.3 737.63L225.03 735.95L225.77 738.68L226.61 733.86L227.44 728.2L227.97 725.27L228.49 722.97L229.02 726.87L229.54 730.3L230.59 730.35L231.63 732.4L232.68 734.72L233.73 733.44L234.78 730.67L235.83 728.2L236.87 727.84L237.92 724.01L238.65 721.71L239.39 719.82L240.02 716.35L240.65 712.49L241.06 716.87L241.48 721.92L242.32 715.89L243.16 709.34L243.68 713.38L244.21 717.73L245.26 721.05L246.3 724.01L247.35 726.77L248.4 730.3L249.45 727.94L250.49 725.06L251.54 724.57L252.59 726.11L253.85 729.06L255.1 731.35L256.47 728.07L257.83 725.06L258.88 723.96L259.92 720.7L260.97 719.82L262.02 719.86L263.07 716.82L264.12 716.68L265.16 719.68L266.21 716.86L267.26 718.77L268.31 719.48L269.35 715.28L270.4 715.63L271.45 719.48L272.5 718.77L273.55 717.02L274.59 718.12L275.64 716.68L276.69 715.64L277.74 719.88L278.78 718.77L280.04 718.31L281.3 721.92L282.66 718.94L284.02 715.63L285.39 711.77L286.75 708.3L287.48 712.77L288.21 716.68L289.26 714.36L290.31 712.49L291.36 712.34L292.41 709.48L293.45 709.34L294.5 714.73L295.55 719.82L296.39 720.01L297.23 722.97L298.27 718.95L299.32 714.58L300.58 715.77L301.84 717.73L303.09 722.08L304.35 726.11L305.19 727.85L306.03 730.3L307.07 726.45L308.12 721.92L309.38 719.05L310.64 716.68L311.68 720.73L312.73 724.01L314.09 729.1L315.46 734.49L316.5 735.2L317.55 733.35L318.6 734.49L319.12 732.55L319.65 730.3L320.7 729.81L321.74 731.06L322.79 729.65L323.84 730.72L324.89 729.23L325.93 730.3L326.46 729.11L326.98 727.16L328.03 725.17L329.08 727.82L330.13 726.11L331.17 724L332.22 726.56L333.27 722.93L334.32 724.01L335.36 726.87L336.41 729.25L337.46 727.42L338.51 728.48L339.56 726.34L340.6 726.11L341.65 731.67L342.7 736.59L343.75 743.54L344.79 751.26L345.84 756.79L346.89 761.73L347.94 764.64L348.99 768.33L350.03 771.16L351.08 769.18L352.13 769.58L353.18 768.02L354.22 765.87L355.27 766.63L356.32 764.88L357.37 762.42L358.42 762.18L359.46 759.64L360.51 760.39L361.56 763.63L362.61 764.88L363.65 763.31L364.7 763.55L365.75 761.73L367.11 758.74L368.47 756.49L369.73 759.32L370.99 760.69L372.04 761.62L373.08 764.01L374.13 764.88L375.18 765.96L376.23 769.48L377.28 770.12L378.32 770.81L379.37 773.26L379.69 773.33L380 772.21L381.05 769.92L382.1 770.21L383.14 768.02L384.19 768.01L385.24 769.45L386.29 769.07L387.33 767.42L388.38 768.71L389.43 766.97L390.48 766.15L391.53 768.05L392.57 768.02L393.41 763.01L394.25 758.59L394.67 755.7L395.09 752.3L395.72 756.74L396.35 761.73L397.08 768.41L397.81 774.31L398.86 774.63L399.91 776.4L400.96 774.61L402 772.21L403.05 772.26L404.1 775.4L405.15 775.35L406.19 774.07L407.24 777.59L408.29 776.4L409.02 778.33L409.76 780.59L410.6 777.18L411.43 773.26L412.48 773.31L413.53 775.35L414.58 779.38L415.62 779.55L416.67 776.58L417.72 774.31L418.45 767.15L419.19 759.64L420.03 757.22L420.86 755.45L421.91 759.12L422.96 758.59L424.01 757.58L425.05 760.69L426.1 758.32L427.15 755.45L428.2 748.91L429.25 743.18L430.29 736.59L431.34 731.08L432.39 726.55L433.44 720.47L434.48 715.63L435.53 711.33L436.58 705.75L437.63 701.65L438.68 696.77L439.93 692.85L441.19 690.03L442.45 686.29L443.7 686.76L444.96 688.39L446.01 690.3L447.06 689.79L448.11 692.07L449.15 692.58L450.2 694.58L451.25 697.66L452.3 699.91L452.82 697.66L453.34 695.72L454.39 698.62L455.44 698.87L456.49 697.11L457.54 701.38L458.58 698.23L459.63 699.91L460.68 701.52L461.73 699.52L462.77 702.67L463.82 700.96L464.87 700.75L465.92 703.08L466.97 702.4L468.01 704.11L469.06 706.88L470.11 708.57L471.16 711.39L472.2 713.54L473.25 715.26L474.3 718.06L475.35 719.82L476.4 723.06L477.44 726.94L478.49 730.3L479.54 734.95L480.59 740.44L481.63 744.97L482.68 751.06L483.73 757.54L484.78 762.02L485.83 765.92L486.87 768.34L487.92 771.76L488.97 774.31L490.02 772.37L491.06 773.99L492.11 771.16L493.16 770.77L494.21 775.63L495.26 775.35L496.3 774.25L497.35 778.74L498.4 778.5L499.45 774.54L500.49 771.16L501.02 776.16L501.54 780.59L502.59 778.53L503.64 781.81L504.69 780.59L505.73 780.56L506.78 783.97L507.83 783.74L509.09 783.29L510.34 786.88L511.71 784.11L513.07 780.59L514.12 777.61L515.16 775.4L516.21 772.21L517.05 769.67L517.89 768.02L518.62 771.93L519.35 775.35L520.4 772L521.45 774.37L522.5 771.16L523.55 770.53L524.59 774.32L525.64 774.31L526.69 774.66L527.74 778.49L528.78 777.45L529.83 774.83L530.88 776.67L531.93 773.26L532.98 769.45L534.02 771.84L535.07 768.02L536.12 767.72L537.17 771.16L538.21 774.07L539.26 771.25L540.31 774.31L541.36 775.81L542.41 770.74L543.45 772.21L544.82 769.27L546.18 765.51L547.44 766.08L548.69 769.07L549.74 771.94L550.79 769.63L551.84 771.16L552.88 772.15L553.93 769.08L554.98 771.16L556.03 772.04L557.07 767.54L558.12 769.07L559.38 766.69L560.64 763.83L562 758.43L563.36 753.35L564.41 748.64L565.46 743.16L566.5 738.68L567.55 734.36L568.6 728.98L569.65 724.88L570.7 719.82L571.74 714.79L572.79 710.47L573.84 705.15L574.89 701.79L575.93 699.06L576.98 695.72L578.03 693.91L579.08 694.39L580.13 692.58L581.17 691.11L582.22 692.15L583.27 690.48L584.32 689.85L585.36 693.15L586.41 691.53L587.46 691.72L588.51 695.66L589.56 695.72L590.6 694.38L591.65 699.18L592.7 696.22L593.75 698.87L594.79 701.62L595.84 699.07L596.89 702.47L597.94 702.01L598.99 702.23L600.03 707.56L601.08 707.25L602.13 706.54L603.18 709.59L604.22 706.58L605.27 708.3L606.32 710.82L607.37 712.49L608.42 708.46L609.46 705.15L609.99 708.72L610.51 711.44L611.56 709.39L612.61 711.48L613.65 709.34L614.7 709.82L615.75 712.49L616.59 715.83L617.43 718.77L618.68 715.92L619.94 713.54L620.99 715.27L622.04 713.24L623.08 715.63L624.13 716.19L625.18 711.66L626.23 712.49L627.28 713.34L628.32 708.14L629.37 709.34L629.69 710.36L630 708.3L631.05 705.22L632.1 707.04L633.14 704.11L634.19 703.69L635.24 706.2L636.29 705.69L637.33 701.52L638.38 700.96L639.43 704.87L640.48 708.3L641.53 705.22L642.57 705.15L643.62 707.52L644.67 709.04L645.72 711.44L646.76 711.81L647.81 706.37L648.86 707.25L649.91 708.35L650.96 706.2L652 705.31L653.05 710.2L654.1 710.39L655.15 713.21L656.19 716.68L657.24 713.33L658.29 709.34L659.34 711.51L660.39 714.51L661.43 716.68L662.48 718.91L663.53 722.01L664.58 724.01L665.62 728.05L666.67 732.4L667.72 737.5L668.77 741.83L669.82 739.88L670.86 740.1L671.91 738.26L672.96 738.48L674.01 741.09L675.05 740.78L676.1 739.61L677.15 740.58L678.2 738.5L679.25 738.68L680.29 739.95L681.34 738.55L682.39 739.73L683.44 740.05L684.48 738.3L685.53 738.26L686.58 739.13L687.63 738.33L688.68 739.73L689.72 740.65L690.77 740.05L691.82 741.41L692.87 741.32L693.91 739.06L694.96 740L696.01 738.68L697.06 736.74L698.11 736.1L699.15 734.07L700.2 734.04L701.25 738.18L702.3 737.63L703.34 735.46L704.39 738.97L705.44 736.59L706.49 733.31L707.54 736.08L708.58 733.44L709.63 733.73L710.68 737.3L711.73 736.59L712.77 733.44L713.82 732.81L714.87 736.07L715.92 738.68L716.97 735.35L718.01 732.66L719.06 729.25L719.79 731.66L720.53 734.49L721.89 735.44L723.25 732.81L724.61 728.29L725.98 728.2L726.71 726.36L727.44 724.01L728.49 722.16L729.54 725.03L730.59 722.97L731.63 720.75L732.68 723.65L733.73 720.96L734.78 723.54L735.83 721.5L736.87 719.19L737.92 720.75L738.97 718.15L740.02 716.77L741.06 717.99L742.11 716.68L743.16 715.5L744.21 717.33L745.26 716.14L746.3 717.38L747.35 716.68L747.88 719.93L748.4 724.01L749.13 727.04L749.87 729.25L751.23 727.27L752.59 726.11L753.64 725.92L754.69 724.15L755.73 724.01L756.78 724.33L757.83 721.68L758.88 721.92L759.92 722.56L760.97 721.17L762.02 722.34L763.07 721.89L764.12 718.22L765.16 717.73L766.21 719.43L767.26 718.77L768.31 720.87L769.35 722.5L770.4 721.82L771.45 724.49L772.5 725.06L773.55 723.58L774.59 724.11L775.64 721.65L776.69 721.92L777.74 722.63L778.78 720.52L779.83 721.85L780.88 720.14L781.93 720.45L782.98 721.3L784.02 720.05L785.07 721.42L786.12 719.29L787.17 721.19L788.21 720.45L788.95 716.71L789.68 713.54L790.31 708.83L790.94 703.48L791.36 710.87L791.78 718.77L793.14 720.44L794.5 719.82L795.55 719.98L796.6 721.99L797.64 721.92L798.69 720.45L799.74 721.86L800.79 719.73L801.84 719.82L802.88 719.76L803.93 717.84L804.98 718.72L806.03 716.67L807.07 717.58L808.12 716.68L809.17 715.75L810.22 718.07L811.27 716.42L812.31 718.49L813.36 716.54L814.41 717.73L815.46 719.28L816.5 718.41L817.55 720.05L818.6 719.78L819.65 720.87L820.61 721.31L821.58 719.94L822.54 721.82L823.5 719.72L824.47 720.87L824.89 716.41L825.31 711.44L826.67 710.25L828.03 710.39L829.08 711.27L830.13 708.95L831.17 709.76L831.7 715.24L832.22 719.82L833.27 718.9L834.32 719.87L835.36 718.15L836.41 717.19L837.46 718.69L838.51 716.88L839.56 717.98L840.6 715.93L841.65 716.68L842.7 717.19L843.75 714.83L844.79 715.75L845.84 713.73L846.89 714.81L847.94 713.95L848.99 712.85L850.03 714.67L851.08 712.89L852.13 714.26L853.18 712.63L854.22 714.59L855.27 713.54L856.32 712.21L857.37 713.17L858.42 710.56L859.46 711.6L860.51 709.76L861.56 709.96L862.61 711.95L863.65 711.49L864.7 713.17L865.75 713.54L866.8 712.72L867.85 713.35L868.89 711.74L869.94 712.96L870.99 711.86L872.04 710.99L873.08 712.15L874.13 709.71L875.18 710.98L876.23 709.76L877.28 708.68L878.32 709.5L879.37 708.3L879.69 707.17L880 708.3L881.05 708.88L882.1 707.25L883.14 709.04L884.19 707.08L885.24 708.72L886.29 707.09L887.33 708.34L888.38 707.25L889.43 705.95L890.48 707.54L891.53 705.16L892.57 707.68L893.62 705.15L894.67 703.44L895.72 707.96L896.76 704.92L897.81 706.83L898.86 707.8L899.91 705.51L900.96 709.28L902 707.25L903.05 704.61L904.1 706.37L905.15 702.61L906.19 704.11L907.24 707.02L908.29 703.87L909.34 706.2L910.39 706.14L911.43 702.79L912.48 705.54L913.53 703.06L914.58 702.01L915.62 703.76L916.67 702.01L917.72 701.66L918.77 703.53L919.82 701.33L920.86 703.48L921.91 704.88L922.96 701.22L924.01 702.85L925.05 701.38L926.1 701.61L927.15 704.11L928.2 701.48L929.25 698.45L930.29 700.44L931.34 703.06L932.39 702.09L933.44 698.87L934.48 700.54L935.53 703.2L936.58 705.15L937.63 703.15L938.68 704.96L939.72 700.91L940.77 701.38L941.82 703.11L942.87 701.88L943.91 704.11L944.96 705.51L946.01 702.65L947.06 705.97L948.11 705.15L949.15 702.39L950.2 704.83L951.25 700.65L952.3 700.96L953.34 701.2L954.39 698.36L955.44 700.25L956.49 698.87L957.54 697.37L958.58 700.21L959.63 696.64L960.68 697.19L961.73 699.84L962.77 697.08L963.82 698.45L964.87 697.23L965.92 693.8L966.97 692.58L968.01 694.76L969.06 690.73L970.11 693L971.16 695.63L972.2 697.82L973.25 696.22L974.3 698.36L975.35 696.77L976.4 696.11L977.44 700.05L978.49 699.91L979.54 700.22L980.59 705.15L981.63 705.15L982.68 704.37L983.73 706.76L984.78 706.2L985.83 703.45L986.87 701.38L987.92 704.03L988.97 702.5L990.02 704.11L991.06 705.98L992.11 703.03L993.16 705.57L994.21 706.69L995.26 702.75L996.3 706.26L997.35 703.48L998.4 702.09L999.45 704.07L1000.49 701.45L1001.54 702.01L1002.59 703.1L1003.64 698.28L1004.69 698.87L1005.87 699.57L1007.06 694.32L1008.25 694.68L1009.51 696.75L1010.76 694.52L1012.02 697.19L1013.07 698.53L1014.12 696.11L1015.16 697.82L1016.21 701.09L1017.26 700.96L1018.31 697.96L1019.35 695.72L1020.4 697.51L1021.45 695.22L1022.5 697.82L1023.55 699.26L1024.59 695.87L1025.64 698.29L1026.69 695.78L1027.74 697.19L1029.1 700.29L1030.46 703.06L1031.65 705.17L1032.84 708.33L1034.02 710.39L1035.07 709.99L1036.12 713.6L1037.17 713.12L1038.21 710.9L1039.26 713.66L1040.31 709.28L1041.36 711.02L1042.41 712.86L1043.45 708.81L1044.5 710.39L1045.55 712.69L1046.6 711.71L1047.64 713.54L1048.69 714.53L1049.74 710.91L1050.79 713L1051.84 710.39L1052.88 707.87L1053.93 710.9L1054.98 707.25L1056.03 707.25L1057.07 707.93L1058.12 704.44L1059.17 706.13L1060.22 704.11L1061.27 702.51L1062.31 705.16L1063.36 702.64L1064.41 699.85L1065.46 699.91L1066.5 702.32L1067.55 704.11L1068.6 705.32L1069.65 708.3" stroke="#c6c6c6" stroke-width="0.95" fill="none" stroke-linejoin="round"/>
<path d="M133.9 684.62H137.71V692.16H143.57V698.45H149.43V690.48H155.28V679.59H161.14V673.72H167V670.58H172.86V676.86H178.72V680.43H184.58V677.49H190.44V678.54H196.3V674.98H202.16V676.44H208.01V678.54H213.87V676.44H219.73V681.05H225.59V684.2H231.45V686.71H237.31V683.36H243.17V681.47H249.03V679.59H254.88V677.91H260.74V677.49H266.6V677.49H272.46V676.86H278.32V674.35H284.18V666.8H290.04V664.29H295.89V665.34H301.75V672.25H307.61V678.54H313.47V678.54H319.33V674.77H325.19V685.25H331.05V696.14H336.91V693H342.76V696.77H348.62V707.67H354.48V701.38H360.34V703.06H366.2V710.39H372.06V715.63H377.92V722.97H383.78V724.64H389.63V704.73H395.49V713.95H401.35V743.5H407.21V747.06H413.07V746.02H418.93V741.83H424.79V735.54H430.65V729.25H436.5V730.3H442.36V728.2H448.22V729.25H454.08V727.79H459.94V726.11H465.8V724.43H471.66V724.43H477.52V727.16H483.38V729.25H489.23V728.2H495.09V722.55H500.95V734.49H506.81V747.06H512.67V746.02H518.53V751.88H524.39V740.15H530.25V737.63H536.1V742.87H541.96V746.44H547.82V732.81H553.68V726.53H559.54V726.53H565.4V725.06H571.26V722.55H577.12V729.25H582.97V731.35H588.83V729.88H594.69V727.16H600.55V723.59H606.41V714.58H612.27V713.95H618.13V713.54H623.99V708.3H629.84V707.88H635.7V707.88H641.56V702.64H647.42V698.45H653.28V700.96H659.14V703.48H665V709.34H670.86V711.02H676.71V709.34H682.57V715H688.43V711.44H694.29V711.02H700.15V709.34H706.01V703.69H711.87V705.57H717.73V703.69H723.58V701.59H729.44V697.4H735.3V691.53H741.16V689.65H747.02V702.01H752.88V703.06H758.74V699.29H764.6V698.24H770.45V699.29H776.31V703.06H782.17V704.73H788.03V704.73H793.89V703.06H799.75V698.24H805.61V693H811.47V698.24H817.32V702.22H823.18V702.22H829.04V701.38H834.9V702.22H840.76V702.22H846.62V698.45H852.48V696.77H858.34V692.58H864.19V692.58H870.05V689.44H875.91V686.71H881.77V686.71H887.63V688.39H893.49V686.71H899.35V686.71H905.21V685.25H911.06V683.15H916.92V681.47H922.78V675.19H928.64V671.62H934.5V673.72H940.36V675.19H946.22V676.86H952.08V676.86H957.93V676.86H963.79V668.48H969.65V667.43H975.51V672.67H981.37V676.86H987.23V675.4H993.09V673.72H998.95V672.67H1004.8V672.67H1010.66V674.35H1016.52V668.48H1022.38V677.91H1028.24V689.44H1034.1V696.14H1039.96V691.53H1045.82V685.66H1051.67V683.78H1057.53V678.96H1063.39V674.35H1065.44" stroke="#d80000" stroke-width="1.2" fill="none"/>
<path d="M132.4 108.9V434.5M1116.5 108.9V434.5" stroke="#e4e4e4" stroke-width="1.3" fill="none"/>
<path d="M132.4 467.6V810.9M1116.5 467.6V810.9" stroke="#e4e4e4" stroke-width="1.3" fill="none"/>
<path d="M132.4 108.9H1116.5" stroke="#e4e4e4" stroke-width="1.0"/>
<path d="M132.4 190.4H1116.5" stroke="#e4e4e4" stroke-width="1.0"/>
<path d="M132.4 271.7H1116.5" stroke="#e4e4e4" stroke-width="1.0"/>
<path d="M132.4 353.4H1116.5" stroke="#e4e4e4" stroke-width="1.0"/>
<path d="M132.4 434.5H1116.5" stroke="#e4e4e4" stroke-width="1.0"/>
<path d="M132.4 467.6H1116.5" stroke="#e4e4e4" stroke-width="1.0"/>
<path d="M132.4 639H1116.5" stroke="#e4e4e4" stroke-width="1.0"/>
<path d="M132.4 810.9H1116.5" stroke="#e4e4e4" stroke-width="1.0"/>
<path d="M137.71 108.9V112.7M143.57 108.9V112.7M149.43 108.9V112.7M155.28 108.9V112.7M161.14 108.9V112.7M167 108.9V112.7M172.86 108.9V112.7M178.72 108.9V112.7M184.58 108.9V112.7M190.44 108.9V112.7M196.3 108.9V112.7M202.16 108.9V112.7M208.01 108.9V112.7M213.87 108.9V112.7M219.73 108.9V112.7M225.59 108.9V112.7M231.45 108.9V112.7M237.31 108.9V112.7M243.17 108.9V112.7M249.03 108.9V112.7M254.88 108.9V112.7M260.74 108.9V112.7M266.6 108.9V112.7M272.46 108.9V116.5M278.32 108.9V112.7M284.18 108.9V112.7M290.04 108.9V112.7M295.89 108.9V112.7M301.75 108.9V112.7M307.61 108.9V112.7M313.47 108.9V112.7M319.33 108.9V112.7M325.19 108.9V112.7M331.05 108.9V112.7M336.91 108.9V112.7M342.76 108.9V112.7M348.62 108.9V112.7M354.48 108.9V112.7M360.34 108.9V112.7M366.2 108.9V112.7M372.06 108.9V112.7M377.92 108.9V112.7M383.78 108.9V112.7M389.63 108.9V112.7M395.49 108.9V112.7M401.35 108.9V112.7M407.21 108.9V112.7M413.07 108.9V116.5M418.93 108.9V112.7M424.79 108.9V112.7M430.65 108.9V112.7M436.5 108.9V112.7M442.36 108.9V112.7M448.22 108.9V112.7M454.08 108.9V112.7M459.94 108.9V112.7M465.8 108.9V112.7M471.66 108.9V112.7M477.52 108.9V112.7M483.38 108.9V112.7M489.23 108.9V112.7M495.09 108.9V112.7M500.95 108.9V112.7M506.81 108.9V112.7M512.67 108.9V112.7M518.53 108.9V112.7M524.39 108.9V112.7M530.25 108.9V112.7M536.1 108.9V112.7M541.96 108.9V112.7M547.82 108.9V112.7M553.68 108.9V116.5M559.54 108.9V112.7M565.4 108.9V112.7M571.26 108.9V112.7M577.12 108.9V112.7M582.97 108.9V112.7M588.83 108.9V112.7M594.69 108.9V112.7M600.55 108.9V112.7M606.41 108.9V112.7M612.27 108.9V112.7M618.13 108.9V112.7M623.99 108.9V112.7M629.84 108.9V112.7M635.7 108.9V112.7M641.56 108.9V112.7M647.42 108.9V112.7M653.28 108.9V112.7M659.14 108.9V112.7M665 108.9V112.7M670.86 108.9V112.7M676.71 108.9V112.7M682.57 108.9V112.7M688.43 108.9V112.7M694.29 108.9V116.5M700.15 108.9V112.7M706.01 108.9V112.7M711.87 108.9V112.7M717.73 108.9V112.7M723.58 108.9V112.7M729.44 108.9V112.7M735.3 108.9V112.7M741.16 108.9V112.7M747.02 108.9V112.7M752.88 108.9V112.7M758.74 108.9V112.7M764.6 108.9V112.7M770.45 108.9V112.7M776.31 108.9V112.7M782.17 108.9V112.7M788.03 108.9V112.7M793.89 108.9V112.7M799.75 108.9V112.7M805.61 108.9V112.7M811.47 108.9V112.7M817.32 108.9V112.7M823.18 108.9V112.7M829.04 108.9V112.7M834.9 108.9V116.5M840.76 108.9V112.7M846.62 108.9V112.7M852.48 108.9V112.7M858.34 108.9V112.7M864.19 108.9V112.7M870.05 108.9V112.7M875.91 108.9V112.7M881.77 108.9V112.7M887.63 108.9V112.7M893.49 108.9V112.7M899.35 108.9V112.7M905.21 108.9V112.7M911.06 108.9V112.7M916.92 108.9V112.7M922.78 108.9V112.7M928.64 108.9V112.7M934.5 108.9V112.7M940.36 108.9V112.7M946.22 108.9V112.7M952.08 108.9V112.7M957.93 108.9V112.7M963.79 108.9V112.7M969.65 108.9V112.7M975.51 108.9V116.5M981.37 108.9V112.7M987.23 108.9V112.7M993.09 108.9V112.7M998.95 108.9V112.7M1004.8 108.9V112.7M1010.66 108.9V112.7M1016.52 108.9V112.7M1022.38 108.9V112.7M1028.24 108.9V112.7M1034.1 108.9V112.7M1039.96 108.9V112.7M1045.82 108.9V112.7M1051.67 108.9V112.7M1057.53 108.9V112.7M1063.39 108.9V112.7M1069.25 108.9V112.7M1075.11 108.9V112.7M1080.97 108.9V112.7M1086.83 108.9V112.7M1092.68 108.9V112.7M1098.54 108.9V112.7M1104.4 108.9V112.7M1110.26 108.9V112.7" stroke="#e4e4e4" stroke-width="1.05" fill="none"/>
<path d="M137.71 186.8V194.2M143.57 186.8V194.2M149.43 186.8V194.2M155.28 186.8V194.2M161.14 186.8V194.2M167 186.8V194.2M172.86 186.8V194.2M178.72 186.8V194.2M184.58 186.8V194.2M190.44 186.8V194.2M196.3 186.8V194.2M202.16 186.8V194.2M208.01 186.8V194.2M213.87 186.8V194.2M219.73 186.8V194.2M225.59 186.8V194.2M231.45 186.8V194.2M237.31 186.8V194.2M243.17 186.8V194.2M249.03 186.8V194.2M254.88 186.8V194.2M260.74 186.8V194.2M266.6 186.8V194.2M272.46 183V198M278.32 186.8V194.2M284.18 186.8V194.2M290.04 186.8V194.2M295.89 186.8V194.2M301.75 186.8V194.2M307.61 186.8V194.2M313.47 186.8V194.2M319.33 186.8V194.2M325.19 186.8V194.2M331.05 186.8V194.2M336.91 186.8V194.2M342.76 186.8V194.2M348.62 186.8V194.2M354.48 186.8V194.2M360.34 186.8V194.2M366.2 186.8V194.2M372.06 186.8V194.2M377.92 186.8V194.2M383.78 186.8V194.2M389.63 186.8V194.2M395.49 186.8V194.2M401.35 186.8V194.2M407.21 186.8V194.2M413.07 183V198M418.93 186.8V194.2M424.79 186.8V194.2M430.65 186.8V194.2M436.5 186.8V194.2M442.36 186.8V194.2M448.22 186.8V194.2M454.08 186.8V194.2M459.94 186.8V194.2M465.8 186.8V194.2M471.66 186.8V194.2M477.52 186.8V194.2M483.38 186.8V194.2M489.23 186.8V194.2M495.09 186.8V194.2M500.95 186.8V194.2M506.81 186.8V194.2M512.67 186.8V194.2M518.53 186.8V194.2M524.39 186.8V194.2M530.25 186.8V194.2M536.1 186.8V194.2M541.96 186.8V194.2M547.82 186.8V194.2M553.68 183V198M559.54 186.8V194.2M565.4 186.8V194.2M571.26 186.8V194.2M577.12 186.8V194.2M582.97 186.8V194.2M588.83 186.8V194.2M594.69 186.8V194.2M600.55 186.8V194.2M606.41 186.8V194.2M612.27 186.8V194.2M618.13 186.8V194.2M623.99 186.8V194.2M629.84 186.8V194.2M635.7 186.8V194.2M641.56 186.8V194.2M647.42 186.8V194.2M653.28 186.8V194.2M659.14 186.8V194.2M665 186.8V194.2M670.86 186.8V194.2M676.71 186.8V194.2M682.57 186.8V194.2M688.43 186.8V194.2M694.29 183V198M700.15 186.8V194.2M706.01 186.8V194.2M711.87 186.8V194.2M717.73 186.8V194.2M723.58 186.8V194.2M729.44 186.8V194.2M735.3 186.8V194.2M741.16 186.8V194.2M747.02 186.8V194.2M752.88 186.8V194.2M758.74 186.8V194.2M764.6 186.8V194.2M770.45 186.8V194.2M776.31 186.8V194.2M782.17 186.8V194.2M788.03 186.8V194.2M793.89 186.8V194.2M799.75 186.8V194.2M805.61 186.8V194.2M811.47 186.8V194.2M817.32 186.8V194.2M823.18 186.8V194.2M829.04 186.8V194.2M834.9 183V198M840.76 186.8V194.2M846.62 186.8V194.2M852.48 186.8V194.2M858.34 186.8V194.2M864.19 186.8V194.2M870.05 186.8V194.2M875.91 186.8V194.2M881.77 186.8V194.2M887.63 186.8V194.2M893.49 186.8V194.2M899.35 186.8V194.2M905.21 186.8V194.2M911.06 186.8V194.2M916.92 186.8V194.2M922.78 186.8V194.2M928.64 186.8V194.2M934.5 186.8V194.2M940.36 186.8V194.2M946.22 186.8V194.2M952.08 186.8V194.2M957.93 186.8V194.2M963.79 186.8V194.2M969.65 186.8V194.2M975.51 183V198M981.37 186.8V194.2M987.23 186.8V194.2M993.09 186.8V194.2M998.95 186.8V194.2M1004.8 186.8V194.2M1010.66 186.8V194.2M1016.52 186.8V194.2M1022.38 186.8V194.2M1028.24 186.8V194.2M1034.1 186.8V194.2M1039.96 186.8V194.2M1045.82 186.8V194.2M1051.67 186.8V194.2M1057.53 186.8V194.2M1063.39 186.8V194.2M1069.25 186.8V194.2M1075.11 186.8V194.2M1080.97 186.8V194.2M1086.83 186.8V194.2M1092.68 186.8V194.2M1098.54 186.8V194.2M1104.4 186.8V194.2M1110.26 186.8V194.2" stroke="#e4e4e4" stroke-width="1.05" fill="none"/>
<path d="M137.71 268.1V275.5M143.57 268.1V275.5M149.43 268.1V275.5M155.28 268.1V275.5M161.14 268.1V275.5M167 268.1V275.5M172.86 268.1V275.5M178.72 268.1V275.5M184.58 268.1V275.5M190.44 268.1V275.5M196.3 268.1V275.5M202.16 268.1V275.5M208.01 268.1V275.5M213.87 268.1V275.5M219.73 268.1V275.5M225.59 268.1V275.5M231.45 268.1V275.5M237.31 268.1V275.5M243.17 268.1V275.5M249.03 268.1V275.5M254.88 268.1V275.5M260.74 268.1V275.5M266.6 268.1V275.5M272.46 264.3V279.3M278.32 268.1V275.5M284.18 268.1V275.5M290.04 268.1V275.5M295.89 268.1V275.5M301.75 268.1V275.5M307.61 268.1V275.5M313.47 268.1V275.5M319.33 268.1V275.5M325.19 268.1V275.5M331.05 268.1V275.5M336.91 268.1V275.5M342.76 268.1V275.5M348.62 268.1V275.5M354.48 268.1V275.5M360.34 268.1V275.5M366.2 268.1V275.5M372.06 268.1V275.5M377.92 268.1V275.5M383.78 268.1V275.5M389.63 268.1V275.5M395.49 268.1V275.5M401.35 268.1V275.5M407.21 268.1V275.5M413.07 264.3V279.3M418.93 268.1V275.5M424.79 268.1V275.5M430.65 268.1V275.5M436.5 268.1V275.5M442.36 268.1V275.5M448.22 268.1V275.5M454.08 268.1V275.5M459.94 268.1V275.5M465.8 268.1V275.5M471.66 268.1V275.5M477.52 268.1V275.5M483.38 268.1V275.5M489.23 268.1V275.5M495.09 268.1V275.5M500.95 268.1V275.5M506.81 268.1V275.5M512.67 268.1V275.5M518.53 268.1V275.5M524.39 268.1V275.5M530.25 268.1V275.5M536.1 268.1V275.5M541.96 268.1V275.5M547.82 268.1V275.5M553.68 264.3V279.3M559.54 268.1V275.5M565.4 268.1V275.5M571.26 268.1V275.5M577.12 268.1V275.5M582.97 268.1V275.5M588.83 268.1V275.5M594.69 268.1V275.5M600.55 268.1V275.5M606.41 268.1V275.5M612.27 268.1V275.5M618.13 268.1V275.5M623.99 268.1V275.5M629.84 268.1V275.5M635.7 268.1V275.5M641.56 268.1V275.5M647.42 268.1V275.5M653.28 268.1V275.5M659.14 268.1V275.5M665 268.1V275.5M670.86 268.1V275.5M676.71 268.1V275.5M682.57 268.1V275.5M688.43 268.1V275.5M694.29 264.3V279.3M700.15 268.1V275.5M706.01 268.1V275.5M711.87 268.1V275.5M717.73 268.1V275.5M723.58 268.1V275.5M729.44 268.1V275.5M735.3 268.1V275.5M741.16 268.1V275.5M747.02 268.1V275.5M752.88 268.1V275.5M758.74 268.1V275.5M764.6 268.1V275.5M770.45 268.1V275.5M776.31 268.1V275.5M782.17 268.1V275.5M788.03 268.1V275.5M793.89 268.1V275.5M799.75 268.1V275.5M805.61 268.1V275.5M811.47 268.1V275.5M817.32 268.1V275.5M823.18 268.1V275.5M829.04 268.1V275.5M834.9 264.3V279.3M840.76 268.1V275.5M846.62 268.1V275.5M852.48 268.1V275.5M858.34 268.1V275.5M864.19 268.1V275.5M870.05 268.1V275.5M875.91 268.1V275.5M881.77 268.1V275.5M887.63 268.1V275.5M893.49 268.1V275.5M899.35 268.1V275.5M905.21 268.1V275.5M911.06 268.1V275.5M916.92 268.1V275.5M922.78 268.1V275.5M928.64 268.1V275.5M934.5 268.1V275.5M940.36 268.1V275.5M946.22 268.1V275.5M952.08 268.1V275.5M957.93 268.1V275.5M963.79 268.1V275.5M969.65 268.1V275.5M975.51 264.3V279.3M981.37 268.1V275.5M987.23 268.1V275.5M993.09 268.1V275.5M998.95 268.1V275.5M1004.8 268.1V275.5M1010.66 268.1V275.5M1016.52 268.1V275.5M1022.38 268.1V275.5M1028.24 268.1V275.5M1034.1 268.1V275.5M1039.96 268.1V275.5M1045.82 268.1V275.5M1051.67 268.1V275.5M1057.53 268.1V275.5M1063.39 268.1V275.5M1069.25 268.1V275.5M1075.11 268.1V275.5M1080.97 268.1V275.5M1086.83 268.1V275.5M1092.68 268.1V275.5M1098.54 268.1V275.5M1104.4 268.1V275.5M1110.26 268.1V275.5" stroke="#e4e4e4" stroke-width="1.05" fill="none"/>
<path d="M137.71 349.8V357.2M143.57 349.8V357.2M149.43 349.8V357.2M155.28 349.8V357.2M161.14 349.8V357.2M167 349.8V357.2M172.86 349.8V357.2M178.72 349.8V357.2M184.58 349.8V357.2M190.44 349.8V357.2M196.3 349.8V357.2M202.16 349.8V357.2M208.01 349.8V357.2M213.87 349.8V357.2M219.73 349.8V357.2M225.59 349.8V357.2M231.45 349.8V357.2M237.31 349.8V357.2M243.17 349.8V357.2M249.03 349.8V357.2M254.88 349.8V357.2M260.74 349.8V357.2M266.6 349.8V357.2M272.46 346V361M278.32 349.8V357.2M284.18 349.8V357.2M290.04 349.8V357.2M295.89 349.8V357.2M301.75 349.8V357.2M307.61 349.8V357.2M313.47 349.8V357.2M319.33 349.8V357.2M325.19 349.8V357.2M331.05 349.8V357.2M336.91 349.8V357.2M342.76 349.8V357.2M348.62 349.8V357.2M354.48 349.8V357.2M360.34 349.8V357.2M366.2 349.8V357.2M372.06 349.8V357.2M377.92 349.8V357.2M383.78 349.8V357.2M389.63 349.8V357.2M395.49 349.8V357.2M401.35 349.8V357.2M407.21 349.8V357.2M413.07 346V361M418.93 349.8V357.2M424.79 349.8V357.2M430.65 349.8V357.2M436.5 349.8V357.2M442.36 349.8V357.2M448.22 349.8V357.2M454.08 349.8V357.2M459.94 349.8V357.2M465.8 349.8V357.2M471.66 349.8V357.2M477.52 349.8V357.2M483.38 349.8V357.2M489.23 349.8V357.2M495.09 349.8V357.2M500.95 349.8V357.2M506.81 349.8V357.2M512.67 349.8V357.2M518.53 349.8V357.2M524.39 349.8V357.2M530.25 349.8V357.2M536.1 349.8V357.2M541.96 349.8V357.2M547.82 349.8V357.2M553.68 346V361M559.54 349.8V357.2M565.4 349.8V357.2M571.26 349.8V357.2M577.12 349.8V357.2M582.97 349.8V357.2M588.83 349.8V357.2M594.69 349.8V357.2M600.55 349.8V357.2M606.41 349.8V357.2M612.27 349.8V357.2M618.13 349.8V357.2M623.99 349.8V357.2M629.84 349.8V357.2M635.7 349.8V357.2M641.56 349.8V357.2M647.42 349.8V357.2M653.28 349.8V357.2M659.14 349.8V357.2M665 349.8V357.2M670.86 349.8V357.2M676.71 349.8V357.2M682.57 349.8V357.2M688.43 349.8V357.2M694.29 346V361M700.15 349.8V357.2M706.01 349.8V357.2M711.87 349.8V357.2M717.73 349.8V357.2M723.58 349.8V357.2M729.44 349.8V357.2M735.3 349.8V357.2M741.16 349.8V357.2M747.02 349.8V357.2M752.88 349.8V357.2M758.74 349.8V357.2M764.6 349.8V357.2M770.45 349.8V357.2M776.31 349.8V357.2M782.17 349.8V357.2M788.03 349.8V357.2M793.89 349.8V357.2M799.75 349.8V357.2M805.61 349.8V357.2M811.47 349.8V357.2M817.32 349.8V357.2M823.18 349.8V357.2M829.04 349.8V357.2M834.9 346V361M840.76 349.8V357.2M846.62 349.8V357.2M852.48 349.8V357.2M858.34 349.8V357.2M864.19 349.8V357.2M870.05 349.8V357.2M875.91 349.8V357.2M881.77 349.8V357.2M887.63 349.8V357.2M893.49 349.8V357.2M899.35 349.8V357.2M905.21 349.8V357.2M911.06 349.8V357.2M916.92 349.8V357.2M922.78 349.8V357.2M928.64 349.8V357.2M934.5 349.8V357.2M940.36 349.8V357.2M946.22 349.8V357.2M952.08 349.8V357.2M957.93 349.8V357.2M963.79 349.8V357.2M969.65 349.8V357.2M975.51 346V361M981.37 349.8V357.2M987.23 349.8V357.2M993.09 349.8V357.2M998.95 349.8V357.2M1004.8 349.8V357.2M1010.66 349.8V357.2M1016.52 349.8V357.2M1022.38 349.8V357.2M1028.24 349.8V357.2M1034.1 349.8V357.2M1039.96 349.8V357.2M1045.82 349.8V357.2M1051.67 349.8V357.2M1057.53 349.8V357.2M1063.39 349.8V357.2M1069.25 349.8V357.2M1075.11 349.8V357.2M1080.97 349.8V357.2M1086.83 349.8V357.2M1092.68 349.8V357.2M1098.54 349.8V357.2M1104.4 349.8V357.2M1110.26 349.8V357.2" stroke="#e4e4e4" stroke-width="1.05" fill="none"/>
<path d="M137.71 430.9V434.5M143.57 430.9V434.5M149.43 430.9V434.5M155.28 430.9V434.5M161.14 430.9V434.5M167 430.9V434.5M172.86 430.9V434.5M178.72 430.9V434.5M184.58 430.9V434.5M190.44 430.9V434.5M196.3 430.9V434.5M202.16 430.9V434.5M208.01 430.9V434.5M213.87 430.9V434.5M219.73 430.9V434.5M225.59 430.9V434.5M231.45 430.9V434.5M237.31 430.9V434.5M243.17 430.9V434.5M249.03 430.9V434.5M254.88 430.9V434.5M260.74 430.9V434.5M266.6 430.9V434.5M272.46 427.1V434.5M278.32 430.9V434.5M284.18 430.9V434.5M290.04 430.9V434.5M295.89 430.9V434.5M301.75 430.9V434.5M307.61 430.9V434.5M313.47 430.9V434.5M319.33 430.9V434.5M325.19 430.9V434.5M331.05 430.9V434.5M336.91 430.9V434.5M342.76 430.9V434.5M348.62 430.9V434.5M354.48 430.9V434.5M360.34 430.9V434.5M366.2 430.9V434.5M372.06 430.9V434.5M377.92 430.9V434.5M383.78 430.9V434.5M389.63 430.9V434.5M395.49 430.9V434.5M401.35 430.9V434.5M407.21 430.9V434.5M413.07 427.1V434.5M418.93 430.9V434.5M424.79 430.9V434.5M430.65 430.9V434.5M436.5 430.9V434.5M442.36 430.9V434.5M448.22 430.9V434.5M454.08 430.9V434.5M459.94 430.9V434.5M465.8 430.9V434.5M471.66 430.9V434.5M477.52 430.9V434.5M483.38 430.9V434.5M489.23 430.9V434.5M495.09 430.9V434.5M500.95 430.9V434.5M506.81 430.9V434.5M512.67 430.9V434.5M518.53 430.9V434.5M524.39 430.9V434.5M530.25 430.9V434.5M536.1 430.9V434.5M541.96 430.9V434.5M547.82 430.9V434.5M553.68 427.1V434.5M559.54 430.9V434.5M565.4 430.9V434.5M571.26 430.9V434.5M577.12 430.9V434.5M582.97 430.9V434.5M588.83 430.9V434.5M594.69 430.9V434.5M600.55 430.9V434.5M606.41 430.9V434.5M612.27 430.9V434.5M618.13 430.9V434.5M623.99 430.9V434.5M629.84 430.9V434.5M635.7 430.9V434.5M641.56 430.9V434.5M647.42 430.9V434.5M653.28 430.9V434.5M659.14 430.9V434.5M665 430.9V434.5M670.86 430.9V434.5M676.71 430.9V434.5M682.57 430.9V434.5M688.43 430.9V434.5M694.29 427.1V434.5M700.15 430.9V434.5M706.01 430.9V434.5M711.87 430.9V434.5M717.73 430.9V434.5M723.58 430.9V434.5M729.44 430.9V434.5M735.3 430.9V434.5M741.16 430.9V434.5M747.02 430.9V434.5M752.88 430.9V434.5M758.74 430.9V434.5M764.6 430.9V434.5M770.45 430.9V434.5M776.31 430.9V434.5M782.17 430.9V434.5M788.03 430.9V434.5M793.89 430.9V434.5M799.75 430.9V434.5M805.61 430.9V434.5M811.47 430.9V434.5M817.32 430.9V434.5M823.18 430.9V434.5M829.04 430.9V434.5M834.9 427.1V434.5M840.76 430.9V434.5M846.62 430.9V434.5M852.48 430.9V434.5M858.34 430.9V434.5M864.19 430.9V434.5M870.05 430.9V434.5M875.91 430.9V434.5M881.77 430.9V434.5M887.63 430.9V434.5M893.49 430.9V434.5M899.35 430.9V434.5M905.21 430.9V434.5M911.06 430.9V434.5M916.92 430.9V434.5M922.78 430.9V434.5M928.64 430.9V434.5M934.5 430.9V434.5M940.36 430.9V434.5M946.22 430.9V434.5M952.08 430.9V434.5M957.93 430.9V434.5M963.79 430.9V434.5M969.65 430.9V434.5M975.51 427.1V434.5M981.37 430.9V434.5M987.23 430.9V434.5M993.09 430.9V434.5M998.95 430.9V434.5M1004.8 430.9V434.5M1010.66 430.9V434.5M1016.52 430.9V434.5M1022.38 430.9V434.5M1028.24 430.9V434.5M1034.1 430.9V434.5M1039.96 430.9V434.5M1045.82 430.9V434.5M1051.67 430.9V434.5M1057.53 430.9V434.5M1063.39 430.9V434.5M1069.25 430.9V434.5M1075.11 430.9V434.5M1080.97 430.9V434.5M1086.83 430.9V434.5M1092.68 430.9V434.5M1098.54 430.9V434.5M1104.4 430.9V434.5M1110.26 430.9V434.5" stroke="#e4e4e4" stroke-width="1.05" fill="none"/>
<path d="M137.71 467.6V471.4M143.57 467.6V471.4M149.43 467.6V471.4M155.28 467.6V471.4M161.14 467.6V471.4M167 467.6V471.4M172.86 467.6V471.4M178.72 467.6V471.4M184.58 467.6V471.4M190.44 467.6V471.4M196.3 467.6V471.4M202.16 467.6V471.4M208.01 467.6V471.4M213.87 467.6V471.4M219.73 467.6V471.4M225.59 467.6V471.4M231.45 467.6V471.4M237.31 467.6V471.4M243.17 467.6V471.4M249.03 467.6V471.4M254.88 467.6V471.4M260.74 467.6V471.4M266.6 467.6V471.4M272.46 467.6V475.2M278.32 467.6V471.4M284.18 467.6V471.4M290.04 467.6V471.4M295.89 467.6V471.4M301.75 467.6V471.4M307.61 467.6V471.4M313.47 467.6V471.4M319.33 467.6V471.4M325.19 467.6V471.4M331.05 467.6V471.4M336.91 467.6V471.4M342.76 467.6V471.4M348.62 467.6V471.4M354.48 467.6V471.4M360.34 467.6V471.4M366.2 467.6V471.4M372.06 467.6V471.4M377.92 467.6V471.4M383.78 467.6V471.4M389.63 467.6V471.4M395.49 467.6V471.4M401.35 467.6V471.4M407.21 467.6V471.4M413.07 467.6V475.2M418.93 467.6V471.4M424.79 467.6V471.4M430.65 467.6V471.4M436.5 467.6V471.4M442.36 467.6V471.4M448.22 467.6V471.4M454.08 467.6V471.4M459.94 467.6V471.4M465.8 467.6V471.4M471.66 467.6V471.4M477.52 467.6V471.4M483.38 467.6V471.4M489.23 467.6V471.4M495.09 467.6V471.4M500.95 467.6V471.4M506.81 467.6V471.4M512.67 467.6V471.4M518.53 467.6V471.4M524.39 467.6V471.4M530.25 467.6V471.4M536.1 467.6V471.4M541.96 467.6V471.4M547.82 467.6V471.4M553.68 467.6V475.2M559.54 467.6V471.4M565.4 467.6V471.4M571.26 467.6V471.4M577.12 467.6V471.4M582.97 467.6V471.4M588.83 467.6V471.4M594.69 467.6V471.4M600.55 467.6V471.4M606.41 467.6V471.4M612.27 467.6V471.4M618.13 467.6V471.4M623.99 467.6V471.4M629.84 467.6V471.4M635.7 467.6V471.4M641.56 467.6V471.4M647.42 467.6V471.4M653.28 467.6V471.4M659.14 467.6V471.4M665 467.6V471.4M670.86 467.6V471.4M676.71 467.6V471.4M682.57 467.6V471.4M688.43 467.6V471.4M694.29 467.6V475.2M700.15 467.6V471.4M706.01 467.6V471.4M711.87 467.6V471.4M717.73 467.6V471.4M723.58 467.6V471.4M729.44 467.6V471.4M735.3 467.6V471.4M741.16 467.6V471.4M747.02 467.6V471.4M752.88 467.6V471.4M758.74 467.6V471.4M764.6 467.6V471.4M770.45 467.6V471.4M776.31 467.6V471.4M782.17 467.6V471.4M788.03 467.6V471.4M793.89 467.6V471.4M799.75 467.6V471.4M805.61 467.6V471.4M811.47 467.6V471.4M817.32 467.6V471.4M823.18 467.6V471.4M829.04 467.6V471.4M834.9 467.6V475.2M840.76 467.6V471.4M846.62 467.6V471.4M852.48 467.6V471.4M858.34 467.6V471.4M864.19 467.6V471.4M870.05 467.6V471.4M875.91 467.6V471.4M881.77 467.6V471.4M887.63 467.6V471.4M893.49 467.6V471.4M899.35 467.6V471.4M905.21 467.6V471.4M911.06 467.6V471.4M916.92 467.6V471.4M922.78 467.6V471.4M928.64 467.6V471.4M934.5 467.6V471.4M940.36 467.6V471.4M946.22 467.6V471.4M952.08 467.6V471.4M957.93 467.6V471.4M963.79 467.6V471.4M969.65 467.6V471.4M975.51 467.6V475.2M981.37 467.6V471.4M987.23 467.6V471.4M993.09 467.6V471.4M998.95 467.6V471.4M1004.8 467.6V471.4M1010.66 467.6V471.4M1016.52 467.6V471.4M1022.38 467.6V471.4M1028.24 467.6V471.4M1034.1 467.6V471.4M1039.96 467.6V471.4M1045.82 467.6V471.4M1051.67 467.6V471.4M1057.53 467.6V471.4M1063.39 467.6V471.4M1069.25 467.6V471.4M1075.11 467.6V471.4M1080.97 467.6V471.4M1086.83 467.6V471.4M1092.68 467.6V471.4M1098.54 467.6V471.4M1104.4 467.6V471.4M1110.26 467.6V471.4" stroke="#e4e4e4" stroke-width="1.05" fill="none"/>
<path d="M137.71 635.4V639M143.57 635.4V639M149.43 635.4V639M155.28 635.4V639M161.14 635.4V639M167 635.4V639M172.86 635.4V639M178.72 635.4V639M184.58 635.4V639M190.44 635.4V639M196.3 635.4V639M202.16 635.4V639M208.01 635.4V639M213.87 635.4V639M219.73 635.4V639M225.59 635.4V639M231.45 635.4V639M237.31 635.4V639M243.17 635.4V639M249.03 635.4V639M254.88 635.4V639M260.74 635.4V639M266.6 635.4V639M272.46 631.6V639M278.32 635.4V639M284.18 635.4V639M290.04 635.4V639M295.89 635.4V639M301.75 635.4V639M307.61 635.4V639M313.47 635.4V639M319.33 635.4V639M325.19 635.4V639M331.05 635.4V639M336.91 635.4V639M342.76 635.4V639M348.62 635.4V639M354.48 635.4V639M360.34 635.4V639M366.2 635.4V639M372.06 635.4V639M377.92 635.4V639M383.78 635.4V639M389.63 635.4V639M395.49 635.4V639M401.35 635.4V639M407.21 635.4V639M413.07 631.6V639M418.93 635.4V639M424.79 635.4V639M430.65 635.4V639M436.5 635.4V639M442.36 635.4V639M448.22 635.4V639M454.08 635.4V639M459.94 635.4V639M465.8 635.4V639M471.66 635.4V639M477.52 635.4V639M483.38 635.4V639M489.23 635.4V639M495.09 635.4V639M500.95 635.4V639M506.81 635.4V639M512.67 635.4V639M518.53 635.4V639M524.39 635.4V639M530.25 635.4V639M536.1 635.4V639M541.96 635.4V639M547.82 635.4V639M553.68 631.6V639M559.54 635.4V639M565.4 635.4V639M571.26 635.4V639M577.12 635.4V639M582.97 635.4V639M588.83 635.4V639M594.69 635.4V639M600.55 635.4V639M606.41 635.4V639M612.27 635.4V639M618.13 635.4V639M623.99 635.4V639M629.84 635.4V639M635.7 635.4V639M641.56 635.4V639M647.42 635.4V639M653.28 635.4V639M659.14 635.4V639M665 635.4V639M670.86 635.4V639M676.71 635.4V639M682.57 635.4V639M688.43 635.4V639M694.29 631.6V639M700.15 635.4V639M706.01 635.4V639M711.87 635.4V639M717.73 635.4V639M723.58 635.4V639M729.44 635.4V639M735.3 635.4V639M741.16 635.4V639M747.02 635.4V639M752.88 635.4V639M758.74 635.4V639M764.6 635.4V639M770.45 635.4V639M776.31 635.4V639M782.17 635.4V639M788.03 635.4V639M793.89 635.4V639M799.75 635.4V639M805.61 635.4V639M811.47 635.4V639M817.32 635.4V639M823.18 635.4V639M829.04 635.4V639M834.9 631.6V639M840.76 635.4V639M846.62 635.4V639M852.48 635.4V639M858.34 635.4V639M864.19 635.4V639M870.05 635.4V639M875.91 635.4V639M881.77 635.4V639M887.63 635.4V639M893.49 635.4V639M899.35 635.4V639M905.21 635.4V639M911.06 635.4V639M916.92 635.4V639M922.78 635.4V639M928.64 635.4V639M934.5 635.4V639M940.36 635.4V639M946.22 635.4V639M952.08 635.4V639M957.93 635.4V639M963.79 635.4V639M969.65 635.4V639M975.51 631.6V639M981.37 635.4V639M987.23 635.4V639M993.09 635.4V639M998.95 635.4V639M1004.8 635.4V639M1010.66 635.4V639M1016.52 635.4V639M1022.38 635.4V639M1028.24 635.4V639M1034.1 635.4V639M1039.96 635.4V639M1045.82 635.4V639M1051.67 635.4V639M1057.53 635.4V639M1063.39 635.4V639M1069.25 635.4V639M1075.11 635.4V639M1080.97 635.4V639M1086.83 635.4V639M1092.68 635.4V639M1098.54 635.4V639M1104.4 635.4V639M1110.26 635.4V639" stroke="#e4e4e4" stroke-width="1.05" fill="none"/>
<path d="M137.71 807.3V810.9M143.57 807.3V810.9M149.43 807.3V810.9M155.28 807.3V810.9M161.14 807.3V810.9M167 807.3V810.9M172.86 807.3V810.9M178.72 807.3V810.9M184.58 807.3V810.9M190.44 807.3V810.9M196.3 807.3V810.9M202.16 807.3V810.9M208.01 807.3V810.9M213.87 807.3V810.9M219.73 807.3V810.9M225.59 807.3V810.9M231.45 807.3V810.9M237.31 807.3V810.9M243.17 807.3V810.9M249.03 807.3V810.9M254.88 807.3V810.9M260.74 807.3V810.9M266.6 807.3V810.9M272.46 803.5V810.9M278.32 807.3V810.9M284.18 807.3V810.9M290.04 807.3V810.9M295.89 807.3V810.9M301.75 807.3V810.9M307.61 807.3V810.9M313.47 807.3V810.9M319.33 807.3V810.9M325.19 807.3V810.9M331.05 807.3V810.9M336.91 807.3V810.9M342.76 807.3V810.9M348.62 807.3V810.9M354.48 807.3V810.9M360.34 807.3V810.9M366.2 807.3V810.9M372.06 807.3V810.9M377.92 807.3V810.9M383.78 807.3V810.9M389.63 807.3V810.9M395.49 807.3V810.9M401.35 807.3V810.9M407.21 807.3V810.9M413.07 803.5V810.9M418.93 807.3V810.9M424.79 807.3V810.9M430.65 807.3V810.9M436.5 807.3V810.9M442.36 807.3V810.9M448.22 807.3V810.9M454.08 807.3V810.9M459.94 807.3V810.9M465.8 807.3V810.9M471.66 807.3V810.9M477.52 807.3V810.9M483.38 807.3V810.9M489.23 807.3V810.9M495.09 807.3V810.9M500.95 807.3V810.9M506.81 807.3V810.9M512.67 807.3V810.9M518.53 807.3V810.9M524.39 807.3V810.9M530.25 807.3V810.9M536.1 807.3V810.9M541.96 807.3V810.9M547.82 807.3V810.9M553.68 803.5V810.9M559.54 807.3V810.9M565.4 807.3V810.9M571.26 807.3V810.9M577.12 807.3V810.9M582.97 807.3V810.9M588.83 807.3V810.9M594.69 807.3V810.9M600.55 807.3V810.9M606.41 807.3V810.9M612.27 807.3V810.9M618.13 807.3V810.9M623.99 807.3V810.9M629.84 807.3V810.9M635.7 807.3V810.9M641.56 807.3V810.9M647.42 807.3V810.9M653.28 807.3V810.9M659.14 807.3V810.9M665 807.3V810.9M670.86 807.3V810.9M676.71 807.3V810.9M682.57 807.3V810.9M688.43 807.3V810.9M694.29 803.5V810.9M700.15 807.3V810.9M706.01 807.3V810.9M711.87 807.3V810.9M717.73 807.3V810.9M723.58 807.3V810.9M729.44 807.3V810.9M735.3 807.3V810.9M741.16 807.3V810.9M747.02 807.3V810.9M752.88 807.3V810.9M758.74 807.3V810.9M764.6 807.3V810.9M770.45 807.3V810.9M776.31 807.3V810.9M782.17 807.3V810.9M788.03 807.3V810.9M793.89 807.3V810.9M799.75 807.3V810.9M805.61 807.3V810.9M811.47 807.3V810.9M817.32 807.3V810.9M823.18 807.3V810.9M829.04 807.3V810.9M834.9 803.5V810.9M840.76 807.3V810.9M846.62 807.3V810.9M852.48 807.3V810.9M858.34 807.3V810.9M864.19 807.3V810.9M870.05 807.3V810.9M875.91 807.3V810.9M881.77 807.3V810.9M887.63 807.3V810.9M893.49 807.3V810.9M899.35 807.3V810.9M905.21 807.3V810.9M911.06 807.3V810.9M916.92 807.3V810.9M922.78 807.3V810.9M928.64 807.3V810.9M934.5 807.3V810.9M940.36 807.3V810.9M946.22 807.3V810.9M952.08 807.3V810.9M957.93 807.3V810.9M963.79 807.3V810.9M969.65 807.3V810.9M975.51 803.5V810.9M981.37 807.3V810.9M987.23 807.3V810.9M993.09 807.3V810.9M998.95 807.3V810.9M1004.8 807.3V810.9M1010.66 807.3V810.9M1016.52 807.3V810.9M1022.38 807.3V810.9M1028.24 807.3V810.9M1034.1 807.3V810.9M1039.96 807.3V810.9M1045.82 807.3V810.9M1051.67 807.3V810.9M1057.53 807.3V810.9M1063.39 807.3V810.9M1069.25 807.3V810.9M1075.11 807.3V810.9M1080.97 807.3V810.9M1086.83 807.3V810.9M1092.68 807.3V810.9M1098.54 807.3V810.9M1104.4 807.3V810.9M1110.26 807.3V810.9" stroke="#e4e4e4" stroke-width="1.05" fill="none"/>
<path d="M132.4 120.45h4.2M1116.5 120.45h-4.2M132.4 135.03h4.2M1116.5 135.03h-4.2M132.4 149.6h4.2M1116.5 149.6h-4.2M132.4 164.17h4.2M1116.5 164.17h-4.2M132.4 178.75h4.2M1116.5 178.75h-4.2M132.4 257.21h4.2M1116.5 257.21h-4.2M132.4 242.69h4.2M1116.5 242.69h-4.2M132.4 228.17h4.2M1116.5 228.17h-4.2M132.4 213.65h4.2M1116.5 213.65h-4.2M132.4 199.13h4.2M1116.5 199.13h-4.2M132.4 285.3h4.2M1116.5 285.3h-4.2M132.4 302.4h4.2M1116.5 302.4h-4.2M132.4 319.5h4.2M1116.5 319.5h-4.2M132.4 336.6h4.2M1116.5 336.6h-4.2M132.4 364.8h4.2M1116.5 364.8h-4.2M132.4 384.4h4.2M1116.5 384.4h-4.2M132.4 403.9h4.2M1116.5 403.9h-4.2M132.4 423.4h4.2M1116.5 423.4h-4.2M132.4 632.4h4.2M1116.5 632.4h-4.2M132.4 614.86h4.2M132.4 597.31h4.2M1116.5 597.31h-4.2M132.4 579.76h4.2M132.4 562.22h4.2M1116.5 562.22h-4.2M132.4 544.67h4.2M132.4 527.13h4.2M1116.5 527.13h-4.2M132.4 509.58h4.2M132.4 492.04h4.2M1116.5 492.04h-4.2M132.4 474.49h4.2M132.4 692.1h4.2M1116.5 692.1h-4.2M132.4 745.2h4.2M1116.5 745.2h-4.2M132.4 798.3h4.2M1116.5 798.3h-4.2" stroke="#e4e4e4" stroke-width="1.2" fill="none"/>
<text transform="translate(124.8 140.26) scale(1.067 1)" text-anchor="end" font-family="'DejaVu Sans','Liberation Sans',sans-serif" font-size="13.8" fill="#d9d9d9">10</text>
<text transform="translate(124.8 154.84) scale(1.067 1)" text-anchor="end" font-family="'DejaVu Sans','Liberation Sans',sans-serif" font-size="13.8" fill="#d9d9d9">0</text>
<text transform="translate(124.8 169.41) scale(1.067 1)" text-anchor="end" font-family="'DejaVu Sans','Liberation Sans',sans-serif" font-size="13.8" fill="#d9d9d9">-10</text>
<text transform="translate(124.8 262.45) scale(1.067 1)" text-anchor="end" font-family="'DejaVu Sans','Liberation Sans',sans-serif" font-size="13.8" fill="#d9d9d9">10</text>
<text transform="translate(124.8 247.93) scale(1.067 1)" text-anchor="end" font-family="'DejaVu Sans','Liberation Sans',sans-serif" font-size="13.8" fill="#d9d9d9">20</text>
<text transform="translate(124.8 233.41) scale(1.067 1)" text-anchor="end" font-family="'DejaVu Sans','Liberation Sans',sans-serif" font-size="13.8" fill="#d9d9d9">30</text>
<text transform="translate(124.8 218.89) scale(1.067 1)" text-anchor="end" font-family="'DejaVu Sans','Liberation Sans',sans-serif" font-size="13.8" fill="#d9d9d9">40</text>
<text transform="translate(124.8 204.37) scale(1.067 1)" text-anchor="end" font-family="'DejaVu Sans','Liberation Sans',sans-serif" font-size="13.8" fill="#d9d9d9">50</text>
<text transform="translate(124.8 307.64) scale(1.067 1)" text-anchor="end" font-family="'DejaVu Sans','Liberation Sans',sans-serif" font-size="13.8" fill="#d9d9d9">600</text>
<text transform="translate(124.8 324.74) scale(1.067 1)" text-anchor="end" font-family="'DejaVu Sans','Liberation Sans',sans-serif" font-size="13.8" fill="#d9d9d9">500</text>
<text transform="translate(124.8 371.8) scale(1.067 1)" text-anchor="end" font-family="'DejaVu Sans','Liberation Sans',sans-serif" font-size="13.8" fill="#d9d9d9">10<tspan dy="-5.6" font-size="9.7">7</tspan></text>
<text transform="translate(124.8 391.4) scale(1.067 1)" text-anchor="end" font-family="'DejaVu Sans','Liberation Sans',sans-serif" font-size="13.8" fill="#d9d9d9">10<tspan dy="-5.6" font-size="9.7">6</tspan></text>
<text transform="translate(124.8 410.9) scale(1.067 1)" text-anchor="end" font-family="'DejaVu Sans','Liberation Sans',sans-serif" font-size="13.8" fill="#d9d9d9">10<tspan dy="-5.6" font-size="9.7">5</tspan></text>
<text transform="translate(124.8 430.4) scale(1.067 1)" text-anchor="end" font-family="'DejaVu Sans','Liberation Sans',sans-serif" font-size="13.8" fill="#d9d9d9">10<tspan dy="-5.6" font-size="9.7">4</tspan></text>
<text transform="translate(124.8 637.64) scale(1.067 1)" text-anchor="end" font-family="'DejaVu Sans','Liberation Sans',sans-serif" font-size="13.8" fill="#d9d9d9">0</text>
<text transform="translate(124.8 620.09) scale(1.067 1)" text-anchor="end" font-family="'DejaVu Sans','Liberation Sans',sans-serif" font-size="13.8" fill="#d9d9d9">1</text>
<text transform="translate(124.8 602.55) scale(1.067 1)" text-anchor="end" font-family="'DejaVu Sans','Liberation Sans',sans-serif" font-size="13.8" fill="#d9d9d9">2</text>
<text transform="translate(124.8 585) scale(1.067 1)" text-anchor="end" font-family="'DejaVu Sans','Liberation Sans',sans-serif" font-size="13.8" fill="#d9d9d9">3</text>
<text transform="translate(124.8 567.46) scale(1.067 1)" text-anchor="end" font-family="'DejaVu Sans','Liberation Sans',sans-serif" font-size="13.8" fill="#d9d9d9">4</text>
<text transform="translate(124.8 549.91) scale(1.067 1)" text-anchor="end" font-family="'DejaVu Sans','Liberation Sans',sans-serif" font-size="13.8" fill="#d9d9d9">5</text>
<text transform="translate(124.8 532.37) scale(1.067 1)" text-anchor="end" font-family="'DejaVu Sans','Liberation Sans',sans-serif" font-size="13.8" fill="#d9d9d9">6</text>
<text transform="translate(124.8 514.82) scale(1.067 1)" text-anchor="end" font-family="'DejaVu Sans','Liberation Sans',sans-serif" font-size="13.8" fill="#d9d9d9">7</text>
<text transform="translate(124.8 497.28) scale(1.067 1)" text-anchor="end" font-family="'DejaVu Sans','Liberation Sans',sans-serif" font-size="13.8" fill="#d9d9d9">8</text>
<text transform="translate(124.8 479.73) scale(1.067 1)" text-anchor="end" font-family="'DejaVu Sans','Liberation Sans',sans-serif" font-size="13.8" fill="#d9d9d9">9</text>
<text transform="translate(124.8 697.34) scale(1.067 1)" text-anchor="end" font-family="'DejaVu Sans','Liberation Sans',sans-serif" font-size="13.8" fill="#d9d9d9">0</text>
<text transform="translate(124.8 750.44) scale(1.067 1)" text-anchor="end" font-family="'DejaVu Sans','Liberation Sans',sans-serif" font-size="13.8" fill="#d9d9d9">-50</text>
<text transform="translate(124.8 803.54) scale(1.067 1)" text-anchor="end" font-family="'DejaVu Sans','Liberation Sans',sans-serif" font-size="13.8" fill="#d9d9d9">-100</text>
<text transform="translate(43.2 150.4) rotate(-90) scale(1 1.05)" text-anchor="middle" font-family="'Liberation Mono','DejaVu Sans Mono',monospace" font-size="15.6" fill="#e4e4e4">Btotal</text>
<text transform="translate(60.8 150.4) rotate(-90) scale(1 1.05)" text-anchor="middle" font-family="'Liberation Mono','DejaVu Sans Mono',monospace" font-size="15.6" fill="#e60000">Bz</text>
<text transform="translate(79.6 150.4) rotate(-90) scale(1 1.05)" text-anchor="middle" font-family="'Liberation Mono','DejaVu Sans Mono',monospace" font-size="15.6" fill="#e4e4e4">nT</text>
<text transform="translate(60.8 233.2) rotate(-90) scale(1 1.05)" text-anchor="middle" font-family="'Liberation Mono','DejaVu Sans Mono',monospace" font-size="15.6" fill="#ee8a00">Density</text>
<text transform="translate(79.2 233.6) rotate(-90) scale(1 1.05)" text-anchor="middle" font-family="'Liberation Mono','DejaVu Sans Mono',monospace" font-size="15.6" fill="#ee8a00">p/cm<tspan dx="1.6" dy="-8" font-size="9.2">3</tspan></text>
<text transform="translate(60.8 305) rotate(-90) scale(1 1.05)" text-anchor="middle" font-family="'Liberation Mono','DejaVu Sans Mono',monospace" font-size="15.6" fill="#e6e600">Speed</text>
<text transform="translate(79.6 305) rotate(-90) scale(1 1.05)" text-anchor="middle" font-family="'Liberation Mono','DejaVu Sans Mono',monospace" font-size="15.6" fill="#e6e600">km/s</text>
<text transform="translate(60.8 390.3) rotate(-90) scale(1 1.05)" text-anchor="middle" font-family="'Liberation Mono','DejaVu Sans Mono',monospace" font-size="15.6" fill="#00ad00">Temperature</text>
<text transform="translate(79.6 390.3) rotate(-90) scale(1 1.05)" text-anchor="middle" font-family="'Liberation Mono','DejaVu Sans Mono',monospace" font-size="15.6" fill="#00ad00">K</text>
<text transform="translate(59.9 544.2) rotate(-90) scale(1 1.05)" text-anchor="middle" font-family="'Liberation Mono','DejaVu Sans Mono',monospace" font-size="15.6" fill="#93cf3c">Pred. Est. Kp</text>
<text transform="translate(78.6 544.2) rotate(-90) scale(1 1.05)" text-anchor="middle" font-family="'Liberation Mono','DejaVu Sans Mono',monospace" font-size="15.6" fill="#00dede">SWPC Kp</text>
<text transform="translate(59.5 716.5) rotate(-90) scale(1 1.05)" text-anchor="middle" font-family="'Liberation Mono','DejaVu Sans Mono',monospace" font-size="15.6" fill="#e4e4e4">Geospace DST (nT)</text>
<text transform="translate(78.4 716.5) rotate(-90) scale(1 1.05)" text-anchor="middle" font-family="'Liberation Mono','DejaVu Sans Mono',monospace" font-size="15.6" fill="#e60000">Kyoto DST</text>
<text transform="translate(131.3 77) scale(1.067 1)" text-anchor="start" font-family="'Liberation Mono','DejaVu Sans Mono',monospace" font-size="20.3" fill="#e4e4e4" stroke="#e4e4e4" stroke-width="0.15" xml:space="preserve">Geospace Timeline : Latest 7 Days</text>
<text transform="translate(131.3 100) scale(1.067 1)" text-anchor="start" font-family="'Liberation Mono','DejaVu Sans Mono',monospace" font-size="14.71" fill="#e4e4e4" stroke="#e4e4e4" stroke-width="0.15" xml:space="preserve">Solar Wind Predicted at Earth</text>
<text transform="translate(659.7 76.5) scale(1.067 1)" text-anchor="start" font-family="'Liberation Mono','DejaVu Sans Mono',monospace" font-size="14.71" fill="#e4e4e4" stroke="#e4e4e4" stroke-width="0.15" xml:space="preserve">Current Time : 2026-01-15 15:34:06 UTC</text>
<text transform="translate(678.5 100) scale(1.067 1)" text-anchor="start" font-family="'Liberation Mono','DejaVu Sans Mono',monospace" font-size="14.71" fill="#e4e4e4" stroke="#e4e4e4" stroke-width="0.15" xml:space="preserve">Valid Time : 2026-01-15 16:01:00 (27 mins ahead)</text>
<text transform="translate(131.3 457.2) scale(1.067 1)" text-anchor="start" font-family="'Liberation Mono','DejaVu Sans Mono',monospace" font-size="14.71" fill="#e4e4e4" stroke="#e4e4e4" stroke-width="0.15" xml:space="preserve">Geospace Model Predicted Kp and DST (Ground Truth Data : SWPC Kp and Kyoto quick-look DST)</text>
<text transform="translate(132.15 828) scale(1.067 1)" text-anchor="middle" font-family="'Liberation Mono','DejaVu Sans Mono',monospace" font-size="16.82" fill="#e4e4e4" stroke="#e4e4e4" stroke-width="0.15" xml:space="preserve">Jan 09</text>
<text transform="translate(272.76 828) scale(1.067 1)" text-anchor="middle" font-family="'Liberation Mono','DejaVu Sans Mono',monospace" font-size="16.82" fill="#e4e4e4" stroke="#e4e4e4" stroke-width="0.15" xml:space="preserve">Jan 10</text>
<text transform="translate(413.37 828) scale(1.067 1)" text-anchor="middle" font-family="'Liberation Mono','DejaVu Sans Mono',monospace" font-size="16.82" fill="#e4e4e4" stroke="#e4e4e4" stroke-width="0.15" xml:space="preserve">Jan 11</text>
<text transform="translate(553.98 828) scale(1.067 1)" text-anchor="middle" font-family="'Liberation Mono','DejaVu Sans Mono',monospace" font-size="16.82" fill="#e4e4e4" stroke="#e4e4e4" stroke-width="0.15" xml:space="preserve">Jan 12</text>
<text transform="translate(694.59 828) scale(1.067 1)" text-anchor="middle" font-family="'Liberation Mono','DejaVu Sans Mono',monospace" font-size="16.82" fill="#e4e4e4" stroke="#e4e4e4" stroke-width="0.15" xml:space="preserve">Jan 13</text>
<text transform="translate(835.2 828) scale(1.067 1)" text-anchor="middle" font-family="'Liberation Mono','DejaVu Sans Mono',monospace" font-size="16.82" fill="#e4e4e4" stroke="#e4e4e4" stroke-width="0.15" xml:space="preserve">Jan 14</text>
<text transform="translate(975.81 828) scale(1.067 1)" text-anchor="middle" font-family="'Liberation Mono','DejaVu Sans Mono',monospace" font-size="16.82" fill="#e4e4e4" stroke="#e4e4e4" stroke-width="0.15" xml:space="preserve">Jan 15</text>
<text transform="translate(1116.42 828) scale(1.067 1)" text-anchor="middle" font-family="'Liberation Mono','DejaVu Sans Mono',monospace" font-size="16.82" fill="#e4e4e4" stroke="#e4e4e4" stroke-width="0.15" xml:space="preserve">Jan 16</text>
<text transform="translate(20.3 855.8) scale(1.067 1)" text-anchor="start" font-family="'Liberation Mono','DejaVu Sans Mono',monospace" font-size="14.71" fill="#e4e4e4" stroke="#e4e4e4" stroke-width="0.15" xml:space="preserve">Space Weather Prediction Center</text>
<text transform="translate(1169 855.8) scale(1.067 1)" text-anchor="end" font-family="'Liberation Mono','DejaVu Sans Mono',monospace" font-size="14.71" fill="#e4e4e4" stroke="#e4e4e4" stroke-width="0.15" xml:space="preserve">Version 2.0</text>
</svg>
</body>
</html>
